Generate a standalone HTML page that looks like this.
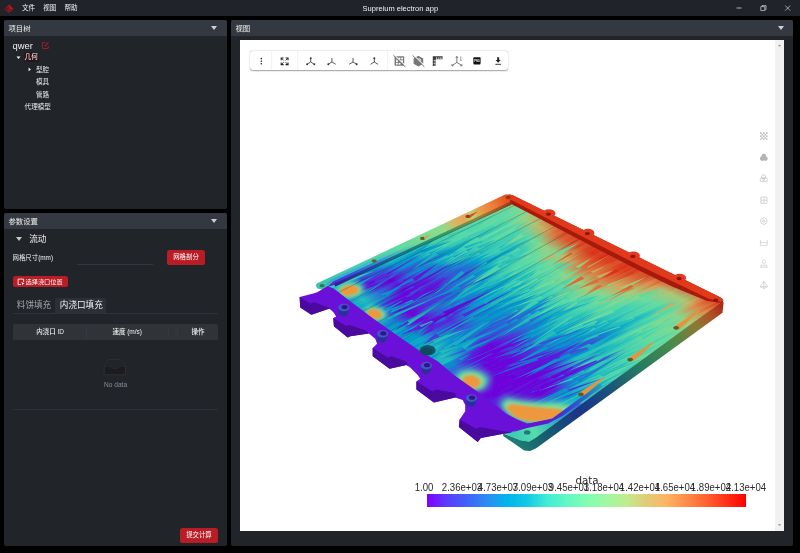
<!DOCTYPE html>
<html lang="zh-CN">
<head>
<meta charset="utf-8">
<title>Supreium electron app</title>
<style>
html,body{margin:0;padding:0;background:#000;}
body{width:800px;height:553px;overflow:hidden;position:relative;font-family:"Liberation Sans","Noto Sans CJK SC",sans-serif;color:#e4e6ea;}
.abs{position:absolute;}
.t{position:absolute;white-space:nowrap;line-height:1;opacity:.999;}
#titlebar{position:absolute;left:0;top:0;width:800px;height:15.8px;background:#202329;}
.menu{font-size:6.6px;top:5px;color:#f2f2f2;}
.panel{position:absolute;background:#212429;border-radius:2px;overflow:hidden;}
.phead{position:absolute;left:0;top:0;right:0;height:16.3px;background:#343840;}
.ptitle{font-size:7.4px;top:5.2px;left:4.4px;color:#f0f0f0;}
.caret{position:absolute;width:0;height:0;border-left:3.5px solid transparent;border-right:3.5px solid transparent;border-top:4.2px solid #cdcfd3;}
.lg{font-size:11.2px;color:#2a2a2a;}
.lg .c{display:inline-block;transform:translateX(-50%) scaleX(0.86);}
.lg .d{display:inline-block;transform:translateX(-50%);}
.btn{opacity:.999;position:absolute;background:#b81c25;border-radius:2.6px;color:#fff;font-size:6.4px;text-align:center;white-space:nowrap;}
</style>
</head>
<body>
<div id="titlebar">
  <svg class="abs" style="left:4px;top:3.7px" width="10.4" height="9.2" viewBox="0 0 10.4 9.2"><path d="M5 0.6 L9.4 5.3 L4.8 8.4 L0.6 5.7 Z" fill="#5a1216"/><path d="M5 0.6 L9.4 5.3 L5.8 4.9 Z" fill="#b01f26"/><path d="M5 0.6 L5.8 4.9 L2.8 4.5 Z" fill="#8a181e"/><path d="M2.8 4.5 L5.8 4.9 L9.4 5.3 L4.8 8.4 Z" fill="#6e1419"/><path d="M0.6 5.7 L5 0.6 L9.4 5.3 L4.8 8.4 Z" fill="none" stroke="#b82028" stroke-width="0.5"/><path d="M3.2 6 L4.9 7.1 M4.6 5.6 L6.4 6.5" stroke="#c8242c" stroke-width="0.6"/></svg>
  <div class="t menu" style="left:22px">文件</div>
  <div class="t menu" style="left:43.2px">视图</div>
  <div class="t menu" style="left:64.5px">帮助</div>
  <div class="t" id="apptitle" style="left:362.6px;top:4.7px;font-size:7.5px;color:#f0f0f0">Supreium electron app</div>
  <svg class="abs" style="left:730px;top:0" width="70" height="16" viewBox="0 0 70 16">
    <path d="M6.5 8 H11.5" stroke="#d8d8d8" stroke-width="0.8" fill="none"/>
    <path d="M30.8 6.6 h4 v4 h-4 z M32 6.6 v-1 h4 v4 h-1" stroke="#d8d8d8" stroke-width="0.7" fill="none"/>
    <path d="M55.2 5.6 l5 5 M60.2 5.6 l-5 5" stroke="#d8d8d8" stroke-width="0.7" fill="none"/>
  </svg>
</div>

<!-- project tree panel -->
<div class="panel" id="p1" style="left:4px;top:19.7px;width:223px;height:189.2px">
  <div class="phead"></div>
  <div class="t ptitle">项目树</div>
  <div class="caret" style="left:207.4px;top:6.1px"></div>
  <div class="t" style="left:8.6px;top:21.6px;font-size:9.4px;color:#f0f0f0">qwer</div>
  <svg class="abs" style="left:37px;top:21.8px" width="9" height="9" viewBox="0 0 9 9"><path d="M4.2 1.6 H1.4 V7.4 H7.2 V4.8" fill="none" stroke="#a82028" stroke-width="0.9"/><path d="M3.6 5.4 L7.4 1.4" stroke="#a82028" stroke-width="1.1"/></svg>
  <svg class="abs" style="left:12px;top:36px" width="5" height="4" viewBox="0 0 5 4"><path d="M0.5 0.6H4.5L2.5 2.9Z" fill="#f4f4f4"/></svg>
  <div class="abs" style="left:19.6px;top:32.8px;width:15px;height:9.8px;background:#2b1518;border-radius:2px"></div>
  <div class="t" style="left:20.6px;top:34.6px;font-size:6.6px;color:#f4f4f4">几何</div>
  <svg class="abs" style="left:24px;top:47.4px" width="4" height="5" viewBox="0 0 4 5"><path d="M0.6 0.5L2.9 2.4L0.6 4.3Z" fill="#f4f4f4"/></svg>
  <div class="t" style="left:32px;top:47px;font-size:6.6px;color:#e8e8e8">型腔</div>
  <div class="t" style="left:32px;top:59.6px;font-size:6.6px;color:#e8e8e8">模具</div>
  <div class="t" style="left:32px;top:72.2px;font-size:6.6px;color:#e8e8e8">管路</div>
  <div class="t" style="left:20.6px;top:84.1px;font-size:6.6px;color:#e8e8e8">代理模型</div>
</div>

<!-- parameter panel -->
<div class="panel" id="p2" style="left:4px;top:212.6px;width:223px;height:333px">
  <div class="phead"></div>
  <div class="t ptitle">参数设置</div>
  <div class="caret" style="left:207.4px;top:6.1px"></div>
  <div class="caret" style="left:12px;top:24.4px;border-top-color:#c4c6ca"></div>
  <div class="t" style="left:25.2px;top:22px;font-size:8.6px;color:#f0f0f0">流动</div>
  <div class="t" style="left:8.6px;top:42px;font-size:6.4px;color:#f0f0f0">网格尺寸(mm)</div>
  <div class="abs" style="left:73.2px;top:51.2px;width:76px;height:0.6px;background:#34373e"></div>
  <div class="btn" style="left:163px;top:37.6px;width:38px;height:14.6px;line-height:14.6px">网格剖分</div>
  <div class="btn" style="left:8.6px;top:63.4px;width:55.6px;height:11.4px;line-height:11.4px;font-size:6.2px;text-indent:7.4px">选择浇口位置</div>
  <svg class="abs" style="left:13.2px;top:65.2px" width="8.8" height="8.8" viewBox="0 0 8 8"><path d="M3.6 6 H1 V1 H6 V3.6" fill="none" stroke="#fff" stroke-width="0.8"/><path d="M4 3.6 L6.8 5 L5.6 5.4 L5.2 6.8 Z" fill="#fff"/></svg>
  <div class="abs" style="left:8.6px;top:100.4px;width:205.6px;height:0.6px;background:#2f3239"></div>
  <div class="abs" style="left:51px;top:85.4px;width:51px;height:15.2px;background:#2c2f36;border-radius:2px 2px 0 0"></div>
  <div class="t" style="left:12.8px;top:88.6px;font-size:8.6px;color:#a0a3a9">料饼填充</div>
  <div class="t" style="left:55.8px;top:88.6px;font-size:8.6px;color:#eef0f2">内浇口填充</div>
  <div class="abs" style="left:8.8px;top:111.6px;width:205.4px;height:16px;background:#303338;border-radius:2px 2px 0 0"></div>
  <div class="abs" style="left:82px;top:114px;width:0.5px;height:11px;background:#373a41"></div>
  <div class="abs" style="left:163.8px;top:114px;width:0.5px;height:11px;background:#35383f"></div><div class="abs" style="left:173.2px;top:114px;width:0.5px;height:11px;background:#35383f"></div>
  <div class="t" style="left:32.2px;top:116.5px;font-size:6.5px;color:#f0f0f0;font-weight:500">内浇口 ID</div>
  <div class="t" style="left:108.4px;top:116.5px;font-size:6.5px;color:#f0f0f0;font-weight:500">速度 (m/s)</div>
  <div class="t" style="left:187.4px;top:116.5px;font-size:6.5px;color:#f0f0f0;font-weight:500">操作</div>
  <svg class="abs" style="left:99px;top:145px" width="24" height="19" viewBox="0 0 24 19"><path d="M1.2 8 L6 1.6 H17.6 L22.4 8 V16.8 H1.2 Z" fill="#1b1c1f" stroke="#3a3430" stroke-width="0.8"/><path d="M1.2 8 H7.4 Q7.6 10.4 12 10.4 Q16.2 10.4 16.4 8 H22.4" fill="none" stroke="#3a3430" stroke-width="0.8"/><path d="M1.6 8 L6 2 H17.6 L22 8 H16.4 Q16.2 10.4 12 10.4 Q7.6 10.4 7.4 8 Z" fill="#212429"/></svg>
  <div class="t" style="left:100px;top:169.4px;font-size:6.6px;color:#8a8d93">No data</div>
  <div class="abs" style="left:8.8px;top:196.4px;width:205.4px;height:0.6px;background:#2c2f35"></div>
  <div class="btn" style="left:175.8px;top:315.6px;width:38.4px;height:14.6px;line-height:14.6px">提交计算</div>
</div>

<!-- view panel -->
<div class="panel" id="p3" style="left:231px;top:19.7px;width:561.6px;height:525.9px">
  <div class="phead"></div>
  <div class="t ptitle">视图</div>
  <div class="caret" style="left:546.6px;top:6.1px"></div>
  <div class="abs" id="canvas" style="left:8.8px;top:20.3px;width:544.2px;height:490.7px;background:#fff;overflow:hidden">
    <svg class="abs" style="left:0;top:0" width="543.6" height="491.0" viewBox="0 0 543.6 491.0"><defs><clipPath id="plate"><polygon points="78.2,246.0 289.2,402.0 482.2,261.5 268.2,155.0"/></clipPath><linearGradient id="g0" gradientUnits="userSpaceOnUse" x1="79.0" y1="246.6" x2="269.0" y2="155.4"><stop offset="0.000" stop-color="#5ad9a6"/><stop offset="0.083" stop-color="#7fda91"/><stop offset="0.167" stop-color="#67db9f"/><stop offset="0.250" stop-color="#7bda94"/><stop offset="0.333" stop-color="#8bd78a"/><stop offset="0.417" stop-color="#84d88e"/><stop offset="0.500" stop-color="#97d283"/><stop offset="0.583" stop-color="#89d78b"/><stop offset="0.667" stop-color="#81d990"/><stop offset="0.750" stop-color="#76db96"/><stop offset="0.833" stop-color="#8dd689"/><stop offset="0.917" stop-color="#a8c978"/><stop offset="1.000" stop-color="#db7d41"/></linearGradient><linearGradient id="g1" gradientUnits="userSpaceOnUse" x1="80.5" y1="247.7" x2="270.6" y2="156.2"><stop offset="0.000" stop-color="#3bcdb5"/><stop offset="0.083" stop-color="#54d8a9"/><stop offset="0.167" stop-color="#2cc3bb"/><stop offset="0.250" stop-color="#3accb5"/><stop offset="0.333" stop-color="#4bd5ad"/><stop offset="0.417" stop-color="#44d2b0"/><stop offset="0.500" stop-color="#5ad9a6"/><stop offset="0.583" stop-color="#59d9a6"/><stop offset="0.667" stop-color="#60daa2"/><stop offset="0.750" stop-color="#62dba1"/><stop offset="0.833" stop-color="#7eda92"/><stop offset="0.917" stop-color="#9bd080"/><stop offset="1.000" stop-color="#db8f4c"/></linearGradient><linearGradient id="g2" gradientUnits="userSpaceOnUse" x1="82.1" y1="248.9" x2="272.2" y2="157.0"><stop offset="0.000" stop-color="#3bcdb5"/><stop offset="0.083" stop-color="#4fd6ab"/><stop offset="0.167" stop-color="#1cb6c1"/><stop offset="0.250" stop-color="#28c1bc"/><stop offset="0.333" stop-color="#47d3af"/><stop offset="0.417" stop-color="#47d3af"/><stop offset="0.500" stop-color="#66db9f"/><stop offset="0.583" stop-color="#64dba0"/><stop offset="0.667" stop-color="#6bdb9c"/><stop offset="0.750" stop-color="#69db9d"/><stop offset="0.833" stop-color="#83d98f"/><stop offset="0.917" stop-color="#99d181"/><stop offset="1.000" stop-color="#db9751"/></linearGradient><linearGradient id="g3" gradientUnits="userSpaceOnUse" x1="83.7" y1="250.0" x2="273.7" y2="157.8"><stop offset="0.000" stop-color="#3cceb4"/><stop offset="0.083" stop-color="#53d7a9"/><stop offset="0.167" stop-color="#1ab5c2"/><stop offset="0.250" stop-color="#2cc3bb"/><stop offset="0.333" stop-color="#51d7aa"/><stop offset="0.417" stop-color="#52d7aa"/><stop offset="0.500" stop-color="#74db98"/><stop offset="0.583" stop-color="#76db97"/><stop offset="0.667" stop-color="#7fda91"/><stop offset="0.750" stop-color="#7cda93"/><stop offset="0.833" stop-color="#8fd587"/><stop offset="0.917" stop-color="#9bd080"/><stop offset="1.000" stop-color="#db9a53"/></linearGradient><linearGradient id="g4" gradientUnits="userSpaceOnUse" x1="85.2" y1="251.2" x2="275.3" y2="158.6"><stop offset="0.000" stop-color="#26bfbe"/><stop offset="0.083" stop-color="#3dceb4"/><stop offset="0.167" stop-color="#0497cc"/><stop offset="0.250" stop-color="#13afc4"/><stop offset="0.333" stop-color="#34c9b8"/><stop offset="0.417" stop-color="#2dc4ba"/><stop offset="0.500" stop-color="#4cd5ac"/><stop offset="0.583" stop-color="#52d7aa"/><stop offset="0.667" stop-color="#61daa2"/><stop offset="0.750" stop-color="#62dba1"/><stop offset="0.833" stop-color="#76db96"/><stop offset="0.917" stop-color="#80d991"/><stop offset="1.000" stop-color="#b8bd6d"/></linearGradient><linearGradient id="g5" gradientUnits="userSpaceOnUse" x1="86.8" y1="252.4" x2="276.9" y2="159.3"><stop offset="0.000" stop-color="#10acc5"/><stop offset="0.083" stop-color="#26bfbd"/><stop offset="0.167" stop-color="#256dd4"/><stop offset="0.250" stop-color="#0c8ece"/><stop offset="0.333" stop-color="#1fb9c0"/><stop offset="0.417" stop-color="#1db8c1"/><stop offset="0.500" stop-color="#45d2b0"/><stop offset="0.583" stop-color="#49d4ae"/><stop offset="0.667" stop-color="#56d8a8"/><stop offset="0.750" stop-color="#52d7aa"/><stop offset="0.833" stop-color="#70db9a"/><stop offset="0.917" stop-color="#81d990"/><stop offset="1.000" stop-color="#c0b667"/></linearGradient><linearGradient id="g6" gradientUnits="userSpaceOnUse" x1="88.4" y1="253.5" x2="278.5" y2="160.1"><stop offset="0.000" stop-color="#1bb6c1"/><stop offset="0.083" stop-color="#2cc4bb"/><stop offset="0.167" stop-color="#2c63d5"/><stop offset="0.250" stop-color="#1582d0"/><stop offset="0.333" stop-color="#19b4c2"/><stop offset="0.417" stop-color="#16b2c3"/><stop offset="0.500" stop-color="#40d0b2"/><stop offset="0.583" stop-color="#46d2af"/><stop offset="0.667" stop-color="#54d7a9"/><stop offset="0.750" stop-color="#4ed6ab"/><stop offset="0.833" stop-color="#66db9f"/><stop offset="0.917" stop-color="#6fdb9a"/><stop offset="1.000" stop-color="#a6ca79"/></linearGradient><linearGradient id="g7" gradientUnits="userSpaceOnUse" x1="89.9" y1="254.7" x2="280.1" y2="160.9"><stop offset="0.000" stop-color="#029dca"/><stop offset="0.083" stop-color="#17b2c3"/><stop offset="0.167" stop-color="#463dd9"/><stop offset="0.250" stop-color="#2968d5"/><stop offset="0.333" stop-color="#0ba6c7"/><stop offset="0.417" stop-color="#0aa6c7"/><stop offset="0.500" stop-color="#39ccb5"/><stop offset="0.583" stop-color="#42d1b1"/><stop offset="0.667" stop-color="#52d7aa"/><stop offset="0.750" stop-color="#4ed6ab"/><stop offset="0.833" stop-color="#65dba0"/><stop offset="0.917" stop-color="#6ddb9b"/><stop offset="1.000" stop-color="#a1cc7c"/></linearGradient><linearGradient id="g8" gradientUnits="userSpaceOnUse" x1="91.5" y1="255.8" x2="281.7" y2="161.7"><stop offset="0.000" stop-color="#0398cc"/><stop offset="0.083" stop-color="#0eaac6"/><stop offset="0.167" stop-color="#5921db"/><stop offset="0.250" stop-color="#3d4bd8"/><stop offset="0.333" stop-color="#0694cc"/><stop offset="0.417" stop-color="#0595cc"/><stop offset="0.500" stop-color="#2cc3bb"/><stop offset="0.583" stop-color="#3bcdb5"/><stop offset="0.667" stop-color="#4ed6ac"/><stop offset="0.750" stop-color="#4ed6ac"/><stop offset="0.833" stop-color="#68db9e"/><stop offset="0.917" stop-color="#71db99"/><stop offset="1.000" stop-color="#a7c978"/></linearGradient><linearGradient id="g9" gradientUnits="userSpaceOnUse" x1="93.0" y1="257.0" x2="283.3" y2="162.5"><stop offset="0.000" stop-color="#0eaac6"/><stop offset="0.083" stop-color="#16b1c4"/><stop offset="0.167" stop-color="#6115db"/><stop offset="0.250" stop-color="#512dda"/><stop offset="0.333" stop-color="#1681d1"/><stop offset="0.417" stop-color="#1286cf"/><stop offset="0.500" stop-color="#22bcbf"/><stop offset="0.583" stop-color="#35c9b7"/><stop offset="0.667" stop-color="#49d4ae"/><stop offset="0.750" stop-color="#4cd5ad"/><stop offset="0.833" stop-color="#62dba1"/><stop offset="0.917" stop-color="#6adb9d"/><stop offset="1.000" stop-color="#9bd080"/></linearGradient><linearGradient id="g10" gradientUnits="userSpaceOnUse" x1="94.6" y1="258.1" x2="284.8" y2="163.3"><stop offset="0.000" stop-color="#0da9c7"/><stop offset="0.083" stop-color="#1db8c1"/><stop offset="0.167" stop-color="#532ada"/><stop offset="0.250" stop-color="#3f48d8"/><stop offset="0.333" stop-color="#0199cb"/><stop offset="0.417" stop-color="#04a0c9"/><stop offset="0.500" stop-color="#34c9b8"/><stop offset="0.583" stop-color="#45d2b0"/><stop offset="0.667" stop-color="#54d7a9"/><stop offset="0.750" stop-color="#50d6ab"/><stop offset="0.833" stop-color="#5ddaa4"/><stop offset="0.917" stop-color="#5bd9a5"/><stop offset="1.000" stop-color="#87d88d"/></linearGradient><linearGradient id="g11" gradientUnits="userSpaceOnUse" x1="96.2" y1="259.3" x2="286.4" y2="164.1"><stop offset="0.000" stop-color="#0595cc"/><stop offset="0.083" stop-color="#0eaac6"/><stop offset="0.167" stop-color="#6114db"/><stop offset="0.250" stop-color="#522cda"/><stop offset="0.333" stop-color="#0f8acf"/><stop offset="0.417" stop-color="#0398cb"/><stop offset="0.500" stop-color="#2dc4ba"/><stop offset="0.583" stop-color="#41d0b2"/><stop offset="0.667" stop-color="#4ed6ab"/><stop offset="0.750" stop-color="#4ad4ad"/><stop offset="0.833" stop-color="#5ddaa4"/><stop offset="0.917" stop-color="#63dba1"/><stop offset="1.000" stop-color="#97d282"/></linearGradient><linearGradient id="g12" gradientUnits="userSpaceOnUse" x1="97.7" y1="260.4" x2="288.0" y2="164.9"><stop offset="0.000" stop-color="#0aa6c7"/><stop offset="0.083" stop-color="#1bb6c1"/><stop offset="0.167" stop-color="#5526da"/><stop offset="0.250" stop-color="#522bda"/><stop offset="0.333" stop-color="#0b8fce"/><stop offset="0.417" stop-color="#07a3c8"/><stop offset="0.500" stop-color="#35cab7"/><stop offset="0.583" stop-color="#4ed6ac"/><stop offset="0.667" stop-color="#5edaa3"/><stop offset="0.750" stop-color="#5ddaa4"/><stop offset="0.833" stop-color="#68db9e"/><stop offset="0.917" stop-color="#6adb9d"/><stop offset="1.000" stop-color="#98d182"/></linearGradient><linearGradient id="g13" gradientUnits="userSpaceOnUse" x1="99.3" y1="261.6" x2="289.6" y2="165.7"><stop offset="0.000" stop-color="#0595cc"/><stop offset="0.083" stop-color="#11adc5"/><stop offset="0.167" stop-color="#5a1fdb"/><stop offset="0.250" stop-color="#5b1edb"/><stop offset="0.333" stop-color="#1d78d2"/><stop offset="0.417" stop-color="#1286cf"/><stop offset="0.500" stop-color="#10abc6"/><stop offset="0.583" stop-color="#31c7b9"/><stop offset="0.667" stop-color="#48d3ae"/><stop offset="0.750" stop-color="#50d6ab"/><stop offset="0.833" stop-color="#5ddaa4"/><stop offset="0.917" stop-color="#65dba0"/><stop offset="1.000" stop-color="#95d284"/></linearGradient><linearGradient id="g14" gradientUnits="userSpaceOnUse" x1="100.9" y1="262.8" x2="291.2" y2="166.4"><stop offset="0.000" stop-color="#08a4c8"/><stop offset="0.083" stop-color="#12adc5"/><stop offset="0.167" stop-color="#650edb"/><stop offset="0.250" stop-color="#6e00db"/><stop offset="0.333" stop-color="#3753d7"/><stop offset="0.417" stop-color="#2271d3"/><stop offset="0.500" stop-color="#039fca"/><stop offset="0.583" stop-color="#25bebe"/><stop offset="0.667" stop-color="#3bcdb4"/><stop offset="0.750" stop-color="#43d1b1"/><stop offset="0.833" stop-color="#53d7a9"/><stop offset="0.917" stop-color="#65dba0"/><stop offset="1.000" stop-color="#97d282"/></linearGradient><linearGradient id="g15" gradientUnits="userSpaceOnUse" x1="102.4" y1="263.9" x2="292.8" y2="167.2"><stop offset="0.000" stop-color="#197dd1"/><stop offset="0.083" stop-color="#0299cb"/><stop offset="0.167" stop-color="#6808db"/><stop offset="0.250" stop-color="#6e00db"/><stop offset="0.333" stop-color="#3f48d8"/><stop offset="0.417" stop-color="#305ed6"/><stop offset="0.500" stop-color="#1385d0"/><stop offset="0.583" stop-color="#11adc5"/><stop offset="0.667" stop-color="#2ac2bc"/><stop offset="0.750" stop-color="#35c9b7"/><stop offset="0.833" stop-color="#49d4ae"/><stop offset="0.917" stop-color="#67db9f"/><stop offset="1.000" stop-color="#9cd080"/></linearGradient><linearGradient id="g16" gradientUnits="userSpaceOnUse" x1="104.0" y1="265.1" x2="294.4" y2="168.0"><stop offset="0.000" stop-color="#0397cc"/><stop offset="0.083" stop-color="#15b1c4"/><stop offset="0.167" stop-color="#4d33da"/><stop offset="0.250" stop-color="#6e00db"/><stop offset="0.333" stop-color="#2b64d5"/><stop offset="0.417" stop-color="#197dd1"/><stop offset="0.500" stop-color="#029dca"/><stop offset="0.583" stop-color="#24bebe"/><stop offset="0.667" stop-color="#3bcdb5"/><stop offset="0.750" stop-color="#41d0b2"/><stop offset="0.833" stop-color="#4dd5ac"/><stop offset="0.917" stop-color="#6cdb9c"/><stop offset="1.000" stop-color="#a0cd7d"/></linearGradient><linearGradient id="g17" gradientUnits="userSpaceOnUse" x1="105.6" y1="266.2" x2="295.9" y2="168.8"><stop offset="0.000" stop-color="#0a90cd"/><stop offset="0.083" stop-color="#11adc5"/><stop offset="0.167" stop-color="#4938d9"/><stop offset="0.250" stop-color="#6e00db"/><stop offset="0.333" stop-color="#2c63d5"/><stop offset="0.417" stop-color="#1780d1"/><stop offset="0.500" stop-color="#06a2c9"/><stop offset="0.583" stop-color="#1eb9c0"/><stop offset="0.667" stop-color="#2bc3bb"/><stop offset="0.750" stop-color="#28c1bc"/><stop offset="0.833" stop-color="#3dceb4"/><stop offset="0.917" stop-color="#6fdb9a"/><stop offset="1.000" stop-color="#abc776"/></linearGradient><linearGradient id="g18" gradientUnits="userSpaceOnUse" x1="107.1" y1="267.4" x2="297.5" y2="169.6"><stop offset="0.000" stop-color="#06a2c9"/><stop offset="0.083" stop-color="#25bebe"/><stop offset="0.167" stop-color="#2c63d5"/><stop offset="0.250" stop-color="#5920db"/><stop offset="0.333" stop-color="#1582d0"/><stop offset="0.417" stop-color="#009bca"/><stop offset="0.500" stop-color="#1ab5c2"/><stop offset="0.583" stop-color="#3bcdb4"/><stop offset="0.667" stop-color="#52d7aa"/><stop offset="0.750" stop-color="#56d8a7"/><stop offset="0.833" stop-color="#5bd9a5"/><stop offset="0.917" stop-color="#87d88c"/><stop offset="1.000" stop-color="#bbba6b"/></linearGradient><linearGradient id="g19" gradientUnits="userSpaceOnUse" x1="108.7" y1="268.5" x2="299.1" y2="170.4"><stop offset="0.000" stop-color="#029eca"/><stop offset="0.083" stop-color="#22bcbf"/><stop offset="0.167" stop-color="#276bd4"/><stop offset="0.250" stop-color="#5a1fdb"/><stop offset="0.333" stop-color="#1582d0"/><stop offset="0.417" stop-color="#019cca"/><stop offset="0.500" stop-color="#19b5c2"/><stop offset="0.583" stop-color="#41d0b2"/><stop offset="0.667" stop-color="#5edaa3"/><stop offset="0.750" stop-color="#69db9e"/><stop offset="0.833" stop-color="#68db9e"/><stop offset="0.917" stop-color="#96d283"/><stop offset="1.000" stop-color="#caad60"/></linearGradient><linearGradient id="g20" gradientUnits="userSpaceOnUse" x1="110.2" y1="269.7" x2="300.7" y2="171.2"><stop offset="0.000" stop-color="#10acc5"/><stop offset="0.083" stop-color="#21bbbf"/><stop offset="0.167" stop-color="#2f5fd6"/><stop offset="0.250" stop-color="#6e00db"/><stop offset="0.333" stop-color="#2f5fd6"/><stop offset="0.417" stop-color="#1384d0"/><stop offset="0.500" stop-color="#0aa6c7"/><stop offset="0.583" stop-color="#27c0bd"/><stop offset="0.667" stop-color="#3ccdb4"/><stop offset="0.750" stop-color="#3ecfb3"/><stop offset="0.833" stop-color="#4bd4ad"/><stop offset="0.917" stop-color="#8fd587"/><stop offset="1.000" stop-color="#d0a75c"/></linearGradient><linearGradient id="g21" gradientUnits="userSpaceOnUse" x1="111.8" y1="270.8" x2="302.3" y2="172.0"><stop offset="0.000" stop-color="#0397cc"/><stop offset="0.083" stop-color="#18b3c3"/><stop offset="0.167" stop-color="#266cd4"/><stop offset="0.250" stop-color="#650ddb"/><stop offset="0.333" stop-color="#266bd4"/><stop offset="0.417" stop-color="#1089cf"/><stop offset="0.500" stop-color="#06a2c9"/><stop offset="0.583" stop-color="#25bebe"/><stop offset="0.667" stop-color="#3ecfb3"/><stop offset="0.750" stop-color="#44d2b0"/><stop offset="0.833" stop-color="#50d6ab"/><stop offset="0.917" stop-color="#9ccf7f"/><stop offset="1.000" stop-color="#db934f"/></linearGradient><linearGradient id="g22" gradientUnits="userSpaceOnUse" x1="113.4" y1="272.0" x2="303.9" y2="172.7"><stop offset="0.000" stop-color="#06a1c9"/><stop offset="0.083" stop-color="#15b0c4"/><stop offset="0.167" stop-color="#2d62d5"/><stop offset="0.250" stop-color="#6e00db"/><stop offset="0.333" stop-color="#3852d7"/><stop offset="0.417" stop-color="#1d78d2"/><stop offset="0.500" stop-color="#0596cc"/><stop offset="0.583" stop-color="#25bebe"/><stop offset="0.667" stop-color="#48d3ae"/><stop offset="0.750" stop-color="#5ad9a5"/><stop offset="0.833" stop-color="#56d8a8"/><stop offset="0.917" stop-color="#9ad081"/><stop offset="1.000" stop-color="#d3a45a"/></linearGradient><linearGradient id="g23" gradientUnits="userSpaceOnUse" x1="114.9" y1="273.2" x2="305.5" y2="173.5"><stop offset="0.000" stop-color="#0eaac6"/><stop offset="0.083" stop-color="#1eb9c0"/><stop offset="0.167" stop-color="#1c79d2"/><stop offset="0.250" stop-color="#6015db"/><stop offset="0.333" stop-color="#2e61d6"/><stop offset="0.417" stop-color="#197ed1"/><stop offset="0.500" stop-color="#0a8fce"/><stop offset="0.583" stop-color="#25bebe"/><stop offset="0.667" stop-color="#4ed6ac"/><stop offset="0.750" stop-color="#67db9f"/><stop offset="0.833" stop-color="#62daa2"/><stop offset="0.917" stop-color="#abc675"/><stop offset="1.000" stop-color="#db8b4a"/></linearGradient><linearGradient id="g24" gradientUnits="userSpaceOnUse" x1="116.5" y1="274.3" x2="307.0" y2="174.3"><stop offset="0.000" stop-color="#0595cc"/><stop offset="0.083" stop-color="#019acb"/><stop offset="0.167" stop-color="#4047d8"/><stop offset="0.250" stop-color="#6e00db"/><stop offset="0.333" stop-color="#512cda"/><stop offset="0.417" stop-color="#325cd6"/><stop offset="0.500" stop-color="#1b7ad2"/><stop offset="0.583" stop-color="#11adc5"/><stop offset="0.667" stop-color="#37cbb6"/><stop offset="0.750" stop-color="#4fd6ab"/><stop offset="0.833" stop-color="#4ed6ab"/><stop offset="0.917" stop-color="#a0cd7d"/><stop offset="1.000" stop-color="#db9751"/></linearGradient><linearGradient id="g25" gradientUnits="userSpaceOnUse" x1="118.1" y1="275.5" x2="308.6" y2="175.1"><stop offset="0.000" stop-color="#019cca"/><stop offset="0.083" stop-color="#029eca"/><stop offset="0.167" stop-color="#3852d7"/><stop offset="0.250" stop-color="#6e00db"/><stop offset="0.333" stop-color="#4441d9"/><stop offset="0.417" stop-color="#2074d3"/><stop offset="0.500" stop-color="#0990cd"/><stop offset="0.583" stop-color="#18b3c3"/><stop offset="0.667" stop-color="#32c7b9"/><stop offset="0.750" stop-color="#3ecfb3"/><stop offset="0.833" stop-color="#4ad4ae"/><stop offset="0.917" stop-color="#a9c877"/><stop offset="1.000" stop-color="#db7c41"/></linearGradient><linearGradient id="g26" gradientUnits="userSpaceOnUse" x1="119.6" y1="276.6" x2="310.2" y2="175.9"><stop offset="0.000" stop-color="#049fca"/><stop offset="0.083" stop-color="#0a90cd"/><stop offset="0.167" stop-color="#4d33da"/><stop offset="0.250" stop-color="#6e00db"/><stop offset="0.333" stop-color="#6410db"/><stop offset="0.417" stop-color="#4144d9"/><stop offset="0.500" stop-color="#305ed6"/><stop offset="0.583" stop-color="#0298cb"/><stop offset="0.667" stop-color="#22bcbf"/><stop offset="0.750" stop-color="#39ccb5"/><stop offset="0.833" stop-color="#45d2b0"/><stop offset="0.917" stop-color="#a2cc7b"/><stop offset="1.000" stop-color="#db8b4a"/></linearGradient><linearGradient id="g27" gradientUnits="userSpaceOnUse" x1="121.2" y1="277.8" x2="311.8" y2="176.7"><stop offset="0.000" stop-color="#0991cd"/><stop offset="0.083" stop-color="#197dd1"/><stop offset="0.167" stop-color="#5a1fdb"/><stop offset="0.250" stop-color="#6e00db"/><stop offset="0.333" stop-color="#6114db"/><stop offset="0.417" stop-color="#3359d6"/><stop offset="0.500" stop-color="#197cd1"/><stop offset="0.583" stop-color="#0faac6"/><stop offset="0.667" stop-color="#2cc4bb"/><stop offset="0.750" stop-color="#3acdb5"/><stop offset="0.833" stop-color="#4ed6ac"/><stop offset="0.917" stop-color="#afc373"/><stop offset="1.000" stop-color="#db763e"/></linearGradient><linearGradient id="g28" gradientUnits="userSpaceOnUse" x1="122.7" y1="278.9" x2="313.4" y2="177.5"><stop offset="0.000" stop-color="#05a0c9"/><stop offset="0.083" stop-color="#0a90cd"/><stop offset="0.167" stop-color="#463dd9"/><stop offset="0.250" stop-color="#5d1adb"/><stop offset="0.333" stop-color="#4c34da"/><stop offset="0.417" stop-color="#276bd4"/><stop offset="0.500" stop-color="#197cd1"/><stop offset="0.583" stop-color="#15b0c4"/><stop offset="0.667" stop-color="#35cab7"/><stop offset="0.750" stop-color="#45d2b0"/><stop offset="0.833" stop-color="#5fdaa3"/><stop offset="0.917" stop-color="#c0b768"/><stop offset="1.000" stop-color="#db5b2f"/></linearGradient><linearGradient id="g29" gradientUnits="userSpaceOnUse" x1="124.3" y1="280.1" x2="315.1" y2="178.3"><stop offset="0.000" stop-color="#0892cd"/><stop offset="0.083" stop-color="#2271d3"/><stop offset="0.167" stop-color="#6b04db"/><stop offset="0.250" stop-color="#6e00db"/><stop offset="0.333" stop-color="#6d00db"/><stop offset="0.417" stop-color="#4046d8"/><stop offset="0.500" stop-color="#2c63d5"/><stop offset="0.583" stop-color="#0299cb"/><stop offset="0.667" stop-color="#1ab6c2"/><stop offset="0.750" stop-color="#24bdbe"/><stop offset="0.833" stop-color="#4ed6ab"/><stop offset="0.917" stop-color="#b9bc6c"/><stop offset="1.000" stop-color="#db5c2f"/></linearGradient><linearGradient id="g30" gradientUnits="userSpaceOnUse" x1="125.9" y1="281.2" x2="316.8" y2="179.2"><stop offset="0.000" stop-color="#0a90cd"/><stop offset="0.083" stop-color="#246ed4"/><stop offset="0.167" stop-color="#6e00db"/><stop offset="0.250" stop-color="#6e00db"/><stop offset="0.333" stop-color="#6b05db"/><stop offset="0.417" stop-color="#3f48d8"/><stop offset="0.500" stop-color="#2e60d6"/><stop offset="0.583" stop-color="#06a2c9"/><stop offset="0.667" stop-color="#2bc3bb"/><stop offset="0.750" stop-color="#3accb5"/><stop offset="0.833" stop-color="#61daa2"/><stop offset="0.917" stop-color="#c3b465"/><stop offset="1.000" stop-color="#db5c2f"/></linearGradient><linearGradient id="g31" gradientUnits="userSpaceOnUse" x1="127.4" y1="282.4" x2="318.5" y2="180.0"><stop offset="0.000" stop-color="#0892cd"/><stop offset="0.083" stop-color="#2e61d6"/><stop offset="0.167" stop-color="#6e00db"/><stop offset="0.250" stop-color="#6e00db"/><stop offset="0.333" stop-color="#6e00db"/><stop offset="0.417" stop-color="#4145d8"/><stop offset="0.500" stop-color="#2271d3"/><stop offset="0.583" stop-color="#09a5c8"/><stop offset="0.667" stop-color="#23bdbe"/><stop offset="0.750" stop-color="#26bfbd"/><stop offset="0.833" stop-color="#5ad9a5"/><stop offset="0.917" stop-color="#c4b365"/><stop offset="1.000" stop-color="#db562c"/></linearGradient><linearGradient id="g32" gradientUnits="userSpaceOnUse" x1="129.0" y1="283.6" x2="320.3" y2="180.9"><stop offset="0.000" stop-color="#019acb"/><stop offset="0.083" stop-color="#1e76d2"/><stop offset="0.167" stop-color="#6e00db"/><stop offset="0.250" stop-color="#6410db"/><stop offset="0.333" stop-color="#650edb"/><stop offset="0.417" stop-color="#3951d7"/><stop offset="0.500" stop-color="#266bd4"/><stop offset="0.583" stop-color="#0ca8c7"/><stop offset="0.667" stop-color="#2dc4bb"/><stop offset="0.750" stop-color="#34c9b8"/><stop offset="0.833" stop-color="#6cdb9c"/><stop offset="0.917" stop-color="#d4a259"/><stop offset="1.000" stop-color="#db4724"/></linearGradient><linearGradient id="g33" gradientUnits="userSpaceOnUse" x1="130.6" y1="284.7" x2="322.1" y2="181.8"><stop offset="0.000" stop-color="#187ed1"/><stop offset="0.083" stop-color="#3556d7"/><stop offset="0.167" stop-color="#6e00db"/><stop offset="0.250" stop-color="#6e00db"/><stop offset="0.333" stop-color="#6e00db"/><stop offset="0.417" stop-color="#6015db"/><stop offset="0.500" stop-color="#532ada"/><stop offset="0.583" stop-color="#2172d3"/><stop offset="0.667" stop-color="#019acb"/><stop offset="0.750" stop-color="#06a2c9"/><stop offset="0.833" stop-color="#4dd5ac"/><stop offset="0.917" stop-color="#c3b365"/><stop offset="1.000" stop-color="#db5f31"/></linearGradient><linearGradient id="g34" gradientUnits="userSpaceOnUse" x1="132.1" y1="285.9" x2="323.9" y2="182.7"><stop offset="0.000" stop-color="#0595cc"/><stop offset="0.083" stop-color="#187fd1"/><stop offset="0.167" stop-color="#6e00db"/><stop offset="0.250" stop-color="#4342d9"/><stop offset="0.333" stop-color="#522bda"/><stop offset="0.417" stop-color="#3853d7"/><stop offset="0.500" stop-color="#305ed6"/><stop offset="0.583" stop-color="#009cca"/><stop offset="0.667" stop-color="#1fbac0"/><stop offset="0.750" stop-color="#24bebe"/><stop offset="0.833" stop-color="#69db9d"/><stop offset="0.917" stop-color="#db9751"/><stop offset="1.000" stop-color="#db3f20"/></linearGradient><linearGradient id="g35" gradientUnits="userSpaceOnUse" x1="133.7" y1="287.0" x2="325.8" y2="183.7"><stop offset="0.000" stop-color="#05a1c9"/><stop offset="0.083" stop-color="#1187cf"/><stop offset="0.167" stop-color="#6e00db"/><stop offset="0.250" stop-color="#4244d9"/><stop offset="0.333" stop-color="#463dd9"/><stop offset="0.417" stop-color="#266bd4"/><stop offset="0.500" stop-color="#1484d0"/><stop offset="0.583" stop-color="#16b1c3"/><stop offset="0.667" stop-color="#2fc6ba"/><stop offset="0.750" stop-color="#31c7b9"/><stop offset="0.833" stop-color="#74db98"/><stop offset="0.917" stop-color="#db8b4a"/><stop offset="1.000" stop-color="#db3f20"/></linearGradient><linearGradient id="g36" gradientUnits="userSpaceOnUse" x1="135.2" y1="288.2" x2="327.7" y2="184.6"><stop offset="0.000" stop-color="#0ca8c7"/><stop offset="0.083" stop-color="#0e8bcf"/><stop offset="0.167" stop-color="#6e00db"/><stop offset="0.250" stop-color="#4342d9"/><stop offset="0.333" stop-color="#4342d9"/><stop offset="0.417" stop-color="#266cd4"/><stop offset="0.500" stop-color="#1188cf"/><stop offset="0.583" stop-color="#15b1c4"/><stop offset="0.667" stop-color="#2bc3bb"/><stop offset="0.750" stop-color="#2cc3bb"/><stop offset="0.833" stop-color="#75db97"/><stop offset="0.917" stop-color="#db7e42"/><stop offset="1.000" stop-color="#db3018"/></linearGradient><linearGradient id="g37" gradientUnits="userSpaceOnUse" x1="136.8" y1="289.3" x2="329.6" y2="185.6"><stop offset="0.000" stop-color="#0ba7c7"/><stop offset="0.083" stop-color="#1384d0"/><stop offset="0.167" stop-color="#6e00db"/><stop offset="0.250" stop-color="#502fda"/><stop offset="0.333" stop-color="#4c34da"/><stop offset="0.417" stop-color="#3459d7"/><stop offset="0.500" stop-color="#1c7ad2"/><stop offset="0.583" stop-color="#0eaac6"/><stop offset="0.667" stop-color="#29c1bc"/><stop offset="0.750" stop-color="#32c8b8"/><stop offset="0.833" stop-color="#7ada94"/><stop offset="0.917" stop-color="#db793f"/><stop offset="1.000" stop-color="#db341a"/></linearGradient><linearGradient id="g38" gradientUnits="userSpaceOnUse" x1="138.4" y1="290.5" x2="331.6" y2="186.5"><stop offset="0.000" stop-color="#0a8fce"/><stop offset="0.083" stop-color="#2271d3"/><stop offset="0.167" stop-color="#6e00db"/><stop offset="0.250" stop-color="#512dda"/><stop offset="0.333" stop-color="#483ad9"/><stop offset="0.417" stop-color="#305ed6"/><stop offset="0.500" stop-color="#1286d0"/><stop offset="0.583" stop-color="#15b0c4"/><stop offset="0.667" stop-color="#2ec5ba"/><stop offset="0.750" stop-color="#38cbb6"/><stop offset="0.833" stop-color="#7dda92"/><stop offset="0.917" stop-color="#db763d"/><stop offset="1.000" stop-color="#db3d1f"/></linearGradient><linearGradient id="g39" gradientUnits="userSpaceOnUse" x1="139.9" y1="291.6" x2="333.6" y2="187.5"><stop offset="0.000" stop-color="#009bcb"/><stop offset="0.083" stop-color="#187ed1"/><stop offset="0.167" stop-color="#6e00db"/><stop offset="0.250" stop-color="#4a37da"/><stop offset="0.333" stop-color="#453fd9"/><stop offset="0.417" stop-color="#3655d7"/><stop offset="0.500" stop-color="#1e77d2"/><stop offset="0.583" stop-color="#15b1c4"/><stop offset="0.667" stop-color="#3bcdb4"/><stop offset="0.750" stop-color="#54d8a9"/><stop offset="0.833" stop-color="#92d486"/><stop offset="0.917" stop-color="#db6333"/><stop offset="1.000" stop-color="#db3219"/></linearGradient><linearGradient id="g40" gradientUnits="userSpaceOnUse" x1="141.5" y1="292.8" x2="335.6" y2="188.5"><stop offset="0.000" stop-color="#09a5c8"/><stop offset="0.083" stop-color="#0694cc"/><stop offset="0.167" stop-color="#6e00db"/><stop offset="0.250" stop-color="#2c64d5"/><stop offset="0.333" stop-color="#256dd4"/><stop offset="0.417" stop-color="#1c79d2"/><stop offset="0.500" stop-color="#0794cd"/><stop offset="0.583" stop-color="#28c1bc"/><stop offset="0.667" stop-color="#4ad4ae"/><stop offset="0.750" stop-color="#5fdaa3"/><stop offset="0.833" stop-color="#98d182"/><stop offset="0.917" stop-color="#db5f31"/><stop offset="1.000" stop-color="#db3018"/></linearGradient><linearGradient id="g41" gradientUnits="userSpaceOnUse" x1="143.1" y1="294.0" x2="337.6" y2="189.5"><stop offset="0.000" stop-color="#0aa6c7"/><stop offset="0.083" stop-color="#0299cb"/><stop offset="0.167" stop-color="#6a06db"/><stop offset="0.250" stop-color="#246ed4"/><stop offset="0.333" stop-color="#1d78d2"/><stop offset="0.417" stop-color="#187fd1"/><stop offset="0.500" stop-color="#0397cc"/><stop offset="0.583" stop-color="#26bfbd"/><stop offset="0.667" stop-color="#42d1b1"/><stop offset="0.750" stop-color="#54d8a9"/><stop offset="0.833" stop-color="#93d385"/><stop offset="0.917" stop-color="#db5b2f"/><stop offset="1.000" stop-color="#db3018"/></linearGradient><linearGradient id="g42" gradientUnits="userSpaceOnUse" x1="144.6" y1="295.1" x2="339.7" y2="190.6"><stop offset="0.000" stop-color="#0ca8c7"/><stop offset="0.083" stop-color="#0497cc"/><stop offset="0.167" stop-color="#6e00db"/><stop offset="0.250" stop-color="#305dd6"/><stop offset="0.333" stop-color="#1f75d3"/><stop offset="0.417" stop-color="#1582d0"/><stop offset="0.500" stop-color="#05a1c9"/><stop offset="0.583" stop-color="#2ec5ba"/><stop offset="0.667" stop-color="#4cd5ad"/><stop offset="0.750" stop-color="#5fdaa3"/><stop offset="0.833" stop-color="#95d284"/><stop offset="0.917" stop-color="#db6333"/><stop offset="1.000" stop-color="#db331a"/></linearGradient><linearGradient id="g43" gradientUnits="userSpaceOnUse" x1="146.2" y1="296.3" x2="341.8" y2="191.6"><stop offset="0.000" stop-color="#18b3c3"/><stop offset="0.083" stop-color="#08a4c8"/><stop offset="0.167" stop-color="#640fdb"/><stop offset="0.250" stop-color="#2968d5"/><stop offset="0.333" stop-color="#0e8bce"/><stop offset="0.417" stop-color="#009bcb"/><stop offset="0.500" stop-color="#1eb8c1"/><stop offset="0.583" stop-color="#3eceb3"/><stop offset="0.667" stop-color="#51d7aa"/><stop offset="0.750" stop-color="#5cdaa5"/><stop offset="0.833" stop-color="#96d283"/><stop offset="0.917" stop-color="#db592e"/><stop offset="1.000" stop-color="#db3018"/></linearGradient><linearGradient id="g44" gradientUnits="userSpaceOnUse" x1="147.8" y1="297.4" x2="343.9" y2="192.7"><stop offset="0.000" stop-color="#17b3c3"/><stop offset="0.083" stop-color="#049fc9"/><stop offset="0.167" stop-color="#6c03db"/><stop offset="0.250" stop-color="#3852d7"/><stop offset="0.333" stop-color="#1681d1"/><stop offset="0.417" stop-color="#0694cc"/><stop offset="0.500" stop-color="#19b4c2"/><stop offset="0.583" stop-color="#3fcfb3"/><stop offset="0.667" stop-color="#59d9a6"/><stop offset="0.750" stop-color="#6cdb9c"/><stop offset="0.833" stop-color="#9fce7d"/><stop offset="0.917" stop-color="#db522a"/><stop offset="1.000" stop-color="#db3018"/></linearGradient><linearGradient id="g45" gradientUnits="userSpaceOnUse" x1="149.3" y1="298.6" x2="346.0" y2="193.7"><stop offset="0.000" stop-color="#1188cf"/><stop offset="0.083" stop-color="#1582d0"/><stop offset="0.167" stop-color="#6e00db"/><stop offset="0.250" stop-color="#3753d7"/><stop offset="0.333" stop-color="#1a7bd2"/><stop offset="0.417" stop-color="#1286d0"/><stop offset="0.500" stop-color="#04a0c9"/><stop offset="0.583" stop-color="#2cc4bb"/><stop offset="0.667" stop-color="#4bd4ad"/><stop offset="0.750" stop-color="#64dba0"/><stop offset="0.833" stop-color="#98d182"/><stop offset="0.917" stop-color="#db5b2e"/><stop offset="1.000" stop-color="#db3018"/></linearGradient><linearGradient id="g46" gradientUnits="userSpaceOnUse" x1="150.9" y1="299.7" x2="348.2" y2="194.8"><stop offset="0.000" stop-color="#06a2c9"/><stop offset="0.083" stop-color="#009bcb"/><stop offset="0.167" stop-color="#6311db"/><stop offset="0.250" stop-color="#2d62d5"/><stop offset="0.333" stop-color="#0990cd"/><stop offset="0.417" stop-color="#029dca"/><stop offset="0.500" stop-color="#16b2c3"/><stop offset="0.583" stop-color="#3ccdb4"/><stop offset="0.667" stop-color="#58d9a7"/><stop offset="0.750" stop-color="#70db9a"/><stop offset="0.833" stop-color="#a4cb7a"/><stop offset="0.917" stop-color="#db4a26"/><stop offset="1.000" stop-color="#db3018"/></linearGradient><linearGradient id="g47" gradientUnits="userSpaceOnUse" x1="152.4" y1="300.9" x2="350.3" y2="195.9"><stop offset="0.000" stop-color="#0892cd"/><stop offset="0.083" stop-color="#1483d0"/><stop offset="0.167" stop-color="#6e00db"/><stop offset="0.250" stop-color="#532ada"/><stop offset="0.333" stop-color="#2b64d5"/><stop offset="0.417" stop-color="#1d78d2"/><stop offset="0.500" stop-color="#0793cd"/><stop offset="0.583" stop-color="#19b5c2"/><stop offset="0.667" stop-color="#34c9b7"/><stop offset="0.750" stop-color="#4dd5ac"/><stop offset="0.833" stop-color="#8cd68a"/><stop offset="0.917" stop-color="#db6534"/><stop offset="1.000" stop-color="#db3018"/></linearGradient><linearGradient id="g48" gradientUnits="userSpaceOnUse" x1="154.0" y1="302.0" x2="352.5" y2="197.0"><stop offset="0.000" stop-color="#0a90cd"/><stop offset="0.083" stop-color="#197ed1"/><stop offset="0.167" stop-color="#6e00db"/><stop offset="0.250" stop-color="#6410db"/><stop offset="0.333" stop-color="#3951d7"/><stop offset="0.417" stop-color="#2968d5"/><stop offset="0.500" stop-color="#1681d1"/><stop offset="0.583" stop-color="#0fabc6"/><stop offset="0.667" stop-color="#30c6b9"/><stop offset="0.750" stop-color="#51d7aa"/><stop offset="0.833" stop-color="#97d282"/><stop offset="0.917" stop-color="#db542b"/><stop offset="1.000" stop-color="#db3018"/></linearGradient><linearGradient id="g49" gradientUnits="userSpaceOnUse" x1="155.6" y1="303.2" x2="354.7" y2="198.1"><stop offset="0.000" stop-color="#16b2c3"/><stop offset="0.083" stop-color="#0aa6c8"/><stop offset="0.167" stop-color="#6410db"/><stop offset="0.250" stop-color="#483ad9"/><stop offset="0.333" stop-color="#0e8acf"/><stop offset="0.417" stop-color="#0eaac6"/><stop offset="0.500" stop-color="#26bfbd"/><stop offset="0.583" stop-color="#40cfb2"/><stop offset="0.667" stop-color="#54d8a8"/><stop offset="0.750" stop-color="#68db9e"/><stop offset="0.833" stop-color="#b1c272"/><stop offset="0.917" stop-color="#db3f20"/><stop offset="1.000" stop-color="#db3018"/></linearGradient><linearGradient id="g50" gradientUnits="userSpaceOnUse" x1="157.1" y1="304.4" x2="357.0" y2="199.2"><stop offset="0.000" stop-color="#049fc9"/><stop offset="0.083" stop-color="#019cca"/><stop offset="0.167" stop-color="#5e18db"/><stop offset="0.250" stop-color="#493ad9"/><stop offset="0.333" stop-color="#1a7cd2"/><stop offset="0.417" stop-color="#0891cd"/><stop offset="0.500" stop-color="#009bcb"/><stop offset="0.583" stop-color="#24bdbe"/><stop offset="0.667" stop-color="#45d2b0"/><stop offset="0.750" stop-color="#66db9f"/><stop offset="0.833" stop-color="#afc373"/><stop offset="0.917" stop-color="#db572c"/><stop offset="1.000" stop-color="#db351b"/></linearGradient><linearGradient id="g51" gradientUnits="userSpaceOnUse" x1="158.7" y1="305.5" x2="359.2" y2="200.3"><stop offset="0.000" stop-color="#029dca"/><stop offset="0.083" stop-color="#019cca"/><stop offset="0.167" stop-color="#5723db"/><stop offset="0.250" stop-color="#502fda"/><stop offset="0.333" stop-color="#1484d0"/><stop offset="0.417" stop-color="#0aa6c8"/><stop offset="0.500" stop-color="#1ab5c2"/><stop offset="0.583" stop-color="#32c8b8"/><stop offset="0.667" stop-color="#48d3af"/><stop offset="0.750" stop-color="#5fdaa3"/><stop offset="0.833" stop-color="#b5bf6f"/><stop offset="0.917" stop-color="#db542b"/><stop offset="1.000" stop-color="#db3018"/></linearGradient><linearGradient id="g52" gradientUnits="userSpaceOnUse" x1="160.3" y1="306.7" x2="361.5" y2="201.4"><stop offset="0.000" stop-color="#019cca"/><stop offset="0.083" stop-color="#009bcb"/><stop offset="0.167" stop-color="#522bda"/><stop offset="0.250" stop-color="#5a1fdb"/><stop offset="0.333" stop-color="#1a7cd1"/><stop offset="0.417" stop-color="#05a1c9"/><stop offset="0.500" stop-color="#15b0c4"/><stop offset="0.583" stop-color="#38cbb6"/><stop offset="0.667" stop-color="#5ad9a6"/><stop offset="0.750" stop-color="#7eda92"/><stop offset="0.833" stop-color="#d4a359"/><stop offset="0.917" stop-color="#db4121"/><stop offset="1.000" stop-color="#db3018"/></linearGradient><linearGradient id="g53" gradientUnits="userSpaceOnUse" x1="161.8" y1="307.8" x2="363.8" y2="202.6"><stop offset="0.000" stop-color="#09a5c8"/><stop offset="0.083" stop-color="#0fabc6"/><stop offset="0.167" stop-color="#3852d7"/><stop offset="0.250" stop-color="#473cd9"/><stop offset="0.333" stop-color="#1187cf"/><stop offset="0.417" stop-color="#019cca"/><stop offset="0.500" stop-color="#029dca"/><stop offset="0.583" stop-color="#1fbac0"/><stop offset="0.667" stop-color="#3cceb4"/><stop offset="0.750" stop-color="#5bd9a5"/><stop offset="0.833" stop-color="#c8af62"/><stop offset="0.917" stop-color="#db4b26"/><stop offset="1.000" stop-color="#db3018"/></linearGradient><linearGradient id="g54" gradientUnits="userSpaceOnUse" x1="163.4" y1="309.0" x2="366.0" y2="203.7"><stop offset="0.000" stop-color="#009bcb"/><stop offset="0.083" stop-color="#0ba7c7"/><stop offset="0.167" stop-color="#3458d7"/><stop offset="0.250" stop-color="#4938d9"/><stop offset="0.333" stop-color="#0a90cd"/><stop offset="0.417" stop-color="#0ca7c7"/><stop offset="0.500" stop-color="#12adc5"/><stop offset="0.583" stop-color="#33c8b8"/><stop offset="0.667" stop-color="#52d7a9"/><stop offset="0.750" stop-color="#76db96"/><stop offset="0.833" stop-color="#db924e"/><stop offset="0.917" stop-color="#db3a1d"/><stop offset="1.000" stop-color="#db3018"/></linearGradient><linearGradient id="g55" gradientUnits="userSpaceOnUse" x1="164.9" y1="310.1" x2="368.3" y2="204.8"><stop offset="0.000" stop-color="#06a1c9"/><stop offset="0.083" stop-color="#11adc5"/><stop offset="0.167" stop-color="#2d62d5"/><stop offset="0.250" stop-color="#4a37da"/><stop offset="0.333" stop-color="#0b8ece"/><stop offset="0.417" stop-color="#06a2c9"/><stop offset="0.500" stop-color="#0ba7c7"/><stop offset="0.583" stop-color="#2cc3bb"/><stop offset="0.667" stop-color="#4cd5ad"/><stop offset="0.750" stop-color="#71db99"/><stop offset="0.833" stop-color="#db8b4a"/><stop offset="0.917" stop-color="#db341a"/><stop offset="1.000" stop-color="#db3018"/></linearGradient><linearGradient id="g56" gradientUnits="userSpaceOnUse" x1="166.5" y1="311.3" x2="370.7" y2="206.0"><stop offset="0.000" stop-color="#0990cd"/><stop offset="0.083" stop-color="#019acb"/><stop offset="0.167" stop-color="#4243d9"/><stop offset="0.250" stop-color="#6809db"/><stop offset="0.333" stop-color="#1f75d3"/><stop offset="0.417" stop-color="#0496cc"/><stop offset="0.500" stop-color="#0fabc6"/><stop offset="0.583" stop-color="#2bc3bb"/><stop offset="0.667" stop-color="#47d3af"/><stop offset="0.750" stop-color="#6bdb9c"/><stop offset="0.833" stop-color="#db8949"/><stop offset="0.917" stop-color="#db341a"/><stop offset="1.000" stop-color="#db3018"/></linearGradient><linearGradient id="g57" gradientUnits="userSpaceOnUse" x1="168.1" y1="312.4" x2="373.0" y2="207.1"><stop offset="0.000" stop-color="#019cca"/><stop offset="0.083" stop-color="#12aec5"/><stop offset="0.167" stop-color="#276bd4"/><stop offset="0.250" stop-color="#483ad9"/><stop offset="0.333" stop-color="#0b8ece"/><stop offset="0.417" stop-color="#049fc9"/><stop offset="0.500" stop-color="#0fabc6"/><stop offset="0.583" stop-color="#32c7b9"/><stop offset="0.667" stop-color="#53d7a9"/><stop offset="0.750" stop-color="#81d990"/><stop offset="0.833" stop-color="#db7e42"/><stop offset="0.917" stop-color="#db4121"/><stop offset="1.000" stop-color="#db391d"/></linearGradient><linearGradient id="g58" gradientUnits="userSpaceOnUse" x1="169.6" y1="313.6" x2="375.3" y2="208.3"><stop offset="0.000" stop-color="#019dca"/><stop offset="0.083" stop-color="#14b0c4"/><stop offset="0.167" stop-color="#246fd4"/><stop offset="0.250" stop-color="#463ed9"/><stop offset="0.333" stop-color="#0c8dce"/><stop offset="0.417" stop-color="#039fca"/><stop offset="0.500" stop-color="#14b0c4"/><stop offset="0.583" stop-color="#35c9b7"/><stop offset="0.667" stop-color="#54d8a9"/><stop offset="0.750" stop-color="#85d88e"/><stop offset="0.833" stop-color="#db783f"/><stop offset="0.917" stop-color="#db3b1e"/><stop offset="1.000" stop-color="#db3018"/></linearGradient><linearGradient id="g59" gradientUnits="userSpaceOnUse" x1="171.2" y1="314.8" x2="377.7" y2="209.5"><stop offset="0.000" stop-color="#0eaac6"/><stop offset="0.083" stop-color="#25bebe"/><stop offset="0.167" stop-color="#0f89cf"/><stop offset="0.250" stop-color="#2e60d6"/><stop offset="0.333" stop-color="#019acb"/><stop offset="0.417" stop-color="#06a1c9"/><stop offset="0.500" stop-color="#13afc4"/><stop offset="0.583" stop-color="#37cab6"/><stop offset="0.667" stop-color="#59d9a6"/><stop offset="0.750" stop-color="#8fd587"/><stop offset="0.833" stop-color="#db6c38"/><stop offset="0.917" stop-color="#db3018"/><stop offset="1.000" stop-color="#db3018"/></linearGradient><linearGradient id="g60" gradientUnits="userSpaceOnUse" x1="172.8" y1="315.9" x2="380.0" y2="210.6"><stop offset="0.000" stop-color="#07a2c9"/><stop offset="0.083" stop-color="#1cb6c1"/><stop offset="0.167" stop-color="#1a7cd1"/><stop offset="0.250" stop-color="#3a50d8"/><stop offset="0.333" stop-color="#1384d0"/><stop offset="0.417" stop-color="#0c8dce"/><stop offset="0.500" stop-color="#09a5c8"/><stop offset="0.583" stop-color="#2ec5ba"/><stop offset="0.667" stop-color="#53d7a9"/><stop offset="0.750" stop-color="#92d486"/><stop offset="0.833" stop-color="#db723b"/><stop offset="0.917" stop-color="#db4020"/><stop offset="1.000" stop-color="#db381c"/></linearGradient><linearGradient id="g61" gradientUnits="userSpaceOnUse" x1="174.3" y1="317.1" x2="382.4" y2="211.8"><stop offset="0.000" stop-color="#0fabc6"/><stop offset="0.083" stop-color="#2ac2bc"/><stop offset="0.167" stop-color="#0694cc"/><stop offset="0.250" stop-color="#2173d3"/><stop offset="0.333" stop-color="#0398cb"/><stop offset="0.417" stop-color="#029dca"/><stop offset="0.500" stop-color="#19b4c2"/><stop offset="0.583" stop-color="#3bcdb5"/><stop offset="0.667" stop-color="#5edaa4"/><stop offset="0.750" stop-color="#9cd080"/><stop offset="0.833" stop-color="#db6c38"/><stop offset="0.917" stop-color="#db4020"/><stop offset="1.000" stop-color="#db361b"/></linearGradient><linearGradient id="g62" gradientUnits="userSpaceOnUse" x1="175.9" y1="318.2" x2="384.7" y2="213.0"><stop offset="0.000" stop-color="#1bb6c2"/><stop offset="0.083" stop-color="#32c8b8"/><stop offset="0.167" stop-color="#019cca"/><stop offset="0.250" stop-color="#1e77d2"/><stop offset="0.333" stop-color="#0c8ece"/><stop offset="0.417" stop-color="#0e8bcf"/><stop offset="0.500" stop-color="#08a3c8"/><stop offset="0.583" stop-color="#25bfbe"/><stop offset="0.667" stop-color="#46d2b0"/><stop offset="0.750" stop-color="#83d98f"/><stop offset="0.833" stop-color="#db7c41"/><stop offset="0.917" stop-color="#db3d1f"/><stop offset="1.000" stop-color="#db3018"/></linearGradient><linearGradient id="g63" gradientUnits="userSpaceOnUse" x1="177.4" y1="319.4" x2="387.1" y2="214.2"><stop offset="0.000" stop-color="#0398cb"/><stop offset="0.083" stop-color="#1cb7c1"/><stop offset="0.167" stop-color="#0d8bce"/><stop offset="0.250" stop-color="#276bd4"/><stop offset="0.333" stop-color="#1384d0"/><stop offset="0.417" stop-color="#1088cf"/><stop offset="0.500" stop-color="#0fabc6"/><stop offset="0.583" stop-color="#33c8b8"/><stop offset="0.667" stop-color="#5cdaa5"/><stop offset="0.750" stop-color="#a2cc7b"/><stop offset="0.833" stop-color="#db6836"/><stop offset="0.917" stop-color="#db3d1f"/><stop offset="1.000" stop-color="#db3018"/></linearGradient><linearGradient id="g64" gradientUnits="userSpaceOnUse" x1="179.0" y1="320.5" x2="389.5" y2="215.4"><stop offset="0.000" stop-color="#16b2c3"/><stop offset="0.083" stop-color="#2ec5ba"/><stop offset="0.167" stop-color="#0298cb"/><stop offset="0.250" stop-color="#256dd4"/><stop offset="0.333" stop-color="#1187cf"/><stop offset="0.417" stop-color="#0a90cd"/><stop offset="0.500" stop-color="#1db8c1"/><stop offset="0.583" stop-color="#37cbb6"/><stop offset="0.667" stop-color="#57d8a7"/><stop offset="0.750" stop-color="#95d384"/><stop offset="0.833" stop-color="#db7c41"/><stop offset="0.917" stop-color="#db5129"/><stop offset="1.000" stop-color="#db4121"/></linearGradient><linearGradient id="g65" gradientUnits="userSpaceOnUse" x1="180.6" y1="321.7" x2="391.8" y2="216.5"><stop offset="0.000" stop-color="#019acb"/><stop offset="0.083" stop-color="#15b1c4"/><stop offset="0.167" stop-color="#1c79d2"/><stop offset="0.250" stop-color="#4243d9"/><stop offset="0.333" stop-color="#3656d7"/><stop offset="0.417" stop-color="#325bd6"/><stop offset="0.500" stop-color="#0b8fce"/><stop offset="0.583" stop-color="#19b4c2"/><stop offset="0.667" stop-color="#47d3af"/><stop offset="0.750" stop-color="#93d385"/><stop offset="0.833" stop-color="#db7f43"/><stop offset="0.917" stop-color="#db542b"/><stop offset="1.000" stop-color="#db4a26"/></linearGradient><linearGradient id="g66" gradientUnits="userSpaceOnUse" x1="182.1" y1="322.8" x2="394.2" y2="217.7"><stop offset="0.000" stop-color="#0793cd"/><stop offset="0.083" stop-color="#11adc5"/><stop offset="0.167" stop-color="#1e76d2"/><stop offset="0.250" stop-color="#4441d9"/><stop offset="0.333" stop-color="#3753d7"/><stop offset="0.417" stop-color="#305ed6"/><stop offset="0.500" stop-color="#0595cc"/><stop offset="0.583" stop-color="#1db8c1"/><stop offset="0.667" stop-color="#4dd5ac"/><stop offset="0.750" stop-color="#9ad080"/><stop offset="0.833" stop-color="#db743c"/><stop offset="0.917" stop-color="#db4221"/><stop offset="1.000" stop-color="#db361b"/></linearGradient><linearGradient id="g67" gradientUnits="userSpaceOnUse" x1="183.7" y1="324.0" x2="396.6" y2="218.9"><stop offset="0.000" stop-color="#04a0c9"/><stop offset="0.083" stop-color="#20bac0"/><stop offset="0.167" stop-color="#0d8cce"/><stop offset="0.250" stop-color="#315cd6"/><stop offset="0.333" stop-color="#246ed4"/><stop offset="0.417" stop-color="#1b7bd2"/><stop offset="0.500" stop-color="#0fabc6"/><stop offset="0.583" stop-color="#2ac2bc"/><stop offset="0.667" stop-color="#54d8a9"/><stop offset="0.750" stop-color="#99d181"/><stop offset="0.833" stop-color="#db753d"/><stop offset="0.917" stop-color="#db3f20"/><stop offset="1.000" stop-color="#db3018"/></linearGradient><linearGradient id="g68" gradientUnits="userSpaceOnUse" x1="185.3" y1="325.2" x2="399.0" y2="220.1"><stop offset="0.000" stop-color="#10acc5"/><stop offset="0.083" stop-color="#2dc5ba"/><stop offset="0.167" stop-color="#019cca"/><stop offset="0.250" stop-color="#256cd4"/><stop offset="0.333" stop-color="#1384d0"/><stop offset="0.417" stop-color="#0596cc"/><stop offset="0.500" stop-color="#25bebe"/><stop offset="0.583" stop-color="#43d1b1"/><stop offset="0.667" stop-color="#70db9a"/><stop offset="0.750" stop-color="#b5bf6f"/><stop offset="0.833" stop-color="#db5c2f"/><stop offset="0.917" stop-color="#db3119"/><stop offset="1.000" stop-color="#db3018"/></linearGradient><linearGradient id="g69" gradientUnits="userSpaceOnUse" x1="186.8" y1="326.3" x2="401.4" y2="221.3"><stop offset="0.000" stop-color="#0fabc6"/><stop offset="0.083" stop-color="#24bebe"/><stop offset="0.167" stop-color="#1286d0"/><stop offset="0.250" stop-color="#3f47d8"/><stop offset="0.333" stop-color="#2b65d5"/><stop offset="0.417" stop-color="#177fd1"/><stop offset="0.500" stop-color="#13afc4"/><stop offset="0.583" stop-color="#2ec5ba"/><stop offset="0.667" stop-color="#5bd9a5"/><stop offset="0.750" stop-color="#9fce7e"/><stop offset="0.833" stop-color="#db753d"/><stop offset="0.917" stop-color="#db4121"/><stop offset="1.000" stop-color="#db3018"/></linearGradient><linearGradient id="g70" gradientUnits="userSpaceOnUse" x1="188.4" y1="327.5" x2="403.7" y2="222.4"><stop offset="0.000" stop-color="#14afc4"/><stop offset="0.083" stop-color="#1db8c1"/><stop offset="0.167" stop-color="#256dd4"/><stop offset="0.250" stop-color="#5c1cdb"/><stop offset="0.333" stop-color="#3d4cd8"/><stop offset="0.417" stop-color="#1d77d2"/><stop offset="0.500" stop-color="#12aec5"/><stop offset="0.583" stop-color="#2ec5ba"/><stop offset="0.667" stop-color="#5cd9a5"/><stop offset="0.750" stop-color="#9fce7d"/><stop offset="0.833" stop-color="#db723b"/><stop offset="0.917" stop-color="#db381c"/><stop offset="1.000" stop-color="#db3018"/></linearGradient><linearGradient id="g71" gradientUnits="userSpaceOnUse" x1="190.0" y1="328.6" x2="406.1" y2="223.6"><stop offset="0.000" stop-color="#0ca8c7"/><stop offset="0.083" stop-color="#22bcbf"/><stop offset="0.167" stop-color="#1483d0"/><stop offset="0.250" stop-color="#3b4ed8"/><stop offset="0.333" stop-color="#197dd1"/><stop offset="0.417" stop-color="#09a4c8"/><stop offset="0.500" stop-color="#34c9b8"/><stop offset="0.583" stop-color="#4ad4ad"/><stop offset="0.667" stop-color="#71db99"/><stop offset="0.750" stop-color="#acc675"/><stop offset="0.833" stop-color="#db743c"/><stop offset="0.917" stop-color="#db4925"/><stop offset="1.000" stop-color="#db391d"/></linearGradient><linearGradient id="g72" gradientUnits="userSpaceOnUse" x1="191.5" y1="329.8" x2="408.5" y2="224.8"><stop offset="0.000" stop-color="#22bcbf"/><stop offset="0.083" stop-color="#23bdbe"/><stop offset="0.167" stop-color="#276ad4"/><stop offset="0.250" stop-color="#5b1ddb"/><stop offset="0.333" stop-color="#3950d7"/><stop offset="0.417" stop-color="#177fd1"/><stop offset="0.500" stop-color="#0fabc6"/><stop offset="0.583" stop-color="#30c6b9"/><stop offset="0.667" stop-color="#5fdaa3"/><stop offset="0.750" stop-color="#a2cc7b"/><stop offset="0.833" stop-color="#db773e"/><stop offset="0.917" stop-color="#db3c1e"/><stop offset="1.000" stop-color="#db3018"/></linearGradient><linearGradient id="g73" gradientUnits="userSpaceOnUse" x1="193.1" y1="330.9" x2="410.8" y2="226.0"><stop offset="0.000" stop-color="#0f8acf"/><stop offset="0.083" stop-color="#0695cc"/><stop offset="0.167" stop-color="#463ed9"/><stop offset="0.250" stop-color="#6907db"/><stop offset="0.333" stop-color="#4145d8"/><stop offset="0.417" stop-color="#197ed1"/><stop offset="0.500" stop-color="#0fabc6"/><stop offset="0.583" stop-color="#27c0bd"/><stop offset="0.667" stop-color="#4dd5ac"/><stop offset="0.750" stop-color="#84d88e"/><stop offset="0.833" stop-color="#db9751"/><stop offset="0.917" stop-color="#db542b"/><stop offset="1.000" stop-color="#db3018"/></linearGradient><linearGradient id="g74" gradientUnits="userSpaceOnUse" x1="194.6" y1="332.1" x2="413.2" y2="227.2"><stop offset="0.000" stop-color="#1484d0"/><stop offset="0.083" stop-color="#1385d0"/><stop offset="0.167" stop-color="#5920db"/><stop offset="0.250" stop-color="#6e00db"/><stop offset="0.333" stop-color="#4f2fda"/><stop offset="0.417" stop-color="#246ed4"/><stop offset="0.500" stop-color="#029dca"/><stop offset="0.583" stop-color="#1cb7c1"/><stop offset="0.667" stop-color="#41d0b2"/><stop offset="0.750" stop-color="#77db96"/><stop offset="0.833" stop-color="#d1a65c"/><stop offset="0.917" stop-color="#db6132"/><stop offset="1.000" stop-color="#db351b"/></linearGradient><linearGradient id="g75" gradientUnits="userSpaceOnUse" x1="196.2" y1="333.2" x2="415.5" y2="228.3"><stop offset="0.000" stop-color="#0398cb"/><stop offset="0.083" stop-color="#0c8dce"/><stop offset="0.167" stop-color="#5821db"/><stop offset="0.250" stop-color="#6e00db"/><stop offset="0.333" stop-color="#4e32da"/><stop offset="0.417" stop-color="#246ed4"/><stop offset="0.500" stop-color="#0596cc"/><stop offset="0.583" stop-color="#1fb9c0"/><stop offset="0.667" stop-color="#4bd5ad"/><stop offset="0.750" stop-color="#87d88c"/><stop offset="0.833" stop-color="#d6a158"/><stop offset="0.917" stop-color="#db5d30"/><stop offset="1.000" stop-color="#db341a"/></linearGradient><linearGradient id="g76" gradientUnits="userSpaceOnUse" x1="197.8" y1="334.4" x2="417.9" y2="229.5"><stop offset="0.000" stop-color="#0f8acf"/><stop offset="0.083" stop-color="#2172d3"/><stop offset="0.167" stop-color="#6e00db"/><stop offset="0.250" stop-color="#6e00db"/><stop offset="0.333" stop-color="#5920db"/><stop offset="0.417" stop-color="#276ad4"/><stop offset="0.500" stop-color="#0398cb"/><stop offset="0.583" stop-color="#20bac0"/><stop offset="0.667" stop-color="#4cd5ad"/><stop offset="0.750" stop-color="#85d88e"/><stop offset="0.833" stop-color="#d2a55a"/><stop offset="0.917" stop-color="#db5a2e"/><stop offset="1.000" stop-color="#db3018"/></linearGradient><linearGradient id="g77" gradientUnits="userSpaceOnUse" x1="199.3" y1="335.6" x2="420.2" y2="230.7"><stop offset="0.000" stop-color="#1385d0"/><stop offset="0.083" stop-color="#266cd4"/><stop offset="0.167" stop-color="#6e00db"/><stop offset="0.250" stop-color="#6e00db"/><stop offset="0.333" stop-color="#4243d9"/><stop offset="0.417" stop-color="#0694cc"/><stop offset="0.500" stop-color="#22bcbf"/><stop offset="0.583" stop-color="#3bcdb5"/><stop offset="0.667" stop-color="#5ddaa4"/><stop offset="0.750" stop-color="#87d88d"/><stop offset="0.833" stop-color="#d2a65b"/><stop offset="0.917" stop-color="#db532a"/><stop offset="1.000" stop-color="#db3018"/></linearGradient><linearGradient id="g78" gradientUnits="userSpaceOnUse" x1="200.9" y1="336.7" x2="422.5" y2="231.8"><stop offset="0.000" stop-color="#276ad4"/><stop offset="0.083" stop-color="#3852d7"/><stop offset="0.167" stop-color="#6e00db"/><stop offset="0.250" stop-color="#6b04db"/><stop offset="0.333" stop-color="#4046d8"/><stop offset="0.417" stop-color="#0694cc"/><stop offset="0.500" stop-color="#1bb6c2"/><stop offset="0.583" stop-color="#35c9b7"/><stop offset="0.667" stop-color="#5bd9a5"/><stop offset="0.750" stop-color="#83d98f"/><stop offset="0.833" stop-color="#c5b264"/><stop offset="0.917" stop-color="#db6735"/><stop offset="1.000" stop-color="#db3018"/></linearGradient><linearGradient id="g79" gradientUnits="userSpaceOnUse" x1="202.5" y1="337.9" x2="424.9" y2="233.0"><stop offset="0.000" stop-color="#1a7bd2"/><stop offset="0.083" stop-color="#3359d7"/><stop offset="0.167" stop-color="#6015db"/><stop offset="0.250" stop-color="#5e19db"/><stop offset="0.333" stop-color="#3852d7"/><stop offset="0.417" stop-color="#039eca"/><stop offset="0.500" stop-color="#20bbc0"/><stop offset="0.583" stop-color="#34c9b7"/><stop offset="0.667" stop-color="#56d8a8"/><stop offset="0.750" stop-color="#76db96"/><stop offset="0.833" stop-color="#b7bd6d"/><stop offset="0.917" stop-color="#db713b"/><stop offset="1.000" stop-color="#db3018"/></linearGradient><linearGradient id="g80" gradientUnits="userSpaceOnUse" x1="204.0" y1="339.0" x2="427.2" y2="234.1"><stop offset="0.000" stop-color="#2869d5"/><stop offset="0.083" stop-color="#4c35da"/><stop offset="0.167" stop-color="#6e00db"/><stop offset="0.250" stop-color="#6e00db"/><stop offset="0.333" stop-color="#4e31da"/><stop offset="0.417" stop-color="#0a8fce"/><stop offset="0.500" stop-color="#19b4c2"/><stop offset="0.583" stop-color="#2bc3bb"/><stop offset="0.667" stop-color="#4ed6ac"/><stop offset="0.750" stop-color="#6bdb9c"/><stop offset="0.833" stop-color="#a6ca79"/><stop offset="0.917" stop-color="#db8a49"/><stop offset="1.000" stop-color="#db3c1f"/></linearGradient><linearGradient id="g81" gradientUnits="userSpaceOnUse" x1="205.6" y1="340.2" x2="429.4" y2="235.2"><stop offset="0.000" stop-color="#4342d9"/><stop offset="0.083" stop-color="#670bdb"/><stop offset="0.167" stop-color="#6e00db"/><stop offset="0.250" stop-color="#6e00db"/><stop offset="0.333" stop-color="#5a1edb"/><stop offset="0.417" stop-color="#1484d0"/><stop offset="0.500" stop-color="#0eaac6"/><stop offset="0.583" stop-color="#20bac0"/><stop offset="0.667" stop-color="#45d2b0"/><stop offset="0.750" stop-color="#61daa2"/><stop offset="0.833" stop-color="#9dcf7f"/><stop offset="0.917" stop-color="#db8d4b"/><stop offset="1.000" stop-color="#db3018"/></linearGradient><linearGradient id="g82" gradientUnits="userSpaceOnUse" x1="207.1" y1="341.3" x2="431.7" y2="236.4"><stop offset="0.000" stop-color="#2074d3"/><stop offset="0.083" stop-color="#4939d9"/><stop offset="0.167" stop-color="#6015db"/><stop offset="0.250" stop-color="#660cdb"/><stop offset="0.333" stop-color="#4243d9"/><stop offset="0.417" stop-color="#029dca"/><stop offset="0.500" stop-color="#1cb7c1"/><stop offset="0.583" stop-color="#33c8b8"/><stop offset="0.667" stop-color="#5edaa4"/><stop offset="0.750" stop-color="#7ada94"/><stop offset="0.833" stop-color="#b0c372"/><stop offset="0.917" stop-color="#db793f"/><stop offset="1.000" stop-color="#db3018"/></linearGradient><linearGradient id="g83" gradientUnits="userSpaceOnUse" x1="208.7" y1="342.5" x2="434.0" y2="237.5"><stop offset="0.000" stop-color="#3852d7"/><stop offset="0.083" stop-color="#5920db"/><stop offset="0.167" stop-color="#6114db"/><stop offset="0.250" stop-color="#5e19db"/><stop offset="0.333" stop-color="#3754d7"/><stop offset="0.417" stop-color="#12aec5"/><stop offset="0.500" stop-color="#2fc5ba"/><stop offset="0.583" stop-color="#37cbb6"/><stop offset="0.667" stop-color="#56d8a8"/><stop offset="0.750" stop-color="#65dba0"/><stop offset="0.833" stop-color="#94d384"/><stop offset="0.917" stop-color="#d99d55"/><stop offset="1.000" stop-color="#db3018"/></linearGradient><linearGradient id="g84" gradientUnits="userSpaceOnUse" x1="210.3" y1="343.6" x2="436.2" y2="238.6"><stop offset="0.000" stop-color="#4f30da"/><stop offset="0.083" stop-color="#6c03db"/><stop offset="0.167" stop-color="#6a05db"/><stop offset="0.250" stop-color="#6310db"/><stop offset="0.333" stop-color="#4046d8"/><stop offset="0.417" stop-color="#05a1c9"/><stop offset="0.500" stop-color="#1eb8c1"/><stop offset="0.583" stop-color="#27bfbd"/><stop offset="0.667" stop-color="#48d3af"/><stop offset="0.750" stop-color="#59d9a6"/><stop offset="0.833" stop-color="#8bd68a"/><stop offset="0.917" stop-color="#d7a057"/><stop offset="1.000" stop-color="#db3018"/></linearGradient><linearGradient id="g85" gradientUnits="userSpaceOnUse" x1="211.8" y1="344.8" x2="438.5" y2="239.7"><stop offset="0.000" stop-color="#4243d9"/><stop offset="0.083" stop-color="#650edb"/><stop offset="0.167" stop-color="#670bdb"/><stop offset="0.250" stop-color="#670bdb"/><stop offset="0.333" stop-color="#4243d9"/><stop offset="0.417" stop-color="#04a0c9"/><stop offset="0.500" stop-color="#1cb6c1"/><stop offset="0.583" stop-color="#28c0bd"/><stop offset="0.667" stop-color="#4dd5ac"/><stop offset="0.750" stop-color="#62dba1"/><stop offset="0.833" stop-color="#88d78c"/><stop offset="0.917" stop-color="#c9ae61"/><stop offset="1.000" stop-color="#db341a"/></linearGradient><linearGradient id="g86" gradientUnits="userSpaceOnUse" x1="213.4" y1="346.0" x2="440.7" y2="240.8"><stop offset="0.000" stop-color="#5723db"/><stop offset="0.083" stop-color="#6e00db"/><stop offset="0.167" stop-color="#6e00db"/><stop offset="0.250" stop-color="#6e00db"/><stop offset="0.333" stop-color="#5329da"/><stop offset="0.417" stop-color="#0990cd"/><stop offset="0.500" stop-color="#10acc5"/><stop offset="0.583" stop-color="#15b1c4"/><stop offset="0.667" stop-color="#34c9b8"/><stop offset="0.750" stop-color="#41d0b2"/><stop offset="0.833" stop-color="#70db9a"/><stop offset="0.917" stop-color="#bcb96a"/><stop offset="1.000" stop-color="#db3119"/></linearGradient><linearGradient id="g87" gradientUnits="userSpaceOnUse" x1="215.0" y1="347.1" x2="442.9" y2="241.9"><stop offset="0.000" stop-color="#6212db"/><stop offset="0.083" stop-color="#6e00db"/><stop offset="0.167" stop-color="#6e00db"/><stop offset="0.250" stop-color="#6c02db"/><stop offset="0.333" stop-color="#4c35da"/><stop offset="0.417" stop-color="#0c8dce"/><stop offset="0.500" stop-color="#039fca"/><stop offset="0.583" stop-color="#0ca8c7"/><stop offset="0.667" stop-color="#2ec5ba"/><stop offset="0.750" stop-color="#40d0b2"/><stop offset="0.833" stop-color="#6adb9d"/><stop offset="0.917" stop-color="#b7be6e"/><stop offset="1.000" stop-color="#db3b1e"/></linearGradient><linearGradient id="g88" gradientUnits="userSpaceOnUse" x1="216.5" y1="348.3" x2="445.0" y2="243.0"><stop offset="0.000" stop-color="#5f18db"/><stop offset="0.083" stop-color="#6e00db"/><stop offset="0.167" stop-color="#6e00db"/><stop offset="0.250" stop-color="#6e00db"/><stop offset="0.333" stop-color="#502fda"/><stop offset="0.417" stop-color="#1088cf"/><stop offset="0.500" stop-color="#0398cb"/><stop offset="0.583" stop-color="#0aa6c8"/><stop offset="0.667" stop-color="#2ec5ba"/><stop offset="0.750" stop-color="#41d0b2"/><stop offset="0.833" stop-color="#6adb9d"/><stop offset="0.917" stop-color="#b8bd6d"/><stop offset="1.000" stop-color="#db3219"/></linearGradient><linearGradient id="g89" gradientUnits="userSpaceOnUse" x1="218.1" y1="349.4" x2="447.2" y2="244.1"><stop offset="0.000" stop-color="#4939d9"/><stop offset="0.083" stop-color="#660bdb"/><stop offset="0.167" stop-color="#6e00db"/><stop offset="0.250" stop-color="#6e00db"/><stop offset="0.333" stop-color="#483ad9"/><stop offset="0.417" stop-color="#0497cc"/><stop offset="0.500" stop-color="#0fabc6"/><stop offset="0.583" stop-color="#19b5c2"/><stop offset="0.667" stop-color="#38ccb6"/><stop offset="0.750" stop-color="#47d3af"/><stop offset="0.833" stop-color="#65dba0"/><stop offset="0.917" stop-color="#adc574"/><stop offset="1.000" stop-color="#db4c27"/></linearGradient><linearGradient id="g90" gradientUnits="userSpaceOnUse" x1="219.6" y1="350.6" x2="449.3" y2="245.1"><stop offset="0.000" stop-color="#5c1cdb"/><stop offset="0.083" stop-color="#6e00db"/><stop offset="0.167" stop-color="#6e00db"/><stop offset="0.250" stop-color="#6e00db"/><stop offset="0.333" stop-color="#5625db"/><stop offset="0.417" stop-color="#2073d3"/><stop offset="0.500" stop-color="#1d78d2"/><stop offset="0.583" stop-color="#0793cd"/><stop offset="0.667" stop-color="#20bbc0"/><stop offset="0.750" stop-color="#38cbb6"/><stop offset="0.833" stop-color="#58d9a6"/><stop offset="0.917" stop-color="#a4cb7a"/><stop offset="1.000" stop-color="#db5129"/></linearGradient><linearGradient id="g91" gradientUnits="userSpaceOnUse" x1="221.2" y1="351.7" x2="451.4" y2="246.2"><stop offset="0.000" stop-color="#6e00db"/><stop offset="0.083" stop-color="#6e00db"/><stop offset="0.167" stop-color="#6e00db"/><stop offset="0.250" stop-color="#6e00db"/><stop offset="0.333" stop-color="#4342d9"/><stop offset="0.417" stop-color="#0b8fce"/><stop offset="0.500" stop-color="#0595cc"/><stop offset="0.583" stop-color="#13aec5"/><stop offset="0.667" stop-color="#38cbb6"/><stop offset="0.750" stop-color="#4dd5ac"/><stop offset="0.833" stop-color="#67db9f"/><stop offset="0.917" stop-color="#aec474"/><stop offset="1.000" stop-color="#db4322"/></linearGradient><linearGradient id="g92" gradientUnits="userSpaceOnUse" x1="222.8" y1="352.9" x2="453.5" y2="247.2"><stop offset="0.000" stop-color="#5723db"/><stop offset="0.083" stop-color="#6907db"/><stop offset="0.167" stop-color="#6c03db"/><stop offset="0.250" stop-color="#6d00db"/><stop offset="0.333" stop-color="#4145d9"/><stop offset="0.417" stop-color="#0e8bcf"/><stop offset="0.500" stop-color="#0e8bcf"/><stop offset="0.583" stop-color="#0da9c6"/><stop offset="0.667" stop-color="#34c9b8"/><stop offset="0.750" stop-color="#49d4ae"/><stop offset="0.833" stop-color="#60daa3"/><stop offset="0.917" stop-color="#a5ca79"/><stop offset="1.000" stop-color="#db522a"/></linearGradient><linearGradient id="g93" gradientUnits="userSpaceOnUse" x1="224.3" y1="354.0" x2="455.6" y2="248.3"><stop offset="0.000" stop-color="#6a06db"/><stop offset="0.083" stop-color="#6e00db"/><stop offset="0.167" stop-color="#6e00db"/><stop offset="0.250" stop-color="#6e00db"/><stop offset="0.333" stop-color="#5527da"/><stop offset="0.417" stop-color="#1f75d3"/><stop offset="0.500" stop-color="#1d78d2"/><stop offset="0.583" stop-color="#08a4c8"/><stop offset="0.667" stop-color="#36cab7"/><stop offset="0.750" stop-color="#53d7a9"/><stop offset="0.833" stop-color="#68db9e"/><stop offset="0.917" stop-color="#adc574"/><stop offset="1.000" stop-color="#db4925"/></linearGradient><linearGradient id="g94" gradientUnits="userSpaceOnUse" x1="225.9" y1="355.2" x2="457.6" y2="249.3"><stop offset="0.000" stop-color="#650edb"/><stop offset="0.083" stop-color="#6e00db"/><stop offset="0.167" stop-color="#6e00db"/><stop offset="0.250" stop-color="#6e00db"/><stop offset="0.333" stop-color="#6212db"/><stop offset="0.417" stop-color="#3754d7"/><stop offset="0.500" stop-color="#3e4ad8"/><stop offset="0.583" stop-color="#187ed1"/><stop offset="0.667" stop-color="#16b1c4"/><stop offset="0.750" stop-color="#32c8b8"/><stop offset="0.833" stop-color="#4ed6ac"/><stop offset="0.917" stop-color="#9ad081"/><stop offset="1.000" stop-color="#db6333"/></linearGradient><linearGradient id="g95" gradientUnits="userSpaceOnUse" x1="227.5" y1="356.4" x2="459.6" y2="250.3"><stop offset="0.000" stop-color="#6e00db"/><stop offset="0.083" stop-color="#6e00db"/><stop offset="0.167" stop-color="#6e00db"/><stop offset="0.250" stop-color="#6e00db"/><stop offset="0.333" stop-color="#6212db"/><stop offset="0.417" stop-color="#3458d7"/><stop offset="0.500" stop-color="#3950d7"/><stop offset="0.583" stop-color="#1a7cd1"/><stop offset="0.667" stop-color="#0da8c7"/><stop offset="0.750" stop-color="#21bbbf"/><stop offset="0.833" stop-color="#48d3af"/><stop offset="0.917" stop-color="#a0cd7d"/><stop offset="1.000" stop-color="#db5029"/></linearGradient><linearGradient id="g96" gradientUnits="userSpaceOnUse" x1="229.0" y1="357.5" x2="461.6" y2="251.3"><stop offset="0.000" stop-color="#6b04db"/><stop offset="0.083" stop-color="#6e00db"/><stop offset="0.167" stop-color="#6e00db"/><stop offset="0.250" stop-color="#6e00db"/><stop offset="0.333" stop-color="#6114db"/><stop offset="0.417" stop-color="#305dd6"/><stop offset="0.500" stop-color="#3754d7"/><stop offset="0.583" stop-color="#1484d0"/><stop offset="0.667" stop-color="#15b0c4"/><stop offset="0.750" stop-color="#2ac2bc"/><stop offset="0.833" stop-color="#4ad4ae"/><stop offset="0.917" stop-color="#9ece7e"/><stop offset="1.000" stop-color="#db6232"/></linearGradient><linearGradient id="g97" gradientUnits="userSpaceOnUse" x1="230.6" y1="358.7" x2="463.6" y2="252.2"><stop offset="0.000" stop-color="#660ddb"/><stop offset="0.083" stop-color="#6e00db"/><stop offset="0.167" stop-color="#6e00db"/><stop offset="0.250" stop-color="#6e00db"/><stop offset="0.333" stop-color="#6808db"/><stop offset="0.417" stop-color="#3b4ed8"/><stop offset="0.500" stop-color="#463ed9"/><stop offset="0.583" stop-color="#1681d1"/><stop offset="0.667" stop-color="#1fbac0"/><stop offset="0.750" stop-color="#41d0b2"/><stop offset="0.833" stop-color="#5ad9a5"/><stop offset="0.917" stop-color="#abc776"/><stop offset="1.000" stop-color="#db6434"/></linearGradient><linearGradient id="g98" gradientUnits="userSpaceOnUse" x1="232.2" y1="359.8" x2="465.5" y2="253.2"><stop offset="0.000" stop-color="#6e00db"/><stop offset="0.083" stop-color="#6e00db"/><stop offset="0.167" stop-color="#6e00db"/><stop offset="0.250" stop-color="#6e00db"/><stop offset="0.333" stop-color="#5a1fdb"/><stop offset="0.417" stop-color="#266bd4"/><stop offset="0.500" stop-color="#305ed6"/><stop offset="0.583" stop-color="#019acb"/><stop offset="0.667" stop-color="#34c9b8"/><stop offset="0.750" stop-color="#54d8a9"/><stop offset="0.833" stop-color="#6bdb9d"/><stop offset="0.917" stop-color="#bcb96a"/><stop offset="1.000" stop-color="#db592d"/></linearGradient><linearGradient id="g99" gradientUnits="userSpaceOnUse" x1="233.7" y1="361.0" x2="467.4" y2="254.1"><stop offset="0.000" stop-color="#6e00db"/><stop offset="0.083" stop-color="#6e00db"/><stop offset="0.167" stop-color="#6e00db"/><stop offset="0.250" stop-color="#6e00db"/><stop offset="0.333" stop-color="#6113db"/><stop offset="0.417" stop-color="#266cd4"/><stop offset="0.500" stop-color="#2c64d5"/><stop offset="0.583" stop-color="#0595cc"/><stop offset="0.667" stop-color="#28c1bc"/><stop offset="0.750" stop-color="#41d0b2"/><stop offset="0.833" stop-color="#5bd9a5"/><stop offset="0.917" stop-color="#b1c271"/><stop offset="1.000" stop-color="#db713b"/></linearGradient><linearGradient id="g100" gradientUnits="userSpaceOnUse" x1="235.3" y1="362.1" x2="469.3" y2="255.1"><stop offset="0.000" stop-color="#6311db"/><stop offset="0.083" stop-color="#6e00db"/><stop offset="0.167" stop-color="#6e00db"/><stop offset="0.250" stop-color="#6e00db"/><stop offset="0.333" stop-color="#4244d9"/><stop offset="0.417" stop-color="#019acb"/><stop offset="0.500" stop-color="#0694cc"/><stop offset="0.583" stop-color="#1ab5c2"/><stop offset="0.667" stop-color="#3fcfb3"/><stop offset="0.750" stop-color="#4fd6ab"/><stop offset="0.833" stop-color="#6ddb9b"/><stop offset="0.917" stop-color="#cbad60"/><stop offset="1.000" stop-color="#db4f28"/></linearGradient><linearGradient id="g101" gradientUnits="userSpaceOnUse" x1="236.8" y1="363.3" x2="471.1" y2="256.0"><stop offset="0.000" stop-color="#6212db"/><stop offset="0.083" stop-color="#6e00db"/><stop offset="0.167" stop-color="#6e00db"/><stop offset="0.250" stop-color="#6e00db"/><stop offset="0.333" stop-color="#315cd6"/><stop offset="0.417" stop-color="#20bbc0"/><stop offset="0.500" stop-color="#24bebe"/><stop offset="0.583" stop-color="#3fcfb3"/><stop offset="0.667" stop-color="#61daa2"/><stop offset="0.750" stop-color="#6cdb9c"/><stop offset="0.833" stop-color="#80d990"/><stop offset="0.917" stop-color="#d6a158"/><stop offset="1.000" stop-color="#db542b"/></linearGradient><linearGradient id="g102" gradientUnits="userSpaceOnUse" x1="238.4" y1="364.4" x2="472.9" y2="256.9"><stop offset="0.000" stop-color="#5625db"/><stop offset="0.083" stop-color="#6d02db"/><stop offset="0.167" stop-color="#6e00db"/><stop offset="0.250" stop-color="#6e00db"/><stop offset="0.333" stop-color="#315cd6"/><stop offset="0.417" stop-color="#23bdbe"/><stop offset="0.500" stop-color="#25bebe"/><stop offset="0.583" stop-color="#40d0b2"/><stop offset="0.667" stop-color="#63dba1"/><stop offset="0.750" stop-color="#70db9a"/><stop offset="0.833" stop-color="#89d78b"/><stop offset="0.917" stop-color="#db904d"/><stop offset="1.000" stop-color="#db4121"/></linearGradient><linearGradient id="g103" gradientUnits="userSpaceOnUse" x1="240.0" y1="365.6" x2="474.7" y2="257.8"><stop offset="0.000" stop-color="#5920db"/><stop offset="0.083" stop-color="#660cdb"/><stop offset="0.167" stop-color="#6015db"/><stop offset="0.250" stop-color="#5b1edb"/><stop offset="0.333" stop-color="#2869d5"/><stop offset="0.417" stop-color="#1cb7c1"/><stop offset="0.500" stop-color="#09a4c8"/><stop offset="0.583" stop-color="#2fc5ba"/><stop offset="0.667" stop-color="#5edaa4"/><stop offset="0.750" stop-color="#77db96"/><stop offset="0.833" stop-color="#92d486"/><stop offset="0.917" stop-color="#db8446"/><stop offset="1.000" stop-color="#db391d"/></linearGradient><linearGradient id="g104" gradientUnits="userSpaceOnUse" x1="241.5" y1="366.8" x2="476.4" y2="258.6"><stop offset="0.000" stop-color="#4d32da"/><stop offset="0.083" stop-color="#6114db"/><stop offset="0.167" stop-color="#6213db"/><stop offset="0.250" stop-color="#6212db"/><stop offset="0.333" stop-color="#286ad4"/><stop offset="0.417" stop-color="#26bfbd"/><stop offset="0.500" stop-color="#18b3c3"/><stop offset="0.583" stop-color="#30c6b9"/><stop offset="0.667" stop-color="#54d8a9"/><stop offset="0.750" stop-color="#63dba1"/><stop offset="0.833" stop-color="#86d88d"/><stop offset="0.917" stop-color="#db8949"/><stop offset="1.000" stop-color="#db3e1f"/></linearGradient><linearGradient id="g105" gradientUnits="userSpaceOnUse" x1="243.1" y1="367.9" x2="478.1" y2="259.5"><stop offset="0.000" stop-color="#5429da"/><stop offset="0.083" stop-color="#650edb"/><stop offset="0.167" stop-color="#6310db"/><stop offset="0.250" stop-color="#6212db"/><stop offset="0.333" stop-color="#1f75d3"/><stop offset="0.417" stop-color="#36cab6"/><stop offset="0.500" stop-color="#2ac2bc"/><stop offset="0.583" stop-color="#3accb5"/><stop offset="0.667" stop-color="#56d8a8"/><stop offset="0.750" stop-color="#5ddaa4"/><stop offset="0.833" stop-color="#84d88e"/><stop offset="0.917" stop-color="#db8949"/><stop offset="1.000" stop-color="#db3b1e"/></linearGradient><linearGradient id="g106" gradientUnits="userSpaceOnUse" x1="244.7" y1="369.1" x2="479.8" y2="260.3"><stop offset="0.000" stop-color="#4e31da"/><stop offset="0.083" stop-color="#6809db"/><stop offset="0.167" stop-color="#6e00db"/><stop offset="0.250" stop-color="#6e00db"/><stop offset="0.333" stop-color="#2f60d6"/><stop offset="0.417" stop-color="#29c1bc"/><stop offset="0.500" stop-color="#1cb6c1"/><stop offset="0.583" stop-color="#32c8b8"/><stop offset="0.667" stop-color="#57d8a7"/><stop offset="0.750" stop-color="#68db9e"/><stop offset="0.833" stop-color="#8bd68a"/><stop offset="0.917" stop-color="#db8a49"/><stop offset="1.000" stop-color="#db4a25"/></linearGradient><linearGradient id="g107" gradientUnits="userSpaceOnUse" x1="246.2" y1="370.2" x2="481.4" y2="261.1"><stop offset="0.000" stop-color="#502eda"/><stop offset="0.083" stop-color="#6114db"/><stop offset="0.167" stop-color="#6015db"/><stop offset="0.250" stop-color="#6016db"/><stop offset="0.333" stop-color="#1483d0"/><stop offset="0.417" stop-color="#41d0b2"/><stop offset="0.500" stop-color="#30c6b9"/><stop offset="0.583" stop-color="#43d1b1"/><stop offset="0.667" stop-color="#64dba0"/><stop offset="0.750" stop-color="#71db99"/><stop offset="0.833" stop-color="#99d181"/><stop offset="0.917" stop-color="#db783f"/><stop offset="1.000" stop-color="#db3018"/></linearGradient><linearGradient id="g108" gradientUnits="userSpaceOnUse" x1="247.8" y1="371.4" x2="483.0" y2="261.9"><stop offset="0.000" stop-color="#5626da"/><stop offset="0.083" stop-color="#6a05db"/><stop offset="0.167" stop-color="#6d02db"/><stop offset="0.250" stop-color="#6e00db"/><stop offset="0.333" stop-color="#1e77d2"/><stop offset="0.417" stop-color="#37cbb6"/><stop offset="0.500" stop-color="#28c1bd"/><stop offset="0.583" stop-color="#3dceb4"/><stop offset="0.667" stop-color="#60daa2"/><stop offset="0.750" stop-color="#71db99"/><stop offset="0.833" stop-color="#9ccf7f"/><stop offset="0.917" stop-color="#db7a40"/><stop offset="1.000" stop-color="#db341a"/></linearGradient><linearGradient id="g109" gradientUnits="userSpaceOnUse" x1="249.3" y1="372.5" x2="484.6" y2="262.7"><stop offset="0.000" stop-color="#6310db"/><stop offset="0.083" stop-color="#6e00db"/><stop offset="0.167" stop-color="#6e00db"/><stop offset="0.250" stop-color="#6c02db"/><stop offset="0.333" stop-color="#1780d1"/><stop offset="0.417" stop-color="#39ccb6"/><stop offset="0.500" stop-color="#2ac2bc"/><stop offset="0.583" stop-color="#3ecfb3"/><stop offset="0.667" stop-color="#61daa2"/><stop offset="0.750" stop-color="#73db98"/><stop offset="0.833" stop-color="#97d282"/><stop offset="0.917" stop-color="#db904d"/><stop offset="1.000" stop-color="#db592d"/></linearGradient><linearGradient id="g110" gradientUnits="userSpaceOnUse" x1="250.9" y1="373.7" x2="486.2" y2="263.5"><stop offset="0.000" stop-color="#5d1adb"/><stop offset="0.083" stop-color="#6e00db"/><stop offset="0.167" stop-color="#6e00db"/><stop offset="0.250" stop-color="#6e00db"/><stop offset="0.333" stop-color="#1d78d2"/><stop offset="0.417" stop-color="#35c9b7"/><stop offset="0.500" stop-color="#31c7b9"/><stop offset="0.583" stop-color="#41d0b2"/><stop offset="0.667" stop-color="#5edaa3"/><stop offset="0.750" stop-color="#6ddb9b"/><stop offset="0.833" stop-color="#98d182"/><stop offset="0.917" stop-color="#db8d4b"/><stop offset="1.000" stop-color="#db4d27"/></linearGradient><linearGradient id="g111" gradientUnits="userSpaceOnUse" x1="252.5" y1="374.8" x2="487.7" y2="264.3"><stop offset="0.000" stop-color="#483bd9"/><stop offset="0.083" stop-color="#5d1bdb"/><stop offset="0.167" stop-color="#6907db"/><stop offset="0.250" stop-color="#6d00db"/><stop offset="0.333" stop-color="#0e8acf"/><stop offset="0.417" stop-color="#35cab7"/><stop offset="0.500" stop-color="#2cc4bb"/><stop offset="0.583" stop-color="#3fcfb3"/><stop offset="0.667" stop-color="#5edaa3"/><stop offset="0.750" stop-color="#70db9a"/><stop offset="0.833" stop-color="#9bd080"/><stop offset="0.917" stop-color="#db904d"/><stop offset="1.000" stop-color="#db4f28"/></linearGradient><linearGradient id="g112" gradientUnits="userSpaceOnUse" x1="254.0" y1="376.0" x2="489.3" y2="265.1"><stop offset="0.000" stop-color="#5e18db"/><stop offset="0.083" stop-color="#6d01db"/><stop offset="0.167" stop-color="#6e00db"/><stop offset="0.250" stop-color="#6d01db"/><stop offset="0.333" stop-color="#1187cf"/><stop offset="0.417" stop-color="#2ec5ba"/><stop offset="0.500" stop-color="#2cc4bb"/><stop offset="0.583" stop-color="#43d1b1"/><stop offset="0.667" stop-color="#64dba1"/><stop offset="0.750" stop-color="#79db94"/><stop offset="0.833" stop-color="#a3cc7b"/><stop offset="0.917" stop-color="#db8d4b"/><stop offset="1.000" stop-color="#db5129"/></linearGradient><linearGradient id="g113" gradientUnits="userSpaceOnUse" x1="255.6" y1="377.2" x2="490.9" y2="265.8"><stop offset="0.000" stop-color="#5625db"/><stop offset="0.083" stop-color="#5f16db"/><stop offset="0.167" stop-color="#6c02db"/><stop offset="0.250" stop-color="#522bda"/><stop offset="0.333" stop-color="#0496cc"/><stop offset="0.417" stop-color="#2fc6ba"/><stop offset="0.500" stop-color="#2bc2bc"/><stop offset="0.583" stop-color="#3dceb4"/><stop offset="0.667" stop-color="#59d9a6"/><stop offset="0.750" stop-color="#6bdb9c"/><stop offset="0.833" stop-color="#9ece7e"/><stop offset="0.917" stop-color="#db8445"/><stop offset="1.000" stop-color="#db351a"/></linearGradient><linearGradient id="g114" gradientUnits="userSpaceOnUse" x1="257.2" y1="378.3" x2="492.5" y2="266.6"><stop offset="0.000" stop-color="#6114db"/><stop offset="0.083" stop-color="#6907db"/><stop offset="0.167" stop-color="#6e00db"/><stop offset="0.250" stop-color="#5625db"/><stop offset="0.333" stop-color="#0c8ece"/><stop offset="0.417" stop-color="#28c1bc"/><stop offset="0.500" stop-color="#2ec5ba"/><stop offset="0.583" stop-color="#3fcfb3"/><stop offset="0.667" stop-color="#58d9a7"/><stop offset="0.750" stop-color="#6adb9d"/><stop offset="0.833" stop-color="#9bd080"/><stop offset="0.917" stop-color="#db8a49"/><stop offset="1.000" stop-color="#db4121"/></linearGradient><linearGradient id="g115" gradientUnits="userSpaceOnUse" x1="258.7" y1="379.5" x2="494.1" y2="267.4"><stop offset="0.000" stop-color="#502fda"/><stop offset="0.083" stop-color="#5526da"/><stop offset="0.167" stop-color="#6809db"/><stop offset="0.250" stop-color="#3f47d8"/><stop offset="0.333" stop-color="#08a3c8"/><stop offset="0.417" stop-color="#3ccdb4"/><stop offset="0.500" stop-color="#4ad4ae"/><stop offset="0.583" stop-color="#5ad9a5"/><stop offset="0.667" stop-color="#72db99"/><stop offset="0.750" stop-color="#82d98f"/><stop offset="0.833" stop-color="#a1cd7c"/><stop offset="0.917" stop-color="#db9751"/><stop offset="1.000" stop-color="#db6735"/></linearGradient><linearGradient id="g116" gradientUnits="userSpaceOnUse" x1="260.3" y1="380.6" x2="495.7" y2="268.2"><stop offset="0.000" stop-color="#6311db"/><stop offset="0.083" stop-color="#5f16db"/><stop offset="0.167" stop-color="#6808db"/><stop offset="0.250" stop-color="#3950d7"/><stop offset="0.333" stop-color="#0595cc"/><stop offset="0.417" stop-color="#23bdbf"/><stop offset="0.500" stop-color="#2ec5ba"/><stop offset="0.583" stop-color="#3bcdb4"/><stop offset="0.667" stop-color="#50d6aa"/><stop offset="0.750" stop-color="#5fdaa3"/><stop offset="0.833" stop-color="#8fd587"/><stop offset="0.917" stop-color="#db9751"/><stop offset="1.000" stop-color="#db5129"/></linearGradient><linearGradient id="g117" gradientUnits="userSpaceOnUse" x1="261.8" y1="381.8" x2="497.3" y2="269.0"><stop offset="0.000" stop-color="#4b36da"/><stop offset="0.083" stop-color="#3753d7"/><stop offset="0.167" stop-color="#315dd6"/><stop offset="0.250" stop-color="#06a2c9"/><stop offset="0.333" stop-color="#28c1bc"/><stop offset="0.417" stop-color="#41d0b2"/><stop offset="0.500" stop-color="#41d0b2"/><stop offset="0.583" stop-color="#54d7a9"/><stop offset="0.667" stop-color="#6adb9d"/><stop offset="0.750" stop-color="#79db95"/><stop offset="0.833" stop-color="#a0cd7d"/><stop offset="0.917" stop-color="#db8e4b"/><stop offset="1.000" stop-color="#db4a25"/></linearGradient><linearGradient id="g118" gradientUnits="userSpaceOnUse" x1="263.4" y1="382.9" x2="498.8" y2="269.8"><stop offset="0.000" stop-color="#6115db"/><stop offset="0.083" stop-color="#4b36da"/><stop offset="0.167" stop-color="#4441d9"/><stop offset="0.250" stop-color="#1582d0"/><stop offset="0.333" stop-color="#11adc5"/><stop offset="0.417" stop-color="#35cab7"/><stop offset="0.500" stop-color="#46d2b0"/><stop offset="0.583" stop-color="#5fdaa3"/><stop offset="0.667" stop-color="#7ada94"/><stop offset="0.750" stop-color="#92d486"/><stop offset="0.833" stop-color="#afc473"/><stop offset="0.917" stop-color="#db8747"/><stop offset="1.000" stop-color="#db522a"/></linearGradient><linearGradient id="g119" gradientUnits="userSpaceOnUse" x1="265.0" y1="384.1" x2="500.4" y2="270.6"><stop offset="0.000" stop-color="#5723db"/><stop offset="0.083" stop-color="#3a4fd8"/><stop offset="0.167" stop-color="#2c64d5"/><stop offset="0.250" stop-color="#019acb"/><stop offset="0.333" stop-color="#25bebe"/><stop offset="0.417" stop-color="#4ed6ac"/><stop offset="0.500" stop-color="#67db9f"/><stop offset="0.583" stop-color="#74db98"/><stop offset="0.667" stop-color="#81d990"/><stop offset="0.750" stop-color="#8dd689"/><stop offset="0.833" stop-color="#aec574"/><stop offset="0.917" stop-color="#db8546"/><stop offset="1.000" stop-color="#db4925"/></linearGradient><linearGradient id="g120" gradientUnits="userSpaceOnUse" x1="266.5" y1="385.2" x2="502.0" y2="271.4"><stop offset="0.000" stop-color="#5c1cdb"/><stop offset="0.083" stop-color="#3557d7"/><stop offset="0.167" stop-color="#1e77d2"/><stop offset="0.250" stop-color="#09a5c8"/><stop offset="0.333" stop-color="#23bcbf"/><stop offset="0.417" stop-color="#45d2b0"/><stop offset="0.500" stop-color="#5bd9a5"/><stop offset="0.583" stop-color="#69db9e"/><stop offset="0.667" stop-color="#7bda93"/><stop offset="0.750" stop-color="#8cd689"/><stop offset="0.833" stop-color="#a9c877"/><stop offset="0.917" stop-color="#db8f4c"/><stop offset="1.000" stop-color="#db5d2f"/></linearGradient><linearGradient id="g121" gradientUnits="userSpaceOnUse" x1="268.1" y1="386.4" x2="503.6" y2="272.2"><stop offset="0.000" stop-color="#6016db"/><stop offset="0.083" stop-color="#3557d7"/><stop offset="0.167" stop-color="#1d78d2"/><stop offset="0.250" stop-color="#009cca"/><stop offset="0.333" stop-color="#11adc5"/><stop offset="0.417" stop-color="#31c7b9"/><stop offset="0.500" stop-color="#48d3af"/><stop offset="0.583" stop-color="#4fd6ab"/><stop offset="0.667" stop-color="#5fdaa3"/><stop offset="0.750" stop-color="#6fdb9b"/><stop offset="0.833" stop-color="#96d283"/><stop offset="0.917" stop-color="#db9852"/><stop offset="1.000" stop-color="#db5f31"/></linearGradient><linearGradient id="g122" gradientUnits="userSpaceOnUse" x1="269.7" y1="387.6" x2="505.2" y2="272.9"><stop offset="0.000" stop-color="#532ada"/><stop offset="0.083" stop-color="#276bd4"/><stop offset="0.167" stop-color="#1286d0"/><stop offset="0.250" stop-color="#0298cb"/><stop offset="0.333" stop-color="#07a2c9"/><stop offset="0.417" stop-color="#23bdbe"/><stop offset="0.500" stop-color="#37cbb6"/><stop offset="0.583" stop-color="#47d3af"/><stop offset="0.667" stop-color="#5fdaa3"/><stop offset="0.750" stop-color="#77db96"/><stop offset="0.833" stop-color="#9dcf7f"/><stop offset="0.917" stop-color="#db934f"/><stop offset="1.000" stop-color="#db5c2f"/></linearGradient><linearGradient id="g123" gradientUnits="userSpaceOnUse" x1="271.2" y1="388.7" x2="506.8" y2="273.7"><stop offset="0.000" stop-color="#5526da"/><stop offset="0.083" stop-color="#177fd1"/><stop offset="0.167" stop-color="#0aa6c7"/><stop offset="0.250" stop-color="#1cb7c1"/><stop offset="0.333" stop-color="#22bcbf"/><stop offset="0.417" stop-color="#3ecfb3"/><stop offset="0.500" stop-color="#50d6ab"/><stop offset="0.583" stop-color="#5cd9a5"/><stop offset="0.667" stop-color="#6fdb9a"/><stop offset="0.750" stop-color="#81d990"/><stop offset="0.833" stop-color="#a6ca79"/><stop offset="0.917" stop-color="#db8a49"/><stop offset="1.000" stop-color="#db4e28"/></linearGradient><linearGradient id="g124" gradientUnits="userSpaceOnUse" x1="272.8" y1="389.9" x2="508.4" y2="274.5"><stop offset="0.000" stop-color="#483ad9"/><stop offset="0.083" stop-color="#0596cc"/><stop offset="0.167" stop-color="#1bb6c2"/><stop offset="0.250" stop-color="#22bcbf"/><stop offset="0.333" stop-color="#2ac2bc"/><stop offset="0.417" stop-color="#49d4ae"/><stop offset="0.500" stop-color="#5ddaa4"/><stop offset="0.583" stop-color="#69db9e"/><stop offset="0.667" stop-color="#7bda94"/><stop offset="0.750" stop-color="#8bd78a"/><stop offset="0.833" stop-color="#b0c372"/><stop offset="0.917" stop-color="#db7b40"/><stop offset="1.000" stop-color="#db361b"/></linearGradient><linearGradient id="g125" gradientUnits="userSpaceOnUse" x1="274.4" y1="391.0" x2="509.9" y2="275.3"><stop offset="0.000" stop-color="#6016db"/><stop offset="0.083" stop-color="#1583d0"/><stop offset="0.167" stop-color="#0ca8c7"/><stop offset="0.250" stop-color="#0da9c6"/><stop offset="0.333" stop-color="#15b0c4"/><stop offset="0.417" stop-color="#36cab7"/><stop offset="0.500" stop-color="#4fd6ab"/><stop offset="0.583" stop-color="#5ad9a6"/><stop offset="0.667" stop-color="#6bdb9c"/><stop offset="0.750" stop-color="#7cda93"/><stop offset="0.833" stop-color="#9fce7e"/><stop offset="0.917" stop-color="#db9550"/><stop offset="1.000" stop-color="#db6031"/></linearGradient><linearGradient id="g126" gradientUnits="userSpaceOnUse" x1="275.9" y1="392.2" x2="511.5" y2="276.1"><stop offset="0.000" stop-color="#5920db"/><stop offset="0.083" stop-color="#0496cc"/><stop offset="0.167" stop-color="#1eb8c1"/><stop offset="0.250" stop-color="#1bb6c2"/><stop offset="0.333" stop-color="#1fb9c0"/><stop offset="0.417" stop-color="#3ecfb3"/><stop offset="0.500" stop-color="#58d9a7"/><stop offset="0.583" stop-color="#5edaa3"/><stop offset="0.667" stop-color="#6cdb9c"/><stop offset="0.750" stop-color="#79db95"/><stop offset="0.833" stop-color="#a0cd7d"/><stop offset="0.917" stop-color="#db8d4b"/><stop offset="1.000" stop-color="#db4e28"/></linearGradient><linearGradient id="g127" gradientUnits="userSpaceOnUse" x1="277.5" y1="393.3" x2="513.1" y2="276.9"><stop offset="0.000" stop-color="#4d33da"/><stop offset="0.083" stop-color="#13afc4"/><stop offset="0.167" stop-color="#37cbb6"/><stop offset="0.250" stop-color="#33c8b8"/><stop offset="0.333" stop-color="#2dc4ba"/><stop offset="0.417" stop-color="#48d4ae"/><stop offset="0.500" stop-color="#5ddaa4"/><stop offset="0.583" stop-color="#63dba1"/><stop offset="0.667" stop-color="#71db99"/><stop offset="0.750" stop-color="#7dda92"/><stop offset="0.833" stop-color="#a8c978"/><stop offset="0.917" stop-color="#db8043"/><stop offset="1.000" stop-color="#db361b"/></linearGradient><linearGradient id="g128" gradientUnits="userSpaceOnUse" x1="279.0" y1="394.5" x2="514.7" y2="277.7"><stop offset="0.000" stop-color="#4c35da"/><stop offset="0.083" stop-color="#15b1c4"/><stop offset="0.167" stop-color="#33c8b8"/><stop offset="0.250" stop-color="#24bebe"/><stop offset="0.333" stop-color="#18b3c3"/><stop offset="0.417" stop-color="#30c6b9"/><stop offset="0.500" stop-color="#43d1b1"/><stop offset="0.583" stop-color="#4dd5ac"/><stop offset="0.667" stop-color="#5fdaa3"/><stop offset="0.750" stop-color="#70db9a"/><stop offset="0.833" stop-color="#9bd080"/><stop offset="0.917" stop-color="#db8f4c"/><stop offset="1.000" stop-color="#db4c27"/></linearGradient><linearGradient id="g129" gradientUnits="userSpaceOnUse" x1="280.6" y1="395.6" x2="516.3" y2="278.5"><stop offset="0.000" stop-color="#4a37da"/><stop offset="0.083" stop-color="#19b4c2"/><stop offset="0.167" stop-color="#33c8b8"/><stop offset="0.250" stop-color="#19b4c2"/><stop offset="0.333" stop-color="#11adc5"/><stop offset="0.417" stop-color="#2ec5ba"/><stop offset="0.500" stop-color="#46d3af"/><stop offset="0.583" stop-color="#4fd6ab"/><stop offset="0.667" stop-color="#5fdaa3"/><stop offset="0.750" stop-color="#6fdb9a"/><stop offset="0.833" stop-color="#9ad080"/><stop offset="0.917" stop-color="#db8f4c"/><stop offset="1.000" stop-color="#db4e27"/></linearGradient><linearGradient id="g130" gradientUnits="userSpaceOnUse" x1="282.2" y1="396.8" x2="517.9" y2="279.2"><stop offset="0.000" stop-color="#4938d9"/><stop offset="0.083" stop-color="#22bcbf"/><stop offset="0.167" stop-color="#3fcfb3"/><stop offset="0.250" stop-color="#22bcbf"/><stop offset="0.333" stop-color="#19b4c2"/><stop offset="0.417" stop-color="#35cab7"/><stop offset="0.500" stop-color="#4cd5ad"/><stop offset="0.583" stop-color="#57d9a7"/><stop offset="0.667" stop-color="#6bdb9d"/><stop offset="0.750" stop-color="#7dda92"/><stop offset="0.833" stop-color="#a5ca7a"/><stop offset="0.917" stop-color="#db8747"/><stop offset="1.000" stop-color="#db4925"/></linearGradient><linearGradient id="g131" gradientUnits="userSpaceOnUse" x1="283.7" y1="398.0" x2="519.5" y2="280.0"><stop offset="0.000" stop-color="#4046d8"/><stop offset="0.083" stop-color="#27c0bd"/><stop offset="0.167" stop-color="#33c9b8"/><stop offset="0.250" stop-color="#10acc5"/><stop offset="0.333" stop-color="#05a0c9"/><stop offset="0.417" stop-color="#1fb9c0"/><stop offset="0.500" stop-color="#34c9b8"/><stop offset="0.583" stop-color="#41d0b2"/><stop offset="0.667" stop-color="#57d8a7"/><stop offset="0.750" stop-color="#6cdb9c"/><stop offset="0.833" stop-color="#99d181"/><stop offset="0.917" stop-color="#db8f4c"/><stop offset="1.000" stop-color="#db4d27"/></linearGradient><linearGradient id="g132" gradientUnits="userSpaceOnUse" x1="285.3" y1="399.1" x2="521.0" y2="280.8"><stop offset="0.000" stop-color="#305ed6"/><stop offset="0.083" stop-color="#3ccdb4"/><stop offset="0.167" stop-color="#43d1b1"/><stop offset="0.250" stop-color="#23bcbf"/><stop offset="0.333" stop-color="#1bb6c2"/><stop offset="0.417" stop-color="#38cbb6"/><stop offset="0.500" stop-color="#4fd6ab"/><stop offset="0.583" stop-color="#58d9a6"/><stop offset="0.667" stop-color="#69db9e"/><stop offset="0.750" stop-color="#79db94"/><stop offset="0.833" stop-color="#9cd080"/><stop offset="0.917" stop-color="#db9852"/><stop offset="1.000" stop-color="#db6534"/></linearGradient><linearGradient id="g133" gradientUnits="userSpaceOnUse" x1="286.9" y1="400.3" x2="522.6" y2="281.6"><stop offset="0.000" stop-color="#286ad4"/><stop offset="0.083" stop-color="#4bd4ad"/><stop offset="0.167" stop-color="#5bd9a5"/><stop offset="0.250" stop-color="#45d2b0"/><stop offset="0.333" stop-color="#40d0b2"/><stop offset="0.417" stop-color="#5edaa4"/><stop offset="0.500" stop-color="#74db97"/><stop offset="0.583" stop-color="#79db95"/><stop offset="0.667" stop-color="#84d88e"/><stop offset="0.750" stop-color="#8dd689"/><stop offset="0.833" stop-color="#afc473"/><stop offset="0.917" stop-color="#db8043"/><stop offset="1.000" stop-color="#db3e1f"/></linearGradient><linearGradient id="g134" gradientUnits="userSpaceOnUse" x1="288.4" y1="401.4" x2="524.2" y2="282.4"><stop offset="0.000" stop-color="#1c78d2"/><stop offset="0.083" stop-color="#48d3ae"/><stop offset="0.167" stop-color="#53d7a9"/><stop offset="0.250" stop-color="#38cbb6"/><stop offset="0.333" stop-color="#31c7b9"/><stop offset="0.417" stop-color="#4dd5ac"/><stop offset="0.500" stop-color="#61daa2"/><stop offset="0.583" stop-color="#6adb9d"/><stop offset="0.667" stop-color="#79db95"/><stop offset="0.750" stop-color="#86d88d"/><stop offset="0.833" stop-color="#adc574"/><stop offset="0.917" stop-color="#db7c41"/><stop offset="1.000" stop-color="#db3219"/></linearGradient><filter id="b1" x="-30%" y="-30%" width="160%" height="160%"><feGaussianBlur stdDeviation="1.1"/></filter><filter id="b2" x="-40%" y="-40%" width="180%" height="180%"><feGaussianBlur stdDeviation="2.2"/></filter><filter id="b3" x="-40%" y="-40%" width="180%" height="180%"><feGaussianBlur stdDeviation="3"/></filter><linearGradient id="side" gradientUnits="userSpaceOnUse" x1="280.2" y1="408.0" x2="482.2" y2="268.0"><stop offset="0.000" stop-color="#1c7c74"/><stop offset="0.100" stop-color="#17606c"/><stop offset="0.280" stop-color="#1b3488"/><stop offset="0.420" stop-color="#1a4f7c"/><stop offset="0.580" stop-color="#257a62"/><stop offset="0.740" stop-color="#458a4c"/><stop offset="0.870" stop-color="#8a7a34"/><stop offset="0.950" stop-color="#b04f24"/><stop offset="1.000" stop-color="#ac2c16"/></linearGradient><linearGradient id="brim" gradientUnits="userSpaceOnUse" x1="265.2" y1="393.0" x2="360.2" y2="345.0"><stop offset="0.000" stop-color="#35c9b8"/><stop offset="0.250" stop-color="#55dca8"/><stop offset="0.500" stop-color="#2aa6c8"/><stop offset="0.800" stop-color="#2a62c8"/><stop offset="1.000" stop-color="#2a62c8"/></linearGradient><linearGradient id="lrim" gradientUnits="userSpaceOnUse" x1="78.2" y1="245.0" x2="266.2" y2="156.0"><stop offset="0.000" stop-color="#3fc4a8"/><stop offset="0.200" stop-color="#48ccb4"/><stop offset="0.400" stop-color="#5cd8a4"/><stop offset="0.550" stop-color="#78dc94"/><stop offset="0.660" stop-color="#8fdc8a"/><stop offset="0.720" stop-color="#d6b863"/><stop offset="0.770" stop-color="#e8a555"/><stop offset="0.810" stop-color="#b9d27a"/><stop offset="0.860" stop-color="#e89a4a"/><stop offset="0.930" stop-color="#ec7a38"/><stop offset="1.000" stop-color="#e4501e"/></linearGradient><linearGradient id="lrimb" gradientUnits="userSpaceOnUse" x1="88.2" y1="246.0" x2="180.2" y2="203.0"><stop offset="0" stop-color="#5a22d8"/><stop offset="0.3" stop-color="#3b55dc"/><stop offset="0.6" stop-color="#2a8fd8" stop-opacity="0.85"/><stop offset="1" stop-color="#2fb8c8" stop-opacity="0"/></linearGradient><linearGradient id="lrimc" gradientUnits="userSpaceOnUse" x1="88.2" y1="246.0" x2="160.2" y2="210.0"><stop offset="0" stop-color="#2aa0d8" stop-opacity="0.9"/><stop offset="0.6" stop-color="#2ab8d0" stop-opacity="0.6"/><stop offset="1" stop-color="#2fb8c8" stop-opacity="0"/></linearGradient><linearGradient id="lwall" gradientUnits="userSpaceOnUse" x1="94.2" y1="245.0" x2="271.2" y2="163.0"><stop offset="0.000" stop-color="#3a16a8"/><stop offset="0.200" stop-color="#1d4aa0"/><stop offset="0.400" stop-color="#177a88"/><stop offset="0.600" stop-color="#2f9a6a"/><stop offset="0.800" stop-color="#8a8a3a"/><stop offset="0.900" stop-color="#a8602a"/><stop offset="1.000" stop-color="#9a3a14"/></linearGradient><linearGradient id="strip" gradientUnits="userSpaceOnUse" x1="280.2" y1="388.0" x2="360.2" y2="345.0"><stop offset="0.000" stop-color="#6b10d8"/><stop offset="0.300" stop-color="#5a1cd4"/><stop offset="0.550" stop-color="#3a3fd0"/><stop offset="0.800" stop-color="#2a6ac8"/><stop offset="1.000" stop-color="#2a9ab8"/></linearGradient></defs><g clip-path="url(#plate)"><polygon points="77.9,245.8 80.1,247.4 270.1,155.9 267.9,154.8" fill="url(#g0)" /><polygon points="79.4,246.9 81.6,248.5 271.7,156.7 269.5,155.6" fill="url(#g1)" /><polygon points="81.0,248.1 83.2,249.7 273.3,157.5 271.0,156.4" fill="url(#g2)" /><polygon points="82.6,249.2 84.8,250.9 274.9,158.3 272.6,157.2" fill="url(#g3)" /><polygon points="84.1,250.4 86.3,252.0 276.4,159.1 274.2,158.0" fill="url(#g4)" /><polygon points="85.7,251.5 87.9,253.2 278.0,159.9 275.8,158.8" fill="url(#g5)" /><polygon points="87.3,252.7 89.5,254.3 279.6,160.7 277.4,159.6" fill="url(#g6)" /><polygon points="88.8,253.9 91.0,255.5 281.2,161.5 279.0,160.4" fill="url(#g7)" /><polygon points="90.4,255.0 92.6,256.6 282.8,162.3 280.6,161.2" fill="url(#g8)" /><polygon points="92.0,256.2 94.1,257.8 284.4,163.0 282.1,161.9" fill="url(#g9)" /><polygon points="93.5,257.3 95.7,258.9 286.0,163.8 283.7,162.7" fill="url(#g10)" /><polygon points="95.1,258.5 97.3,260.1 287.5,164.6 285.3,163.5" fill="url(#g11)" /><polygon points="96.6,259.6 98.8,261.3 289.1,165.4 286.9,164.3" fill="url(#g12)" /><polygon points="98.2,260.8 100.4,262.4 290.7,166.2 288.5,165.1" fill="url(#g13)" /><polygon points="99.8,261.9 102.0,263.6 292.3,167.0 290.1,165.9" fill="url(#g14)" /><polygon points="101.3,263.1 103.5,264.7 293.9,167.8 291.7,166.7" fill="url(#g15)" /><polygon points="102.9,264.3 105.1,265.9 295.5,168.6 293.2,167.5" fill="url(#g16)" /><polygon points="104.5,265.4 106.6,267.0 297.1,169.4 294.8,168.3" fill="url(#g17)" /><polygon points="106.0,266.6 108.2,268.2 298.6,170.1 296.4,169.0" fill="url(#g18)" /><polygon points="107.6,267.7 109.8,269.3 300.2,170.9 298.0,169.8" fill="url(#g19)" /><polygon points="109.1,268.9 111.3,270.5 301.8,171.7 299.6,170.6" fill="url(#g20)" /><polygon points="110.7,270.0 112.9,271.7 303.4,172.5 301.2,171.4" fill="url(#g21)" /><polygon points="112.3,271.2 114.5,272.8 305.0,173.3 302.8,172.2" fill="url(#g22)" /><polygon points="113.8,272.3 116.0,274.0 306.6,174.1 304.3,173.0" fill="url(#g23)" /><polygon points="115.4,273.5 117.6,275.1 308.2,174.9 305.9,173.8" fill="url(#g24)" /><polygon points="117.0,274.7 119.2,276.3 309.7,175.7 307.5,174.6" fill="url(#g25)" /><polygon points="118.5,275.8 120.7,277.4 311.3,176.5 309.1,175.4" fill="url(#g26)" /><polygon points="120.1,277.0 122.3,278.6 312.9,177.3 310.7,176.1" fill="url(#g27)" /><polygon points="121.6,278.1 123.8,279.7 314.6,178.1 312.3,176.9" fill="url(#g28)" /><polygon points="123.2,279.3 125.4,280.9 316.2,178.9 313.9,177.8" fill="url(#g29)" /><polygon points="124.8,280.4 127.0,282.1 318.0,179.8 315.6,178.6" fill="url(#g30)" /><polygon points="126.3,281.6 128.5,283.2 319.7,180.6 317.3,179.4" fill="url(#g31)" /><polygon points="127.9,282.7 130.1,284.4 321.5,181.5 319.1,180.3" fill="url(#g32)" /><polygon points="129.5,283.9 131.7,285.5 323.3,182.4 320.9,181.2" fill="url(#g33)" /><polygon points="131.0,285.1 133.2,286.7 325.2,183.4 322.7,182.1" fill="url(#g34)" /><polygon points="132.6,286.2 134.8,287.8 327.1,184.3 324.5,183.0" fill="url(#g35)" /><polygon points="134.2,287.4 136.3,289.0 329.0,185.2 326.4,184.0" fill="url(#g36)" /><polygon points="135.7,288.5 137.9,290.1 330.9,186.2 328.3,184.9" fill="url(#g37)" /><polygon points="137.3,289.7 139.5,291.3 332.9,187.2 330.3,185.9" fill="url(#g38)" /><polygon points="138.8,290.8 141.0,292.5 334.9,188.2 332.2,186.9" fill="url(#g39)" /><polygon points="140.4,292.0 142.6,293.6 336.9,189.2 334.2,187.9" fill="url(#g40)" /><polygon points="142.0,293.1 144.2,294.8 339.0,190.2 336.3,188.9" fill="url(#g41)" /><polygon points="143.5,294.3 145.7,295.9 341.0,191.2 338.3,189.9" fill="url(#g42)" /><polygon points="145.1,295.5 147.3,297.1 343.1,192.3 340.4,190.9" fill="url(#g43)" /><polygon points="146.7,296.6 148.8,298.2 345.3,193.3 342.5,192.0" fill="url(#g44)" /><polygon points="148.2,297.8 150.4,299.4 347.4,194.4 344.6,193.0" fill="url(#g45)" /><polygon points="149.8,298.9 152.0,300.5 349.6,195.5 346.8,194.1" fill="url(#g46)" /><polygon points="151.3,300.1 153.5,301.7 351.7,196.6 348.9,195.2" fill="url(#g47)" /><polygon points="152.9,301.2 155.1,302.9 354.0,197.7 351.1,196.3" fill="url(#g48)" /><polygon points="154.5,302.4 156.7,304.0 356.2,198.8 353.3,197.4" fill="url(#g49)" /><polygon points="156.0,303.5 158.2,305.2 358.4,199.9 355.5,198.5" fill="url(#g50)" /><polygon points="157.6,304.7 159.8,306.3 360.7,201.0 357.8,199.6" fill="url(#g51)" /><polygon points="159.2,305.9 161.4,307.5 362.9,202.1 360.0,200.7" fill="url(#g52)" /><polygon points="160.7,307.0 162.9,308.6 365.2,203.3 362.3,201.8" fill="url(#g53)" /><polygon points="162.3,308.2 164.5,309.8 367.5,204.4 364.6,203.0" fill="url(#g54)" /><polygon points="163.8,309.3 166.0,310.9 369.8,205.6 366.9,204.1" fill="url(#g55)" /><polygon points="165.4,310.5 167.6,312.1 372.1,206.7 369.2,205.3" fill="url(#g56)" /><polygon points="167.0,311.6 169.2,313.3 374.5,207.9 371.5,206.4" fill="url(#g57)" /><polygon points="168.5,312.8 170.7,314.4 376.8,209.1 373.8,207.6" fill="url(#g58)" /><polygon points="170.1,313.9 172.3,315.6 379.2,210.2 376.2,208.7" fill="url(#g59)" /><polygon points="171.7,315.1 173.9,316.7 381.5,211.4 378.5,209.9" fill="url(#g60)" /><polygon points="173.2,316.3 175.4,317.9 383.9,212.6 380.9,211.1" fill="url(#g61)" /><polygon points="174.8,317.4 177.0,319.0 386.2,213.7 383.2,212.2" fill="url(#g62)" /><polygon points="176.4,318.6 178.5,320.2 388.6,214.9 385.6,213.4" fill="url(#g63)" /><polygon points="177.9,319.7 180.1,321.3 391.0,216.1 388.0,214.6" fill="url(#g64)" /><polygon points="179.5,320.9 181.7,322.5 393.4,217.3 390.3,215.8" fill="url(#g65)" /><polygon points="181.0,322.0 183.2,323.7 395.7,218.5 392.7,217.0" fill="url(#g66)" /><polygon points="182.6,323.2 184.8,324.8 398.1,219.7 395.1,218.1" fill="url(#g67)" /><polygon points="184.2,324.3 186.4,326.0 400.5,220.8 397.5,219.3" fill="url(#g68)" /><polygon points="185.7,325.5 187.9,327.1 402.9,222.0 399.8,220.5" fill="url(#g69)" /><polygon points="187.3,326.7 189.5,328.3 405.2,223.2 402.2,221.7" fill="url(#g70)" /><polygon points="188.9,327.8 191.0,329.4 407.6,224.4 404.6,222.9" fill="url(#g71)" /><polygon points="190.4,329.0 192.6,330.6 410.0,225.6 407.0,224.1" fill="url(#g72)" /><polygon points="192.0,330.1 194.2,331.7 412.3,226.7 409.3,225.2" fill="url(#g73)" /><polygon points="193.5,331.3 195.7,332.9 414.7,227.9 411.7,226.4" fill="url(#g74)" /><polygon points="195.1,332.4 197.3,334.1 417.0,229.1 414.0,227.6" fill="url(#g75)" /><polygon points="196.7,333.6 198.9,335.2 419.4,230.2 416.4,228.7" fill="url(#g76)" /><polygon points="198.2,334.7 200.4,336.4 421.7,231.4 418.7,229.9" fill="url(#g77)" /><polygon points="199.8,335.9 202.0,337.5 424.0,232.5 421.1,231.1" fill="url(#g78)" /><polygon points="201.4,337.1 203.6,338.7 426.3,233.7 423.4,232.2" fill="url(#g79)" /><polygon points="202.9,338.2 205.1,339.8 428.6,234.8 425.7,233.4" fill="url(#g80)" /><polygon points="204.5,339.4 206.7,341.0 430.9,236.0 428.0,234.5" fill="url(#g81)" /><polygon points="206.0,340.5 208.2,342.1 433.2,237.1 430.3,235.7" fill="url(#g82)" /><polygon points="207.6,341.7 209.8,343.3 435.4,238.2 432.5,236.8" fill="url(#g83)" /><polygon points="209.2,342.8 211.4,344.5 437.7,239.3 434.8,237.9" fill="url(#g84)" /><polygon points="210.7,344.0 212.9,345.6 439.9,240.4 437.0,239.0" fill="url(#g85)" /><polygon points="212.3,345.1 214.5,346.8 442.1,241.5 439.2,240.1" fill="url(#g86)" /><polygon points="213.9,346.3 216.1,347.9 444.3,242.6 441.5,241.2" fill="url(#g87)" /><polygon points="215.4,347.5 217.6,349.1 446.4,243.7 443.6,242.3" fill="url(#g88)" /><polygon points="217.0,348.6 219.2,350.2 448.6,244.8 445.8,243.4" fill="url(#g89)" /><polygon points="218.6,349.8 220.7,351.4 450.7,245.8 447.9,244.5" fill="url(#g90)" /><polygon points="220.1,350.9 222.3,352.5 452.8,246.9 450.1,245.5" fill="url(#g91)" /><polygon points="221.7,352.1 223.9,353.7 454.9,247.9 452.2,246.6" fill="url(#g92)" /><polygon points="223.2,353.2 225.4,354.9 456.9,248.9 454.2,247.6" fill="url(#g93)" /><polygon points="224.8,354.4 227.0,356.0 459.0,249.9 456.3,248.6" fill="url(#g94)" /><polygon points="226.4,355.5 228.6,357.2 461.0,250.9 458.3,249.6" fill="url(#g95)" /><polygon points="227.9,356.7 230.1,358.3 462.9,251.9 460.3,250.6" fill="url(#g96)" /><polygon points="229.5,357.9 231.7,359.5 464.9,252.9 462.3,251.6" fill="url(#g97)" /><polygon points="231.1,359.0 233.2,360.6 466.8,253.8 464.2,252.6" fill="url(#g98)" /><polygon points="232.6,360.2 234.8,361.8 468.7,254.8 466.1,253.5" fill="url(#g99)" /><polygon points="234.2,361.3 236.4,362.9 470.5,255.7 468.0,254.4" fill="url(#g100)" /><polygon points="235.7,362.5 237.9,364.1 472.3,256.6 469.9,255.4" fill="url(#g101)" /><polygon points="237.3,363.6 239.5,365.3 474.1,257.5 471.7,256.3" fill="url(#g102)" /><polygon points="238.9,364.8 241.1,366.4 475.9,258.4 473.5,257.2" fill="url(#g103)" /><polygon points="240.4,365.9 242.6,367.6 477.6,259.2 475.2,258.0" fill="url(#g104)" /><polygon points="242.0,367.1 244.2,368.7 479.3,260.0 477.0,258.9" fill="url(#g105)" /><polygon points="243.6,368.3 245.8,369.9 480.9,260.9 478.6,259.7" fill="url(#g106)" /><polygon points="245.1,369.4 247.3,371.0 482.5,261.7 480.3,260.5" fill="url(#g107)" /><polygon points="246.7,370.6 248.9,372.2 484.1,262.4 481.9,261.3" fill="url(#g108)" /><polygon points="248.2,371.7 250.4,373.3 485.7,263.2 483.5,262.1" fill="url(#g109)" /><polygon points="249.8,372.9 252.0,374.5 487.3,264.0 485.0,262.9" fill="url(#g110)" /><polygon points="251.4,374.0 253.6,375.7 488.9,264.8 486.6,263.7" fill="url(#g111)" /><polygon points="252.9,375.2 255.1,376.8 490.4,265.6 488.2,264.5" fill="url(#g112)" /><polygon points="254.5,376.3 256.7,378.0 492.0,266.4 489.8,265.3" fill="url(#g113)" /><polygon points="256.1,377.5 258.3,379.1 493.6,267.2 491.4,266.1" fill="url(#g114)" /><polygon points="257.6,378.7 259.8,380.3 495.2,268.0 493.0,266.9" fill="url(#g115)" /><polygon points="259.2,379.8 261.4,381.4 496.8,268.8 494.6,267.7" fill="url(#g116)" /><polygon points="260.8,381.0 262.9,382.6 498.4,269.5 496.1,268.4" fill="url(#g117)" /><polygon points="262.3,382.1 264.5,383.7 500.0,270.3 497.7,269.2" fill="url(#g118)" /><polygon points="263.9,383.3 266.1,384.9 501.5,271.1 499.3,270.0" fill="url(#g119)" /><polygon points="265.4,384.4 267.6,386.1 503.1,271.9 500.9,270.8" fill="url(#g120)" /><polygon points="267.0,385.6 269.2,387.2 504.7,272.7 502.5,271.6" fill="url(#g121)" /><polygon points="268.6,386.7 270.8,388.4 506.3,273.5 504.1,272.4" fill="url(#g122)" /><polygon points="270.1,387.9 272.3,389.5 507.9,274.3 505.7,273.2" fill="url(#g123)" /><polygon points="271.7,389.1 273.9,390.7 509.5,275.1 507.2,274.0" fill="url(#g124)" /><polygon points="273.3,390.2 275.4,391.8 511.1,275.9 508.8,274.8" fill="url(#g125)" /><polygon points="274.8,391.4 277.0,393.0 512.6,276.6 510.4,275.5" fill="url(#g126)" /><polygon points="276.4,392.5 278.6,394.1 514.2,277.4 512.0,276.3" fill="url(#g127)" /><polygon points="277.9,393.7 280.1,395.3 515.8,278.2 513.6,277.1" fill="url(#g128)" /><polygon points="279.5,394.8 281.7,396.5 517.4,279.0 515.2,277.9" fill="url(#g129)" /><polygon points="281.1,396.0 283.3,397.6 519.0,279.8 516.8,278.7" fill="url(#g130)" /><polygon points="282.6,397.1 284.8,398.8 520.6,280.6 518.3,279.5" fill="url(#g131)" /><polygon points="284.2,398.3 286.4,399.9 522.2,281.4 519.9,280.3" fill="url(#g132)" /><polygon points="285.8,399.5 288.0,401.1 523.7,282.2 521.5,281.1" fill="url(#g133)" /><polygon points="287.3,400.6 289.5,402.2 525.3,283.0 523.1,281.9" fill="url(#g134)" /><polygon points="273.9,265.2 276.5,266.8 292.8,257.6" fill="#0793cd" opacity="0.9"/><polygon points="380.5,266.5 381.7,267.1 366.4,275.3" fill="#60daa2" opacity="0.9"/><polygon points="478.2,303.1 479.6,303.9 498.0,290.3" fill="#90d587" opacity="0.9"/><polygon points="173.2,245.3 175.6,246.9 161.6,252.6" fill="#3a4fd8" opacity="0.9"/><polygon points="355.7,280.6 358.1,282.0 310.4,299.9" fill="#55d8a8" opacity="0.9"/><polygon points="413.6,303.4 415.5,304.5 397.2,310.4" fill="#6ddb9c" opacity="0.9"/><polygon points="336.5,340.4 340.2,342.8 389.5,308.9" fill="#1a7bd2" opacity="0.9"/><polygon points="350.6,231.4 353.6,233.0 364.7,226.7" fill="#d3a45a" opacity="0.9"/><polygon points="308.6,211.6 310.3,212.5 319.4,205.1" fill="#5ddaa4" opacity="0.9"/><polygon points="208.0,224.5 209.5,225.4 239.5,211.3" fill="#1d78d2" opacity="0.9"/><polygon points="192.8,217.4 194.6,218.5 177.2,229.9" fill="#17b2c3" opacity="0.9"/><polygon points="310.7,361.3 314.4,363.9 346.5,348.3" fill="#3655d7" opacity="0.9"/><polygon points="168.3,254.1 170.3,255.4 207.4,231.2" fill="#2d62d5" opacity="0.9"/><polygon points="290.8,295.0 292.9,296.3 251.4,313.7" fill="#019cca" opacity="0.9"/><polygon points="361.0,258.1 364.9,260.4 377.7,253.3" fill="#69db9e" opacity="0.9"/><polygon points="419.5,276.2 423.4,278.3 445.3,266.3" fill="#6ddb9b" opacity="0.9"/><polygon points="241.3,175.4 243.0,176.4 263.1,167.7" fill="#5cdaa4" opacity="0.9"/><polygon points="246.7,203.7 248.3,204.6 233.8,211.7" fill="#4fd6ab" opacity="0.9"/><polygon points="287.4,208.1 289.1,209.1 297.9,203.2" fill="#5bd9a5" opacity="0.9"/><polygon points="271.7,241.8 273.8,243.1 257.7,252.9" fill="#46d3af" opacity="0.9"/><polygon points="361.5,292.5 362.5,293.1 338.9,300.6" fill="#3acdb5" opacity="0.9"/><polygon points="291.3,390.2 293.7,392.0 339.3,372.3" fill="#4c34da" opacity="0.9"/><polygon points="222.5,191.7 226.4,194.0 188.1,214.4" fill="#56d8a8" opacity="0.9"/><polygon points="344.2,353.0 348.1,355.6 397.2,334.8" fill="#0eaac6" opacity="0.9"/><polygon points="420.4,305.2 422.5,306.5 378.8,327.6" fill="#69db9d" opacity="0.9"/><polygon points="403.8,257.5 406.0,258.6 429.4,247.6" fill="#64dba0" opacity="0.9"/><polygon points="277.8,366.4 278.7,367.0 329.0,345.5" fill="#532ada" opacity="0.9"/><polygon points="324.8,309.6 328.8,312.1 366.3,289.7" fill="#0a8fce" opacity="0.9"/><polygon points="264.4,331.1 268.3,333.8 288.9,323.6" fill="#6e00db" opacity="0.9"/><polygon points="278.4,225.8 280.7,227.2 262.0,238.1" fill="#67db9f" opacity="0.9"/><polygon points="285.4,239.7 286.7,240.4 261.3,253.0" fill="#5cdaa4" opacity="0.9"/><polygon points="415.0,271.9 417.4,273.2 429.7,265.1" fill="#5bd9a5" opacity="0.9"/><polygon points="306.5,298.7 310.2,301.0 340.0,289.2" fill="#0d8cce" opacity="0.9"/><polygon points="238.2,174.8 241.0,176.3 225.8,181.4" fill="#64dba0" opacity="0.9"/><polygon points="181.8,226.6 185.4,229.0 194.9,220.8" fill="#1286d0" opacity="0.9"/><polygon points="341.0,284.0 344.1,285.9 304.1,306.8" fill="#38ccb6" opacity="0.9"/><polygon points="218.0,224.8 218.9,225.4 200.1,234.7" fill="#0aa6c8" opacity="0.9"/><polygon points="233.1,234.6 235.7,236.2 197.5,257.0" fill="#17b3c3" opacity="0.9"/><polygon points="425.3,286.2 428.7,288.0 443.4,277.2" fill="#65dba0" opacity="0.9"/><polygon points="388.9,330.4 392.7,332.8 353.2,353.4" fill="#50d6ab" opacity="0.9"/><polygon points="305.5,306.1 309.1,308.4 262.6,329.4" fill="#029dca" opacity="0.9"/><polygon points="483.3,280.9 486.9,282.7 463.4,291.9" fill="#db4f28" opacity="0.9"/><polygon points="169.7,289.3 172.4,291.2 202.9,276.5" fill="#27c0bd" opacity="0.9"/><polygon points="319.2,340.6 320.7,341.6 266.0,362.3" fill="#1d78d2" opacity="0.9"/><polygon points="233.1,203.4 236.8,205.5 198.4,226.1" fill="#3acdb5" opacity="0.9"/><polygon points="325.3,370.9 328.0,372.7 300.7,382.2" fill="#2bc3bb" opacity="0.9"/><polygon points="358.3,244.5 360.5,245.7 345.5,253.8" fill="#db7f43" opacity="0.9"/><polygon points="450.8,287.6 452.4,288.4 473.0,277.4" fill="#7eda92" opacity="0.9"/><polygon points="239.1,173.2 242.7,175.1 256.0,167.1" fill="#53d7a9" opacity="0.9"/><polygon points="179.8,210.5 183.9,213.1 212.8,200.6" fill="#019acb" opacity="0.9"/><polygon points="176.5,227.0 180.4,229.6 220.6,206.4" fill="#1c7ad2" opacity="0.9"/><polygon points="385.7,260.6 386.6,261.1 403.8,250.5" fill="#52d7aa" opacity="0.9"/><polygon points="208.4,262.4 209.6,263.2 247.7,245.3" fill="#2271d3" opacity="0.9"/><polygon points="166.7,264.5 169.0,266.1 198.4,247.4" fill="#6e00db" opacity="0.9"/><polygon points="183.5,232.0 186.5,233.9 149.9,251.6" fill="#1188cf" opacity="0.9"/><polygon points="309.0,355.4 312.6,357.8 365.1,337.4" fill="#502eda" opacity="0.9"/><polygon points="320.1,366.2 323.9,368.8 377.1,334.6" fill="#14b0c4" opacity="0.9"/><polygon points="152.8,274.4 155.1,276.0 201.6,254.6" fill="#15b1c4" opacity="0.9"/><polygon points="254.5,337.6 257.7,339.8 235.7,350.5" fill="#6e00db" opacity="0.9"/><polygon points="323.2,257.1 324.7,258.0 342.2,245.6" fill="#44d1b1" opacity="0.9"/><polygon points="292.6,285.7 294.0,286.6 327.8,265.8" fill="#2968d5" opacity="0.9"/><polygon points="484.1,300.4 488.2,302.6 473.2,308.3" fill="#c9ae61" opacity="0.9"/><polygon points="300.5,256.0 303.4,257.7 266.8,269.4" fill="#54d8a9" opacity="0.9"/><polygon points="192.0,233.4 194.2,234.8 228.7,210.9" fill="#2f60d6" opacity="0.9"/><polygon points="224.5,177.4 228.2,179.5 246.0,169.8" fill="#4ed6ac" opacity="0.9"/><polygon points="375.5,229.1 379.4,231.2 364.0,238.1" fill="#db3018" opacity="0.9"/><polygon points="317.2,228.2 320.7,230.2 340.7,219.5" fill="#57d8a7" opacity="0.9"/><polygon points="180.9,212.9 181.8,213.4 150.7,226.8" fill="#31c7b9" opacity="0.9"/><polygon points="279.3,199.1 282.5,200.7 295.3,192.5" fill="#47d3af" opacity="0.9"/><polygon points="442.6,324.3 446.8,326.8 417.1,336.2" fill="#78db95" opacity="0.9"/><polygon points="200.5,248.5 202.0,249.5 214.2,241.4" fill="#4441d9" opacity="0.9"/><polygon points="418.4,314.7 422.6,317.2 383.1,335.1" fill="#72db99" opacity="0.9"/><polygon points="311.2,343.2 314.6,345.5 265.5,359.3" fill="#4939d9" opacity="0.9"/><polygon points="245.0,285.1 247.9,287.0 208.6,299.3" fill="#1582d0" opacity="0.9"/><polygon points="300.6,274.4 302.5,275.5 331.6,261.6" fill="#07a3c8" opacity="0.9"/><polygon points="291.9,330.1 293.6,331.2 305.5,323.0" fill="#6e00db" opacity="0.9"/><polygon points="312.6,225.5 316.8,227.8 327.0,221.8" fill="#50d6ab" opacity="0.9"/><polygon points="306.8,242.0 308.5,243.0 255.7,269.6" fill="#6ddb9c" opacity="0.9"/><polygon points="350.7,231.7 352.0,232.4 371.4,222.4" fill="#cdaa5e" opacity="0.9"/><polygon points="176.1,210.1 178.4,211.5 194.3,203.4" fill="#0ca8c7" opacity="0.9"/><polygon points="330.4,275.9 333.0,277.4 290.7,303.6" fill="#47d3af" opacity="0.9"/><polygon points="150.3,269.3 153.8,271.8 199.6,247.3" fill="#08a3c8" opacity="0.9"/><polygon points="334.9,302.1 337.9,303.9 380.5,285.6" fill="#07a2c9" opacity="0.9"/><polygon points="468.4,307.9 469.4,308.5 480.6,301.3" fill="#71db99" opacity="0.9"/><polygon points="189.5,216.1 190.6,216.8 205.1,209.8" fill="#0f8acf" opacity="0.9"/><polygon points="260.7,248.9 262.7,250.2 242.9,261.3" fill="#1fbac0" opacity="0.9"/><polygon points="234.7,197.0 236.3,197.9 254.8,187.1" fill="#38cbb6" opacity="0.9"/><polygon points="282.0,236.0 284.7,237.6 270.0,245.2" fill="#52d7aa" opacity="0.9"/><polygon points="177.4,291.9 178.5,292.7 218.6,263.7" fill="#13aec5" opacity="0.9"/><polygon points="335.2,303.0 336.3,303.7 282.3,323.0" fill="#0892cd" opacity="0.9"/><polygon points="276.5,220.7 277.9,221.5 263.0,228.0" fill="#57d8a7" opacity="0.9"/><polygon points="217.4,203.9 221.4,206.3 244.2,195.7" fill="#20bac0" opacity="0.9"/><polygon points="196.9,262.1 201.0,264.7 229.7,251.1" fill="#2d62d5" opacity="0.9"/><polygon points="219.5,268.2 221.7,269.7 245.6,252.7" fill="#3b4ed8" opacity="0.9"/><polygon points="346.0,255.4 349.5,257.4 362.8,250.5" fill="#67db9f" opacity="0.9"/><polygon points="324.3,258.2 328.4,260.6 290.8,278.8" fill="#5cdaa5" opacity="0.9"/><polygon points="339.2,260.7 342.6,262.6 354.5,256.5" fill="#3bcdb4" opacity="0.9"/><polygon points="229.9,205.0 231.5,206.0 244.7,199.5" fill="#22bcbf" opacity="0.9"/><polygon points="221.8,274.7 224.9,276.8 274.4,249.0" fill="#5624db" opacity="0.9"/><polygon points="432.2,262.3 435.4,264.0 411.2,276.6" fill="#caad61" opacity="0.9"/><polygon points="456.0,292.5 459.2,294.3 479.7,283.8" fill="#82d990" opacity="0.9"/><polygon points="229.8,205.7 231.2,206.6 243.6,197.8" fill="#30c6b9" opacity="0.9"/><polygon points="329.3,374.9 330.5,375.7 302.4,389.6" fill="#26bfbe" opacity="0.9"/><polygon points="166.6,216.2 170.6,218.8 197.0,197.7" fill="#05a1c9" opacity="0.9"/><polygon points="165.2,256.2 168.0,258.2 201.8,234.3" fill="#4146d8" opacity="0.9"/><polygon points="236.8,207.0 240.5,209.2 255.4,199.2" fill="#1db8c1" opacity="0.9"/><polygon points="342.1,353.7 346.2,356.4 383.8,335.8" fill="#28c1bd" opacity="0.9"/><polygon points="459.1,304.6 461.7,306.0 438.7,315.1" fill="#9bd080" opacity="0.9"/><polygon points="164.3,262.5 166.4,264.0 138.7,281.2" fill="#3951d7" opacity="0.9"/><polygon points="140.7,254.3 142.5,255.5 168.2,244.5" fill="#08a4c8" opacity="0.9"/><polygon points="345.6,372.8 346.9,373.7 388.4,355.8" fill="#31c7b9" opacity="0.9"/><polygon points="420.7,300.6 424.0,302.4 436.8,292.5" fill="#64dba0" opacity="0.9"/><polygon points="415.1,328.3 418.7,330.4 399.7,337.5" fill="#54d8a9" opacity="0.9"/><polygon points="338.1,335.5 340.7,337.2 296.1,351.7" fill="#30c7b9" opacity="0.9"/><polygon points="160.5,284.0 163.0,285.8 187.0,273.5" fill="#14b0c4" opacity="0.9"/><polygon points="194.7,212.6 198.8,215.1 170.9,230.6" fill="#1eb9c0" opacity="0.9"/><polygon points="278.9,240.1 281.6,241.7 301.5,229.4" fill="#18b3c3" opacity="0.9"/><polygon points="292.8,349.9 294.6,351.1 335.3,330.3" fill="#670bdb" opacity="0.9"/><polygon points="255.7,241.3 257.4,242.3 214.8,259.7" fill="#2ec5ba" opacity="0.9"/><polygon points="392.3,338.0 394.3,339.3 445.8,316.9" fill="#4ad4ae" opacity="0.9"/><polygon points="208.5,204.0 210.7,205.4 222.8,199.5" fill="#3bcdb4" opacity="0.9"/><polygon points="171.4,255.7 173.6,257.2 154.0,263.5" fill="#650edb" opacity="0.9"/><polygon points="305.1,267.5 307.2,268.8 328.0,256.1" fill="#22bcbf" opacity="0.9"/><polygon points="283.4,244.6 286.5,246.5 307.0,234.8" fill="#2cc3bb" opacity="0.9"/><polygon points="276.4,231.4 278.6,232.7 261.5,240.6" fill="#5edaa3" opacity="0.9"/><polygon points="241.1,324.3 245.0,327.0 291.6,304.4" fill="#6e00db" opacity="0.9"/><polygon points="223.6,206.9 226.9,208.8 243.5,200.4" fill="#11adc5" opacity="0.9"/><polygon points="270.4,316.6 272.1,317.7 254.3,325.1" fill="#660bdb" opacity="0.9"/><polygon points="350.3,355.0 351.6,355.8 391.5,340.9" fill="#11acc5" opacity="0.9"/><polygon points="336.0,262.1 337.7,263.2 303.9,283.7" fill="#7ada94" opacity="0.9"/><polygon points="233.4,326.3 235.2,327.6 290.2,307.9" fill="#5920db" opacity="0.9"/><polygon points="295.7,356.5 296.8,357.3 331.1,335.6" fill="#6e00db" opacity="0.9"/><polygon points="409.0,327.8 412.1,329.7 441.0,315.4" fill="#48d3af" opacity="0.9"/><polygon points="256.8,366.2 259.2,367.9 279.2,355.3" fill="#5e19db" opacity="0.9"/><polygon points="221.9,215.6 224.6,217.3 200.6,226.9" fill="#23bcbf" opacity="0.9"/><polygon points="252.4,335.1 255.3,337.1 311.2,310.2" fill="#6e00db" opacity="0.9"/><polygon points="391.4,276.3 395.6,278.7 375.9,287.7" fill="#54d8a9" opacity="0.9"/><polygon points="287.9,252.6 290.6,254.1 271.0,262.3" fill="#3dceb4" opacity="0.9"/><polygon points="207.1,195.1 210.0,196.8 229.5,187.4" fill="#3accb5" opacity="0.9"/><polygon points="116.8,243.5 119.3,245.3 145.5,229.6" fill="#0aa6c7" opacity="0.9"/><polygon points="236.9,304.6 239.1,306.1 262.1,291.6" fill="#4244d9" opacity="0.9"/><polygon points="434.7,320.9 438.3,323.0 416.3,330.7" fill="#72db99" opacity="0.9"/><polygon points="345.6,351.0 346.9,351.9 295.4,375.6" fill="#12adc5" opacity="0.9"/><polygon points="205.8,242.6 206.8,243.3 185.5,257.9" fill="#197dd1" opacity="0.9"/><polygon points="254.1,248.1 255.0,248.7 270.0,242.2" fill="#039fca" opacity="0.9"/><polygon points="485.3,288.3 487.2,289.3 472.8,297.6" fill="#db7f43" opacity="0.9"/><polygon points="365.9,325.9 367.3,326.8 334.0,345.7" fill="#26bfbd" opacity="0.9"/><polygon points="306.9,301.8 307.9,302.5 248.0,322.1" fill="#0aa6c7" opacity="0.9"/><polygon points="441.4,302.5 444.7,304.3 458.7,297.2" fill="#7cda93" opacity="0.9"/><polygon points="178.3,251.6 179.9,252.6 213.6,228.9" fill="#4c35da" opacity="0.9"/><polygon points="321.8,333.7 325.7,336.3 370.1,315.0" fill="#6114db" opacity="0.9"/><polygon points="435.2,311.8 438.2,313.5 406.5,324.5" fill="#76db96" opacity="0.9"/><polygon points="288.6,280.1 291.5,281.9 304.1,273.1" fill="#266bd4" opacity="0.9"/><polygon points="145.9,233.9 147.6,235.0 184.0,212.5" fill="#6311db" opacity="0.9"/><polygon points="479.2,282.4 482.6,284.2 464.7,291.2" fill="#db6a37" opacity="0.9"/><polygon points="243.7,206.0 245.8,207.2 210.7,226.7" fill="#44d2b0" opacity="0.9"/><polygon points="355.7,239.5 359.8,241.7 337.4,248.9" fill="#db6a37" opacity="0.9"/><polygon points="287.9,302.5 291.4,304.8 259.1,320.6" fill="#1483d0" opacity="0.9"/><polygon points="224.8,300.0 227.4,301.7 258.2,279.3" fill="#1286d0" opacity="0.9"/><polygon points="363.1,258.1 364.0,258.6 376.9,251.8" fill="#63dba1" opacity="0.9"/><polygon points="278.1,207.8 280.9,209.4 265.4,216.4" fill="#5bd9a5" opacity="0.9"/><polygon points="162.4,240.2 164.3,241.5 176.9,234.4" fill="#650ddb" opacity="0.9"/><polygon points="224.5,327.2 225.9,328.2 271.5,302.8" fill="#3c4dd8" opacity="0.9"/><polygon points="428.2,294.1 430.3,295.3 410.9,302.2" fill="#73db98" opacity="0.9"/><polygon points="318.8,253.9 321.2,255.3 333.6,248.8" fill="#3fcfb3" opacity="0.9"/><polygon points="299.4,368.8 301.3,370.1 332.2,354.0" fill="#1b7ad2" opacity="0.9"/><polygon points="442.0,325.1 443.8,326.1 458.7,317.6" fill="#5cd9a5" opacity="0.9"/><polygon points="350.1,354.2 354.3,357.0 383.1,341.7" fill="#23bdbe" opacity="0.9"/><polygon points="231.5,338.6 234.7,340.9 265.3,329.0" fill="#6c02db" opacity="0.9"/><polygon points="248.2,281.3 250.4,282.7 301.1,260.5" fill="#187ed1" opacity="0.9"/><polygon points="207.8,226.1 209.3,227.0 224.5,216.2" fill="#1285d0" opacity="0.9"/><polygon points="346.7,226.9 348.2,227.7 369.5,215.0" fill="#c5b264" opacity="0.9"/><polygon points="204.7,275.6 206.2,276.6 217.2,268.8" fill="#6e00db" opacity="0.9"/><polygon points="286.5,332.3 287.9,333.2 321.6,321.5" fill="#6e00db" opacity="0.9"/><polygon points="425.0,270.4 427.1,271.5 409.4,277.2" fill="#8bd68a" opacity="0.9"/><polygon points="346.6,318.8 348.8,320.1 363.2,311.1" fill="#2cc4bb" opacity="0.9"/><polygon points="215.2,332.6 217.4,334.2 243.9,321.5" fill="#3753d7" opacity="0.9"/><polygon points="263.9,215.5 265.5,216.4 252.3,221.6" fill="#43d1b1" opacity="0.9"/><polygon points="307.5,228.3 309.5,229.4 321.4,220.6" fill="#67db9f" opacity="0.9"/><polygon points="371.1,269.6 375.2,271.9 320.1,292.7" fill="#6bdb9c" opacity="0.9"/><polygon points="257.7,206.3 261.5,208.4 235.4,218.1" fill="#3dceb3" opacity="0.9"/><polygon points="239.5,275.7 241.6,277.1 254.5,268.4" fill="#187ed1" opacity="0.9"/><polygon points="179.5,234.7 180.9,235.6 211.4,220.8" fill="#2d62d5" opacity="0.9"/><polygon points="223.0,259.3 225.9,261.1 243.4,251.5" fill="#2074d3" opacity="0.9"/><polygon points="149.2,216.9 150.3,217.6 174.2,204.5" fill="#27c0bd" opacity="0.9"/><polygon points="292.9,295.1 294.6,296.2 317.8,280.2" fill="#3e49d8" opacity="0.9"/><polygon points="293.2,289.4 294.7,290.3 251.0,309.5" fill="#16b1c3" opacity="0.9"/><polygon points="253.1,249.3 256.1,251.1 276.1,239.7" fill="#06a2c9" opacity="0.9"/><polygon points="271.4,214.4 275.3,216.6 285.9,206.3" fill="#43d1b1" opacity="0.9"/><polygon points="206.0,259.9 207.3,260.8 251.4,230.7" fill="#276ad4" opacity="0.9"/><polygon points="132.5,278.6 134.7,280.2 163.0,260.2" fill="#019acb" opacity="0.9"/><polygon points="310.2,275.0 313.8,277.3 354.7,260.7" fill="#0eaac6" opacity="0.9"/><polygon points="378.9,330.1 382.1,332.1 335.1,355.3" fill="#52d7aa" opacity="0.9"/><polygon points="213.3,216.7 216.0,218.3 243.5,201.1" fill="#0d8cce" opacity="0.9"/><polygon points="238.4,306.1 240.4,307.4 260.9,294.0" fill="#2f60d6" opacity="0.9"/><polygon points="106.3,246.6 109.6,248.9 121.3,238.8" fill="#0da9c6" opacity="0.9"/><polygon points="212.1,303.1 215.9,305.8 256.5,276.1" fill="#19b5c2" opacity="0.9"/><polygon points="328.0,333.6 329.7,334.7 379.4,313.8" fill="#463ed9" opacity="0.9"/><polygon points="427.3,278.1 429.6,279.4 408.6,289.5" fill="#9ad081" opacity="0.9"/><polygon points="276.8,356.5 280.0,358.7 307.9,342.1" fill="#5c1cdb" opacity="0.9"/><polygon points="391.3,247.0 394.5,248.7 379.4,254.2" fill="#db7b40" opacity="0.9"/><polygon points="472.5,295.1 473.8,295.8 487.6,285.8" fill="#80d991" opacity="0.9"/><polygon points="317.6,386.5 318.6,387.2 348.1,372.9" fill="#40d0b2" opacity="0.9"/><polygon points="289.6,214.8 291.7,216.0 277.6,223.0" fill="#7eda92" opacity="0.9"/><polygon points="280.2,243.8 281.6,244.6 300.0,231.8" fill="#15b0c4" opacity="0.9"/><polygon points="212.7,240.3 214.7,241.6 227.2,230.7" fill="#1286d0" opacity="0.9"/><polygon points="266.3,317.5 268.8,319.1 290.5,306.9" fill="#5e19db" opacity="0.9"/><polygon points="246.5,178.6 248.0,179.4 236.6,184.2" fill="#60daa2" opacity="0.9"/><polygon points="359.8,334.5 363.4,336.8 394.3,318.9" fill="#1fb9c0" opacity="0.9"/><polygon points="364.7,280.1 368.8,282.5 343.0,295.3" fill="#46d3af" opacity="0.9"/><polygon points="400.4,308.8 401.4,309.4 421.3,297.1" fill="#52d7aa" opacity="0.9"/><polygon points="299.1,225.0 300.0,225.5 280.9,233.4" fill="#66db9f" opacity="0.9"/><polygon points="360.1,245.0 362.3,246.2 341.2,257.7" fill="#db6735" opacity="0.9"/><polygon points="311.6,386.7 313.8,388.2 374.9,361.2" fill="#1cb7c1" opacity="0.9"/><polygon points="197.7,192.9 199.9,194.2 177.9,202.8" fill="#58d9a7" opacity="0.9"/><polygon points="264.3,244.6 266.1,245.7 294.6,233.3" fill="#20bac0" opacity="0.9"/><polygon points="272.9,230.8 275.6,232.4 295.5,221.5" fill="#40d0b2" opacity="0.9"/><polygon points="168.3,236.9 169.2,237.5 196.6,222.9" fill="#6016db" opacity="0.9"/><polygon points="366.4,245.0 368.4,246.1 391.0,235.4" fill="#90d587" opacity="0.9"/><polygon points="335.5,226.4 338.8,228.2 351.7,218.0" fill="#93d385" opacity="0.9"/><polygon points="346.3,360.9 348.4,362.3 373.1,352.6" fill="#27c0bd" opacity="0.9"/><polygon points="288.7,235.1 291.7,236.8 272.2,248.3" fill="#60daa3" opacity="0.9"/><polygon points="288.6,272.8 292.3,275.1 309.1,265.8" fill="#1582d0" opacity="0.9"/><polygon points="235.7,274.8 238.6,276.7 259.3,264.9" fill="#177fd1" opacity="0.9"/><polygon points="298.6,303.2 301.5,305.0 345.4,288.3" fill="#3d4bd8" opacity="0.9"/><polygon points="459.2,314.1 463.4,316.4 436.7,327.3" fill="#79db95" opacity="0.9"/><polygon points="412.3,337.7 416.0,340.0 390.0,352.2" fill="#60daa2" opacity="0.9"/><polygon points="412.4,294.8 413.5,295.5 358.2,327.6" fill="#66db9f" opacity="0.9"/><polygon points="341.1,329.0 344.9,331.4 379.1,309.9" fill="#0298cb" opacity="0.9"/><polygon points="226.1,190.3 228.6,191.7 182.4,209.3" fill="#5bd9a5" opacity="0.9"/><polygon points="352.8,316.4 354.2,317.2 377.4,304.8" fill="#35c9b7" opacity="0.9"/><polygon points="307.8,216.1 309.3,216.9 296.6,222.4" fill="#a4cb7a" opacity="0.9"/><polygon points="349.2,348.8 350.7,349.8 291.5,378.8" fill="#30c6b9" opacity="0.9"/><polygon points="238.7,212.8 240.7,213.9 229.4,218.1" fill="#3acdb5" opacity="0.9"/><polygon points="338.9,278.5 340.2,279.3 362.3,269.3" fill="#25bfbe" opacity="0.9"/><polygon points="268.8,178.9 270.3,179.7 257.6,187.8" fill="#78db95" opacity="0.9"/><polygon points="210.0,272.2 211.4,273.1 240.0,258.6" fill="#640fdb" opacity="0.9"/><polygon points="277.4,249.7 281.5,252.1 245.1,266.9" fill="#34c9b8" opacity="0.9"/><polygon points="309.7,285.3 311.5,286.4 264.0,313.6" fill="#18b3c3" opacity="0.9"/><polygon points="355.6,352.6 358.5,354.5 405.5,329.2" fill="#1fb9c0" opacity="0.9"/><polygon points="260.6,222.7 262.5,223.8 216.2,251.3" fill="#43d1b1" opacity="0.9"/><polygon points="192.3,295.4 194.0,296.6 240.6,270.3" fill="#029dca" opacity="0.9"/><polygon points="377.9,323.2 379.1,324.0 422.6,306.8" fill="#3bcdb5" opacity="0.9"/><polygon points="279.7,238.2 283.6,240.5 298.6,232.8" fill="#29c1bc" opacity="0.9"/><polygon points="276.7,269.2 278.6,270.4 247.2,286.8" fill="#27c0bd" opacity="0.9"/><polygon points="507.1,285.6 510.1,287.2 484.5,300.8" fill="#db6031" opacity="0.9"/><polygon points="249.8,280.7 251.4,281.8 296.5,264.8" fill="#1780d1" opacity="0.9"/><polygon points="214.8,212.8 215.9,213.5 171.3,230.7" fill="#36cab7" opacity="0.9"/><polygon points="288.6,336.9 291.9,339.2 346.1,317.4" fill="#6d02db" opacity="0.9"/><polygon points="220.7,180.7 221.7,181.3 241.6,170.1" fill="#50d6ab" opacity="0.9"/><polygon points="229.9,197.6 231.2,198.4 247.2,190.0" fill="#4fd6ab" opacity="0.9"/><polygon points="243.4,297.9 245.1,299.0 289.3,275.4" fill="#3951d7" opacity="0.9"/><polygon points="304.4,248.9 308.1,251.1 270.9,263.7" fill="#50d6ab" opacity="0.9"/><polygon points="423.2,328.0 426.1,329.8 394.6,347.7" fill="#62dba1" opacity="0.9"/><polygon points="108.5,232.2 111.8,234.6 155.7,214.9" fill="#3ecfb3" opacity="0.9"/><polygon points="127.9,226.8 132.0,229.6 108.2,240.1" fill="#08a4c8" opacity="0.9"/><polygon points="184.6,300.8 185.8,301.7 211.0,291.7" fill="#13afc4" opacity="0.9"/><polygon points="387.7,269.2 390.3,270.6 411.9,261.2" fill="#4ed6ac" opacity="0.9"/><polygon points="289.5,336.5 291.8,338.0 321.6,323.3" fill="#6b04db" opacity="0.9"/><polygon points="187.4,308.8 188.5,309.5 235.5,286.0" fill="#12adc5" opacity="0.9"/><polygon points="145.5,268.7 147.4,270.1 171.9,255.6" fill="#019dca" opacity="0.9"/><polygon points="186.9,316.8 191.0,319.8 214.4,300.9" fill="#0892cd" opacity="0.9"/><polygon points="258.0,248.2 259.9,249.4 286.5,235.2" fill="#0faac6" opacity="0.9"/><polygon points="279.0,276.9 280.0,277.5 318.9,251.8" fill="#1c79d2" opacity="0.9"/><polygon points="388.5,305.2 390.7,306.5 331.9,329.1" fill="#49d4ae" opacity="0.9"/><polygon points="468.8,307.3 472.4,309.4 454.9,318.0" fill="#8fd587" opacity="0.9"/><polygon points="297.5,338.7 300.2,340.5 260.5,361.9" fill="#6e00db" opacity="0.9"/><polygon points="437.9,312.0 441.3,313.9 427.4,318.8" fill="#88d78c" opacity="0.9"/><polygon points="292.0,378.5 294.3,380.1 347.5,358.0" fill="#3458d7" opacity="0.9"/><polygon points="194.8,300.0 198.1,302.4 218.6,286.1" fill="#0ea9c6" opacity="0.9"/><polygon points="346.9,292.4 348.2,293.2 327.6,300.9" fill="#25bfbe" opacity="0.9"/><polygon points="319.2,367.1 321.9,369.0 357.3,354.2" fill="#0ea9c6" opacity="0.9"/><polygon points="219.2,298.4 221.3,299.9 191.2,315.2" fill="#2d62d5" opacity="0.9"/><polygon points="303.4,318.4 304.6,319.2 357.2,298.2" fill="#5724db" opacity="0.9"/><polygon points="179.7,245.1 181.7,246.5 198.9,236.8" fill="#660cdb" opacity="0.9"/><polygon points="357.2,260.6 359.7,262.0 381.4,253.0" fill="#4cd5ac" opacity="0.9"/><polygon points="172.8,256.5 175.6,258.4 210.3,234.4" fill="#4f30da" opacity="0.9"/><polygon points="298.7,229.8 301.5,231.3 284.3,242.1" fill="#6cdb9c" opacity="0.9"/><polygon points="271.2,277.4 272.4,278.2 224.7,297.9" fill="#0d8cce" opacity="0.9"/><polygon points="378.8,285.9 380.7,287.0 336.5,302.4" fill="#53d7a9" opacity="0.9"/><polygon points="273.3,360.0 274.8,361.2 320.8,335.3" fill="#6907db" opacity="0.9"/><polygon points="226.8,200.0 230.8,202.3 251.7,190.9" fill="#28c1bc" opacity="0.9"/><polygon points="290.6,330.3 293.9,332.5 342.6,305.1" fill="#5d1adb" opacity="0.9"/><polygon points="242.3,305.3 244.0,306.5 266.0,291.9" fill="#4342d9" opacity="0.9"/><polygon points="217.5,245.8 221.3,248.2 184.6,261.4" fill="#0298cb" opacity="0.9"/><polygon points="358.6,270.3 361.2,271.8 315.6,294.3" fill="#6adb9d" opacity="0.9"/><polygon points="146.3,278.1 148.4,279.6 199.3,256.3" fill="#15b0c4" opacity="0.9"/><polygon points="280.2,237.4 283.0,239.0 297.8,228.7" fill="#1fbac0" opacity="0.9"/><polygon points="252.0,184.8 255.9,187.0 263.0,179.9" fill="#56d8a8" opacity="0.9"/><polygon points="353.1,368.3 354.1,369.0 411.3,342.8" fill="#40d0b2" opacity="0.9"/><polygon points="381.2,247.3 384.7,249.2 407.4,236.3" fill="#99d181" opacity="0.9"/><polygon points="228.8,214.7 231.4,216.2 202.6,227.0" fill="#38cbb6" opacity="0.9"/><polygon points="199.3,311.3 202.0,313.2 238.6,299.4" fill="#27c0bd" opacity="0.9"/><polygon points="237.6,239.0 241.7,241.5 206.8,265.2" fill="#29c1bc" opacity="0.9"/><polygon points="460.5,283.8 463.3,285.3 447.6,292.6" fill="#db9852" opacity="0.9"/><polygon points="296.8,379.3 300.9,382.3 332.5,359.5" fill="#2869d4" opacity="0.9"/><polygon points="290.0,388.6 293.7,391.3 308.3,383.3" fill="#4243d9" opacity="0.9"/><polygon points="411.3,284.7 414.9,286.7 401.9,292.7" fill="#65dba0" opacity="0.9"/><polygon points="209.0,264.5 212.5,266.8 222.2,258.5" fill="#2b64d5" opacity="0.9"/><polygon points="261.7,236.3 265.5,238.6 275.3,229.7" fill="#23bdbf" opacity="0.9"/><polygon points="319.3,250.1 322.4,251.8 333.9,243.3" fill="#48d3ae" opacity="0.9"/><polygon points="329.9,351.7 331.8,352.9 304.7,363.0" fill="#11adc5" opacity="0.9"/><polygon points="354.3,319.2 357.7,321.4 372.6,311.3" fill="#35c9b7" opacity="0.9"/><polygon points="363.7,361.7 367.6,364.3 400.7,350.2" fill="#2cc4bb" opacity="0.9"/><polygon points="401.5,297.7 403.6,298.9 425.9,285.6" fill="#41d0b2" opacity="0.9"/><polygon points="338.1,240.1 340.2,241.3 324.2,246.4" fill="#d5a158" opacity="0.9"/><polygon points="263.6,201.6 265.6,202.7 289.7,192.2" fill="#39ccb5" opacity="0.9"/><polygon points="340.9,362.4 344.0,364.5 324.0,374.6" fill="#2cc3bb" opacity="0.9"/><polygon points="242.7,281.8 244.5,282.9 263.4,275.1" fill="#1681d1" opacity="0.9"/><polygon points="164.7,292.4 166.2,293.5 186.5,278.3" fill="#0fabc6" opacity="0.9"/><polygon points="341.6,267.0 342.7,267.7 365.7,253.7" fill="#3bcdb5" opacity="0.9"/><polygon points="422.4,281.0 424.4,282.1 438.0,274.7" fill="#5ad9a6" opacity="0.9"/><polygon points="377.3,351.0 381.1,353.3 421.4,330.6" fill="#13afc4" opacity="0.9"/><polygon points="295.2,392.3 297.4,393.9 340.3,365.4" fill="#1e76d3" opacity="0.9"/><polygon points="280.2,340.1 281.8,341.2 297.2,335.0" fill="#6e00db" opacity="0.9"/><polygon points="212.9,299.6 214.8,300.9 225.2,292.5" fill="#0aa6c7" opacity="0.9"/><polygon points="275.3,240.1 277.2,241.3 237.7,259.1" fill="#4ad4ae" opacity="0.9"/><polygon points="261.6,261.4 263.6,262.6 297.6,248.3" fill="#0991cd" opacity="0.9"/><polygon points="433.2,295.4 437.5,297.8 454.4,285.9" fill="#67db9e" opacity="0.9"/><polygon points="223.0,229.4 227.0,231.9 241.2,220.5" fill="#1e77d2" opacity="0.9"/><polygon points="245.9,248.0 249.9,250.5 279.6,232.5" fill="#0da9c6" opacity="0.9"/><polygon points="234.7,297.0 237.7,299.0 272.9,279.7" fill="#2d62d5" opacity="0.9"/><polygon points="310.5,255.7 312.9,257.1 295.2,262.7" fill="#4fd6ab" opacity="0.9"/><polygon points="412.7,301.0 415.3,302.4 439.6,288.6" fill="#4ad4ae" opacity="0.9"/><polygon points="269.7,277.7 273.4,280.0 296.6,266.5" fill="#1a7bd2" opacity="0.9"/><polygon points="280.4,193.9 284.4,196.1 261.2,207.8" fill="#85d88d" opacity="0.9"/><polygon points="432.0,287.6 433.9,288.6 409.0,298.1" fill="#7eda92" opacity="0.9"/><polygon points="298.1,270.6 301.0,272.4 258.5,298.0" fill="#2ac2bc" opacity="0.9"/><polygon points="199.5,200.4 203.7,203.0 219.1,195.1" fill="#41d0b2" opacity="0.9"/><polygon points="374.7,287.0 376.0,287.8 398.4,277.9" fill="#16b2c3" opacity="0.9"/><polygon points="396.5,294.2 400.5,296.5 420.4,285.7" fill="#49d4ae" opacity="0.9"/><polygon points="178.9,285.3 182.4,287.8 160.8,294.9" fill="#6311db" opacity="0.9"/><polygon points="357.0,295.0 358.8,296.1 326.9,307.1" fill="#30c7b9" opacity="0.9"/><polygon points="403.7,330.7 407.6,333.1 344.6,357.9" fill="#5bd9a5" opacity="0.9"/><polygon points="436.5,319.6 439.2,321.1 454.2,311.9" fill="#50d6ab" opacity="0.9"/><polygon points="280.8,286.5 282.5,287.6 323.0,262.7" fill="#256dd4" opacity="0.9"/><polygon points="177.2,280.0 179.2,281.4 164.5,288.1" fill="#670adb" opacity="0.9"/><polygon points="238.4,272.2 240.9,273.8 264.6,263.8" fill="#1a7cd1" opacity="0.9"/><polygon points="371.9,284.6 376.0,286.9 398.3,276.7" fill="#22bcbf" opacity="0.9"/><polygon points="395.9,347.9 399.3,350.0 417.9,335.6" fill="#33c8b8" opacity="0.9"/><polygon points="267.3,215.9 270.8,217.8 255.8,224.8" fill="#4bd5ad" opacity="0.9"/><polygon points="191.5,300.0 195.6,302.9 229.2,288.0" fill="#27c0bd" opacity="0.9"/><polygon points="260.6,219.3 262.9,220.6 250.7,226.2" fill="#47d3af" opacity="0.9"/><polygon points="347.8,286.5 351.0,288.4 360.3,281.0" fill="#0ba7c7" opacity="0.9"/><polygon points="123.9,226.9 126.3,228.5 95.4,237.9" fill="#31c7b9" opacity="0.9"/><polygon points="287.0,267.9 291.2,270.5 312.1,254.5" fill="#049fc9" opacity="0.9"/><polygon points="364.9,332.5 367.1,333.9 402.9,319.2" fill="#20bac0" opacity="0.9"/><polygon points="318.7,315.7 321.0,317.2 350.3,302.2" fill="#315cd6" opacity="0.9"/><polygon points="264.1,258.1 266.5,259.6 221.3,281.1" fill="#1fb9c0" opacity="0.9"/><polygon points="330.7,212.6 332.9,213.8 311.9,225.0" fill="#db582d" opacity="0.9"/><polygon points="418.2,273.7 420.6,274.9 443.0,263.8" fill="#52d7aa" opacity="0.9"/><polygon points="394.2,232.3 395.1,232.7 372.4,243.1" fill="#db3a1e" opacity="0.9"/><polygon points="284.3,305.2 288.5,308.0 252.4,319.0" fill="#266cd4" opacity="0.9"/><polygon points="372.9,255.4 375.8,257.0 358.2,265.2" fill="#c0b667" opacity="0.9"/><polygon points="295.7,291.3 298.4,293.0 253.2,313.1" fill="#019acb" opacity="0.9"/><polygon points="310.4,336.4 314.5,339.1 357.7,314.0" fill="#6e00db" opacity="0.9"/><polygon points="216.2,305.0 220.0,307.7 259.3,288.6" fill="#0da8c7" opacity="0.9"/><polygon points="233.0,276.6 235.5,278.2 197.6,296.4" fill="#0eaac6" opacity="0.9"/><polygon points="403.8,334.8 404.9,335.5 351.8,357.8" fill="#5ad9a5" opacity="0.9"/><polygon points="332.2,339.0 334.3,340.3 360.5,327.3" fill="#256dd4" opacity="0.9"/><polygon points="249.6,332.3 253.4,335.0 282.8,323.6" fill="#6212db" opacity="0.9"/><polygon points="120.5,253.5 123.8,255.8 160.5,231.3" fill="#0eaac6" opacity="0.9"/><polygon points="215.8,184.6 219.1,186.5 230.6,180.0" fill="#3fcfb3" opacity="0.9"/><polygon points="203.0,236.7 205.3,238.2 230.0,226.5" fill="#2e60d6" opacity="0.9"/><polygon points="359.8,363.5 362.7,365.4 334.3,374.8" fill="#20bbc0" opacity="0.9"/><polygon points="248.2,273.8 252.1,276.4 299.3,252.9" fill="#0793cd" opacity="0.9"/><polygon points="273.3,334.4 277.1,337.1 326.0,308.8" fill="#640fdb" opacity="0.9"/><polygon points="245.2,351.0 246.3,351.8 296.4,334.4" fill="#6410db" opacity="0.9"/><polygon points="133.7,240.6 137.8,243.5 111.7,255.1" fill="#6e00db" opacity="0.9"/><polygon points="145.9,237.7 147.3,238.7 105.8,255.3" fill="#3a4fd8" opacity="0.9"/><polygon points="225.7,252.4 228.4,254.2 249.0,240.3" fill="#0f8acf" opacity="0.9"/><polygon points="186.1,265.6 188.0,266.9 199.7,260.0" fill="#532ada" opacity="0.9"/><polygon points="391.4,315.4 393.3,316.6 358.1,336.7" fill="#58d9a6" opacity="0.9"/><polygon points="352.9,287.3 355.1,288.6 372.1,279.5" fill="#09a4c8" opacity="0.9"/><polygon points="336.6,259.1 337.6,259.6 350.5,251.9" fill="#36cab7" opacity="0.9"/><polygon points="288.8,305.3 292.6,307.8 270.7,318.0" fill="#0990cd" opacity="0.9"/><polygon points="360.7,305.7 363.4,307.3 332.8,323.5" fill="#30c6b9" opacity="0.9"/><polygon points="273.8,365.6 277.9,368.5 301.8,355.9" fill="#5625db" opacity="0.9"/><polygon points="366.2,331.6 367.3,332.3 435.7,307.1" fill="#39ccb5" opacity="0.9"/><polygon points="270.6,248.2 273.3,249.8 290.8,241.7" fill="#0ba7c7" opacity="0.9"/><polygon points="335.9,276.2 338.3,277.6 318.4,288.4" fill="#3cceb4" opacity="0.9"/><polygon points="269.6,265.7 272.4,267.4 298.4,253.7" fill="#049fc9" opacity="0.9"/><polygon points="279.0,319.5 282.5,321.8 262.9,327.6" fill="#502eda" opacity="0.9"/><polygon points="224.2,196.9 227.9,199.0 206.3,209.8" fill="#3acdb5" opacity="0.9"/><polygon points="215.0,187.6 216.0,188.2 226.3,181.2" fill="#37cbb6" opacity="0.9"/><polygon points="236.8,246.9 238.3,247.8 195.4,272.2" fill="#1bb6c2" opacity="0.9"/><polygon points="205.1,193.2 208.7,195.4 178.8,205.7" fill="#47d3af" opacity="0.9"/><polygon points="355.6,236.2 359.6,238.4 373.2,230.2" fill="#c6b163" opacity="0.9"/><polygon points="221.6,231.1 224.8,233.1 186.4,260.3" fill="#10acc5" opacity="0.9"/><polygon points="281.8,240.5 284.3,242.0 293.5,235.3" fill="#3bcdb4" opacity="0.9"/><polygon points="256.2,166.0 257.6,166.7 243.4,173.4" fill="#8fd588" opacity="0.9"/><polygon points="275.9,278.2 278.7,279.9 319.1,254.5" fill="#2f5fd6" opacity="0.9"/><polygon points="246.1,181.4 248.5,182.7 236.7,188.9" fill="#6ddb9c" opacity="0.9"/><polygon points="382.8,299.0 386.5,301.1 399.5,291.3" fill="#36cab7" opacity="0.9"/><polygon points="236.7,175.8 237.7,176.3 227.8,181.9" fill="#7fda91" opacity="0.9"/><polygon points="108.6,239.9 110.1,241.0 128.8,227.6" fill="#2ac2bc" opacity="0.9"/><polygon points="144.7,254.8 146.8,256.2 173.8,236.5" fill="#009bcb" opacity="0.9"/><polygon points="242.8,262.1 245.8,263.9 256.6,255.0" fill="#11adc5" opacity="0.9"/><polygon points="384.5,328.0 387.2,329.6 422.4,315.1" fill="#43d1b1" opacity="0.9"/><polygon points="303.3,321.7 307.3,324.3 346.1,298.3" fill="#5526da" opacity="0.9"/><polygon points="420.2,279.8 421.7,280.6 393.2,292.5" fill="#7fda91" opacity="0.9"/><polygon points="280.6,171.9 282.7,172.9 261.4,183.5" fill="#a1cd7c" opacity="0.9"/><polygon points="366.4,256.7 369.5,258.4 395.2,247.4" fill="#6adb9d" opacity="0.9"/><polygon points="227.0,319.9 228.0,320.7 276.7,299.5" fill="#1b7ad2" opacity="0.9"/><polygon points="246.2,320.9 250.0,323.5 286.2,310.1" fill="#6907db" opacity="0.9"/><polygon points="266.7,335.4 268.2,336.5 321.4,313.0" fill="#5c1bdb" opacity="0.9"/><polygon points="107.4,231.2 109.2,232.5 88.3,246.1" fill="#31c7b9" opacity="0.9"/><polygon points="315.2,318.8 318.5,320.9 284.1,338.3" fill="#0694cc" opacity="0.9"/><polygon points="237.0,244.7 240.3,246.8 214.4,258.4" fill="#07a2c9" opacity="0.9"/><polygon points="436.0,279.9 437.4,280.7 455.8,268.1" fill="#7cda93" opacity="0.9"/><polygon points="346.7,307.8 350.9,310.4 388.8,284.8" fill="#13afc4" opacity="0.9"/><polygon points="320.4,243.1 324.2,245.3 340.0,234.3" fill="#4ad4ae" opacity="0.9"/><polygon points="124.4,229.4 125.8,230.4 135.8,222.6" fill="#09a5c8" opacity="0.9"/><polygon points="374.9,260.4 378.1,262.1 364.3,268.1" fill="#91d486" opacity="0.9"/><polygon points="389.8,247.4 391.7,248.4 366.6,261.9" fill="#db773e" opacity="0.9"/><polygon points="159.0,208.3 161.9,210.1 181.9,198.9" fill="#42d1b1" opacity="0.9"/><polygon points="204.7,214.0 208.2,216.1 227.5,202.5" fill="#019cca" opacity="0.9"/><polygon points="329.6,334.2 332.1,335.8 386.7,307.4" fill="#3c4dd8" opacity="0.9"/><polygon points="304.6,394.1 305.7,394.9 339.6,379.9" fill="#029dca" opacity="0.9"/><polygon points="290.3,248.5 292.2,249.6 274.0,257.3" fill="#41d0b2" opacity="0.9"/><polygon points="234.9,172.7 236.3,173.5 225.8,179.3" fill="#70db9a" opacity="0.9"/><polygon points="300.6,315.0 303.5,316.9 263.5,328.2" fill="#1483d0" opacity="0.9"/><polygon points="244.6,196.7 247.7,198.4 236.0,202.7" fill="#54d8a9" opacity="0.9"/><polygon points="167.8,252.3 170.2,254.0 132.3,269.8" fill="#6e00db" opacity="0.9"/><polygon points="232.4,336.1 236.5,339.0 291.9,314.2" fill="#680adb" opacity="0.9"/><polygon points="444.7,302.6 446.0,303.4 429.5,311.2" fill="#95d384" opacity="0.9"/><polygon points="246.1,222.1 247.5,222.9 225.1,236.4" fill="#3accb5" opacity="0.9"/><polygon points="289.0,248.6 290.3,249.4 304.4,239.0" fill="#19b4c2" opacity="0.9"/><polygon points="328.7,251.2 330.8,252.4 298.8,264.3" fill="#8fd587" opacity="0.9"/><polygon points="236.7,197.0 240.2,199.0 221.4,207.4" fill="#54d8a8" opacity="0.9"/><polygon points="304.2,236.0 306.5,237.3 276.8,250.3" fill="#65dba0" opacity="0.9"/><polygon points="313.2,213.8 316.9,215.9 295.1,224.8" fill="#bbba6b" opacity="0.9"/><polygon points="164.7,282.1 168.7,284.9 206.8,258.9" fill="#22bcbf" opacity="0.9"/><polygon points="212.7,213.4 214.4,214.5 225.1,209.0" fill="#0595cc" opacity="0.9"/><polygon points="234.5,256.9 236.3,258.1 254.8,246.7" fill="#1780d1" opacity="0.9"/><polygon points="189.1,199.0 190.6,199.9 201.9,191.7" fill="#33c9b8" opacity="0.9"/><polygon points="213.5,334.9 216.3,337.0 246.9,319.8" fill="#335ad6" opacity="0.9"/><polygon points="314.7,213.5 318.5,215.5 339.9,202.6" fill="#68db9e" opacity="0.9"/><polygon points="189.3,213.2 190.5,213.9 204.5,205.7" fill="#1385d0" opacity="0.9"/><polygon points="390.8,245.0 393.9,246.6 369.3,257.0" fill="#db5e30" opacity="0.9"/><polygon points="225.9,209.9 228.5,211.4 202.0,225.9" fill="#43d1b1" opacity="0.9"/><polygon points="424.3,287.1 425.3,287.7 409.4,293.5" fill="#74db97" opacity="0.9"/><polygon points="254.8,271.4 256.6,272.6 294.4,255.6" fill="#0e8bce" opacity="0.9"/><polygon points="254.4,367.8 255.6,368.7 298.9,353.8" fill="#532ada" opacity="0.9"/><polygon points="359.9,312.2 362.2,313.5 406.7,291.7" fill="#1cb7c1" opacity="0.9"/><polygon points="243.9,225.5 245.2,226.3 258.6,216.6" fill="#08a4c8" opacity="0.9"/><polygon points="252.2,162.6 253.6,163.3 239.9,170.8" fill="#b2c271" opacity="0.9"/><polygon points="401.2,290.3 402.5,291.0 415.6,282.7" fill="#3fcfb3" opacity="0.9"/><polygon points="387.7,332.0 389.8,333.2 367.2,341.4" fill="#57d8a7" opacity="0.9"/><polygon points="331.8,326.6 334.3,328.2 367.4,310.3" fill="#2a66d5" opacity="0.9"/><polygon points="296.7,326.9 298.0,327.8 332.6,306.1" fill="#6908db" opacity="0.9"/><polygon points="101.1,240.8 105.2,243.7 133.9,230.9" fill="#3cceb4" opacity="0.9"/><polygon points="211.4,273.0 214.2,274.9 232.1,266.0" fill="#502eda" opacity="0.9"/><polygon points="148.2,237.3 149.9,238.4 111.5,260.5" fill="#463ed9" opacity="0.9"/><polygon points="171.4,245.4 174.7,247.6 211.1,223.4" fill="#5e19db" opacity="0.9"/><polygon points="340.9,236.4 344.9,238.5 321.2,249.3" fill="#db6333" opacity="0.9"/><polygon points="274.3,188.5 275.5,189.2 292.7,178.2" fill="#43d1b1" opacity="0.9"/><polygon points="265.3,331.5 269.1,334.1 322.5,308.4" fill="#660cdb" opacity="0.9"/><polygon points="210.8,252.0 213.6,253.8 265.4,230.0" fill="#1e77d2" opacity="0.9"/><polygon points="304.0,328.8 305.1,329.5 326.1,316.2" fill="#6e00db" opacity="0.9"/><polygon points="261.9,256.8 262.8,257.4 287.6,245.4" fill="#09a5c8" opacity="0.9"/><polygon points="207.3,278.2 209.1,279.5 221.4,270.9" fill="#5b1edb" opacity="0.9"/><polygon points="188.3,315.6 190.3,317.1 238.1,291.7" fill="#19b4c2" opacity="0.9"/><polygon points="226.9,196.5 228.9,197.7 245.3,189.7" fill="#37cbb6" opacity="0.9"/><polygon points="432.7,292.7 435.2,294.1 457.1,282.1" fill="#6edb9b" opacity="0.9"/><polygon points="438.6,285.9 441.6,287.5 424.0,295.1" fill="#99d181" opacity="0.9"/><polygon points="248.7,285.1 250.1,286.0 302.8,260.0" fill="#2f5fd6" opacity="0.9"/><polygon points="338.6,244.6 339.5,245.1 313.4,255.7" fill="#d6a158" opacity="0.9"/><polygon points="300.5,340.4 303.8,342.6 321.1,334.3" fill="#6e00db" opacity="0.9"/><polygon points="234.6,306.2 236.6,307.6 198.1,319.8" fill="#3f48d8" opacity="0.9"/><polygon points="178.1,225.9 181.2,228.0 198.6,214.1" fill="#2074d3" opacity="0.9"/><polygon points="294.7,260.0 298.7,262.5 264.0,283.2" fill="#45d2b0" opacity="0.9"/><polygon points="168.9,257.1 171.9,259.1 200.4,243.2" fill="#5c1bdb" opacity="0.9"/><polygon points="167.5,281.3 169.1,282.4 154.2,290.8" fill="#6e00db" opacity="0.9"/><polygon points="170.0,258.2 173.9,260.9 210.2,235.2" fill="#6310db" opacity="0.9"/><polygon points="426.9,326.1 430.4,328.2 452.8,314.8" fill="#51d7aa" opacity="0.9"/><polygon points="284.9,319.5 286.3,320.4 334.3,304.0" fill="#640fdb" opacity="0.9"/><polygon points="469.5,301.5 473.3,303.5 499.4,290.1" fill="#8cd689" opacity="0.9"/><polygon points="399.0,285.5 400.0,286.1 412.7,280.3" fill="#3cceb4" opacity="0.9"/><polygon points="379.0,354.8 382.1,356.8 429.0,334.1" fill="#1bb6c1" opacity="0.9"/><polygon points="237.4,183.4 239.8,184.8 256.8,173.0" fill="#45d2b0" opacity="0.9"/><polygon points="218.7,318.9 220.9,320.4 232.1,312.9" fill="#07a2c9" opacity="0.9"/><polygon points="307.6,237.8 308.5,238.3 290.5,249.7" fill="#73db98" opacity="0.9"/><polygon points="279.1,309.4 280.2,310.1 309.7,297.4" fill="#6e00db" opacity="0.9"/><polygon points="429.4,310.5 433.5,312.9 408.5,325.5" fill="#75db97" opacity="0.9"/><polygon points="181.3,198.4 184.2,200.2 202.7,188.6" fill="#36cab7" opacity="0.9"/><polygon points="397.5,255.6 400.9,257.5 427.5,246.1" fill="#59d9a6" opacity="0.9"/><polygon points="168.8,303.1 170.8,304.6 199.0,293.7" fill="#0ca8c7" opacity="0.9"/><polygon points="248.2,342.3 250.4,343.8 274.3,329.0" fill="#6b04db" opacity="0.9"/><polygon points="319.1,339.0 320.6,340.0 380.4,312.2" fill="#5d1bdb" opacity="0.9"/><polygon points="288.9,212.7 291.6,214.2 305.3,204.0" fill="#64dba0" opacity="0.9"/><polygon points="202.2,272.0 205.7,274.3 250.9,251.6" fill="#6e00db" opacity="0.9"/><polygon points="270.5,344.5 273.9,346.8 254.0,355.6" fill="#6311db" opacity="0.9"/><polygon points="239.5,202.6 242.5,204.3 201.5,219.0" fill="#41d0b2" opacity="0.9"/><polygon points="293.8,200.8 297.0,202.4 305.1,195.5" fill="#5fdaa3" opacity="0.9"/><polygon points="313.0,290.4 316.9,292.9 277.7,315.6" fill="#24bdbe" opacity="0.9"/><polygon points="281.3,204.5 282.4,205.1 264.9,211.7" fill="#69db9d" opacity="0.9"/><polygon points="349.2,303.6 352.8,305.8 335.3,310.0" fill="#1bb6c2" opacity="0.9"/><polygon points="265.4,281.9 268.6,284.0 279.0,274.9" fill="#3852d7" opacity="0.9"/><polygon points="295.5,317.9 298.7,320.0 247.9,337.9" fill="#1e76d2" opacity="0.9"/><polygon points="258.4,262.1 260.2,263.2 285.6,252.2" fill="#019acb" opacity="0.9"/><polygon points="202.6,276.3 206.7,279.1 193.6,284.6" fill="#246ed4" opacity="0.9"/><polygon points="134.4,232.7 137.3,234.7 123.1,240.7" fill="#325bd6" opacity="0.9"/><polygon points="167.3,260.4 168.3,261.1 184.9,251.6" fill="#5b1ddb" opacity="0.9"/><polygon points="345.1,362.0 347.8,363.8 393.9,333.5" fill="#2ac2bc" opacity="0.9"/><polygon points="325.7,353.1 327.3,354.2 281.8,376.7" fill="#0ca7c7" opacity="0.9"/><polygon points="158.1,266.6 162.0,269.3 215.4,246.3" fill="#315cd6" opacity="0.9"/><polygon points="310.2,222.0 311.2,222.5 326.6,215.7" fill="#6fdb9a" opacity="0.9"/><polygon points="190.9,280.1 193.9,282.1 222.9,266.8" fill="#6d00db" opacity="0.9"/><polygon points="163.7,217.4 165.5,218.5 211.3,199.9" fill="#06a2c9" opacity="0.9"/><polygon points="291.9,348.1 294.6,349.9 255.5,368.0" fill="#650ddb" opacity="0.9"/><polygon points="161.3,260.6 163.1,261.8 192.6,245.6" fill="#660cdb" opacity="0.9"/><polygon points="195.7,293.6 199.7,296.5 182.4,305.1" fill="#4c34da" opacity="0.9"/><polygon points="323.7,379.5 327.8,382.3 370.3,355.0" fill="#5edaa3" opacity="0.9"/><polygon points="226.3,193.1 227.5,193.8 243.5,186.0" fill="#55d8a8" opacity="0.9"/><polygon points="327.0,281.5 328.4,282.3 350.4,269.6" fill="#12aec5" opacity="0.9"/><polygon points="244.1,171.4 246.6,172.7 227.9,183.5" fill="#85d88e" opacity="0.9"/><polygon points="296.3,350.3 297.4,351.0 329.4,338.5" fill="#6e00db" opacity="0.9"/><polygon points="256.5,225.9 260.7,228.4 217.3,253.9" fill="#54d8a9" opacity="0.9"/><polygon points="237.1,232.0 240.2,233.9 254.7,226.7" fill="#029eca" opacity="0.9"/><polygon points="249.7,310.9 250.8,311.6 215.9,326.0" fill="#6015db" opacity="0.9"/><polygon points="353.0,335.9 354.0,336.5 391.1,321.3" fill="#18b4c3" opacity="0.9"/><polygon points="185.5,228.4 186.8,229.2 198.0,220.4" fill="#1681d1" opacity="0.9"/><polygon points="397.5,308.5 398.9,309.3 376.1,318.1" fill="#62dba1" opacity="0.9"/><polygon points="354.5,283.3 356.0,284.2 339.1,291.0" fill="#4dd5ac" opacity="0.9"/><polygon points="270.9,306.1 273.7,307.9 256.5,313.8" fill="#4046d8" opacity="0.9"/><polygon points="127.8,272.3 131.4,274.9 143.7,268.1" fill="#15b0c4" opacity="0.9"/><polygon points="249.1,311.4 253.0,314.1 294.3,295.9" fill="#6e00db" opacity="0.9"/><polygon points="264.0,222.5 267.2,224.3 289.8,213.4" fill="#23bdbe" opacity="0.9"/><polygon points="253.4,312.2 255.3,313.5 291.7,290.4" fill="#6e00db" opacity="0.9"/><polygon points="150.0,271.8 151.3,272.7 195.4,252.5" fill="#12adc5" opacity="0.9"/><polygon points="468.5,296.2 471.4,297.7 445.3,313.2" fill="#c5b264" opacity="0.9"/><polygon points="246.4,242.4 248.1,243.4 214.8,262.1" fill="#2cc3bb" opacity="0.9"/><polygon points="134.6,274.9 136.9,276.6 164.2,264.2" fill="#05a0c9" opacity="0.9"/><polygon points="312.9,290.8 315.6,292.5 358.7,271.2" fill="#0da9c6" opacity="0.9"/><polygon points="325.7,234.7 328.5,236.3 341.8,228.0" fill="#70db9a" opacity="0.9"/><polygon points="267.3,358.5 269.1,359.8 291.0,347.0" fill="#5625db" opacity="0.9"/><polygon points="224.0,309.5 226.9,311.5 267.6,292.2" fill="#05a0c9" opacity="0.9"/><polygon points="219.3,249.0 220.9,250.0 261.4,230.7" fill="#2c64d5" opacity="0.9"/><polygon points="315.3,293.1 317.1,294.2 362.5,270.0" fill="#0892cd" opacity="0.9"/><polygon points="328.5,313.2 332.7,315.8 272.1,340.2" fill="#0596cc" opacity="0.9"/><polygon points="191.0,288.0 193.8,290.0 180.6,296.2" fill="#5f17db" opacity="0.9"/><polygon points="300.4,246.8 303.1,248.4 322.2,238.1" fill="#42d0b2" opacity="0.9"/><polygon points="358.9,288.6 361.4,290.1 384.7,275.2" fill="#10acc5" opacity="0.9"/><polygon points="275.1,186.7 276.5,187.5 257.7,196.6" fill="#77db96" opacity="0.9"/><polygon points="325.7,348.1 329.6,350.8 266.8,375.8" fill="#039eca" opacity="0.9"/><polygon points="172.1,238.4 175.9,240.9 198.6,222.7" fill="#660cdb" opacity="0.9"/><polygon points="341.3,261.1 345.4,263.5 359.7,254.7" fill="#3fcfb3" opacity="0.9"/><polygon points="276.0,373.4 278.4,375.2 319.2,352.5" fill="#502fda" opacity="0.9"/><polygon points="247.1,274.9 248.9,276.0 286.5,257.4" fill="#1a7cd1" opacity="0.9"/><polygon points="299.3,347.7 302.0,349.6 358.0,319.7" fill="#6e00db" opacity="0.9"/><polygon points="313.0,239.9 316.8,242.0 290.3,251.8" fill="#7ada94" opacity="0.9"/><polygon points="296.7,238.0 299.4,239.6 265.3,256.6" fill="#65dba0" opacity="0.9"/><polygon points="255.7,179.1 259.4,181.1 267.0,174.6" fill="#5ddaa4" opacity="0.9"/><polygon points="335.5,248.1 336.4,248.6 347.3,240.8" fill="#5bd9a5" opacity="0.9"/><polygon points="412.8,332.3 416.8,334.7 437.3,323.1" fill="#4fd6ab" opacity="0.9"/><polygon points="203.4,307.8 205.9,309.5 251.6,280.4" fill="#16b1c3" opacity="0.9"/><polygon points="233.6,235.2 235.3,236.2 248.0,226.7" fill="#187fd1" opacity="0.9"/><polygon points="257.2,209.1 261.4,211.5 238.6,220.1" fill="#42d0b2" opacity="0.9"/><polygon points="221.8,306.7 224.8,308.9 237.8,298.6" fill="#1db7c1" opacity="0.9"/><polygon points="95.2,251.0 101.2,244.0 112.2,242.0 121.2,245.0 126.2,249.0 122.2,255.0 113.2,258.5 104.2,258.5" fill="#3fc9c0" filter="url(#b3)" opacity="0.85"/><polygon points="122.2,271.0 127.2,266.0 136.2,266.0 145.2,269.5 149.2,275.0 145.2,280.0 137.2,282.0 129.2,278.5" fill="#3fc9c0" filter="url(#b3)" opacity="0.85"/><polygon points="212.2,338.0 218.2,330.0 230.2,328.0 242.2,330.0 251.2,337.0 248.2,348.0 238.2,352.0 225.2,350.0" fill="#3fc9c0" filter="url(#b3)" opacity="0.85"/><polygon points="258.2,362.0 265.2,356.0 280.2,359.0 300.2,361.0 320.2,360.0 338.2,364.0 336.2,373.0 320.2,381.0 295.2,385.0 275.2,380.0 263.2,372.0" fill="#3fc9c0" filter="url(#b3)" opacity="0.85"/><polygon points="97.4,251.0 102.4,245.3 111.9,243.5 119.2,246.0 122.7,249.5 119.2,254.2 111.7,257.1 104.4,257.1" fill="#8fe08c" filter="url(#b2)" opacity="0.95"/><polygon points="124.4,271.5 128.4,267.6 135.9,267.6 142.9,270.6 145.7,275.3 142.2,279.3 135.4,280.2 129.1,277.1" fill="#8fe08c" filter="url(#b2)" opacity="0.95"/><polygon points="217.2,339.2 221.7,333.0 231.2,331.5 240.4,334.0 245.9,340.0 242.7,347.8 234.2,350.0 225.2,347.8" fill="#8fe08c" filter="url(#b2)" opacity="0.95"/><polygon points="262.2,365.0 268.2,360.0 281.2,362.2 298.2,364.0 314.2,364.0 329.2,366.5 330.7,373.0 318.2,379.8 297.7,383.2 281.2,380.5 269.2,374.5" fill="#8fe08c" filter="url(#b2)" opacity="0.95"/><polygon points="99.7,251.0 103.7,246.6 111.7,245.0 117.2,247.0 119.2,250.0 116.2,253.4 110.2,255.8 104.7,255.6" fill="#ee983c" filter="url(#b1)"/><polygon points="126.7,272.0 129.7,269.2 135.7,269.2 140.7,271.8 142.2,275.6 139.2,278.6 133.7,278.4 129.0,275.8" fill="#ee983c" filter="url(#b1)"/><polygon points="222.2,340.5 225.2,336.0 232.2,335.0 238.7,338.0 240.7,343.0 237.2,347.5 230.2,348.0 225.2,345.5" fill="#ee983c" filter="url(#b1)"/><polygon points="266.2,368.0 271.2,364.0 282.2,365.5 296.2,367.0 308.2,368.0 320.2,369.0 325.2,373.0 316.2,378.5 300.2,381.5 287.2,381.0 275.2,377.0" fill="#ee983c" filter="url(#b1)"/><line x1="97.2" y1="253.0" x2="276.0" y2="164.6" stroke="#081830" stroke-opacity="0.60" stroke-width="0.4"/><line x1="109.3" y1="261.8" x2="288.2" y2="170.7" stroke="#081830" stroke-opacity="0.60" stroke-width="0.4"/><line x1="122.7" y1="271.7" x2="301.8" y2="177.6" stroke="#081830" stroke-opacity="0.60" stroke-width="0.4"/><line x1="137.6" y1="282.6" x2="316.9" y2="185.2" stroke="#081830" stroke-opacity="0.60" stroke-width="0.4"/><line x1="149.7" y1="291.4" x2="329.2" y2="191.4" stroke="#081830" stroke-opacity="0.60" stroke-width="0.4"/><line x1="161.9" y1="300.3" x2="341.5" y2="197.6" stroke="#081830" stroke-opacity="0.55" stroke-width="0.4"/><line x1="176.9" y1="311.3" x2="356.7" y2="205.3" stroke="#081830" stroke-opacity="0.38" stroke-width="0.4"/><line x1="191.1" y1="321.8" x2="371.1" y2="212.6" stroke="#081830" stroke-opacity="0.22" stroke-width="0.4"/><line x1="203.1" y1="330.5" x2="383.2" y2="218.7" stroke="#081830" stroke-opacity="0.09" stroke-width="0.4"/></g><polygon points="263.2,393.5 280.2,400.0 289.2,401.5 296.2,397.0 482.7,261.0 483.6,263.0 482.5,272.8 296.2,408.2 290.2,411.0 284.2,410.5 263.2,396.0" fill="url(#side)" /><polygon points="264.2,393.6 272.2,389.0 290.2,385.5 312.2,380.5 335.2,364.0 342.2,363.5 296.2,397.4 289.2,401.8 280.2,400.3" fill="url(#brim)" /><polygon points="75.8,245.6 76.7,243.6 265.2,154.6 269.0,154.6 272.2,156.4 272.7,163.2 271.2,163.3 95.2,244.6 90.2,247.5 82.2,249.5 77.2,248.5" fill="url(#lrim)" /><polygon points="87.2,247.0 93.2,241.2 180.2,200.6 180.2,204.6 95.2,244.8" fill="url(#lrimb)" /><polygon points="84.2,246.5 91.2,239.6 160.2,207.2 160.2,210.0 93.2,241.2" fill="url(#lrimc)" /><polygon points="94.2,243.6 271.2,161.2 271.8,164.4 95.2,246.4" fill="url(#lwall)" /><line x1="95.2" y1="246.2" x2="271.6" y2="164.2" stroke="#06202c" stroke-opacity="0.55" stroke-width="0.5"/><polygon points="268.7,154.4 272.2,155.0 477.7,256.0 482.2,258.5 483.4,261.0 481.2,263.0 466.2,260.8 464.7,260.0 432.2,246.4 400.2,231.0 360.2,210.5 320.2,189.5 290.2,173.8 272.2,164.5 270.7,163.0" fill="#a51a0c" /><polygon points="268.7,154.4 272.2,155.0 477.7,256.0 482.2,258.5 483.4,261.0 480.2,262.0 468.2,258.6 400.2,226.0 320.2,185.2 273.2,161.0 269.2,159.5" fill="#e2391c" /><ellipse cx="309.0" cy="173.5" rx="6.4" ry="4.2" fill="#e2391c" /><ellipse cx="308.4" cy="174.1" rx="2.6" ry="1.7" fill="#8f1408" /><ellipse cx="348.0" cy="193.0" rx="6.4" ry="4.2" fill="#e2391c" /><ellipse cx="347.4" cy="193.6" rx="2.6" ry="1.7" fill="#8f1408" /><ellipse cx="393.5" cy="215.8" rx="6.4" ry="4.2" fill="#e2391c" /><ellipse cx="392.9" cy="216.4" rx="2.6" ry="1.7" fill="#8f1408" /><ellipse cx="439.7" cy="237.9" rx="6.4" ry="4.2" fill="#e2391c" /><ellipse cx="439.1" cy="238.5" rx="2.6" ry="1.7" fill="#8f1408" /><ellipse cx="268.2" cy="157.4" rx="2.4" ry="1.6" fill="#9a3010" /><ellipse cx="475.8" cy="260.2" rx="2.6" ry="1.7" fill="#8f1408" /><ellipse cx="82.2" cy="245.8" rx="2.6" ry="1.7" fill="#2a7a5a" /><ellipse cx="134.2" cy="221.0" rx="2.6" ry="1.7" fill="#5a6a2a" /><ellipse cx="182.6" cy="198.4" rx="2.6" ry="1.7" fill="#6a5a20" /><ellipse cx="228.0" cy="176.4" rx="2.6" ry="1.7" fill="#9a3a10" /><polygon points="184.2,197.2 191.2,194.0 184.2,199.6" fill="#e8953c" /><polygon points="229.2,175.0 238.2,171.2 230.2,177.8" fill="#e8451c" /><polygon points="339.9,352.6 362.9,337.4 364.9,337.4 343.9,356.0" fill="#e8923c" /><ellipse cx="340.9" cy="354.4" rx="2.8" ry="1.9" fill="#5a5a2a" /><polygon points="389.2,317.8 412.2,302.6 414.2,302.6 393.2,321.2" fill="#e8923c" /><ellipse cx="390.2" cy="319.6" rx="2.8" ry="1.9" fill="#5a5a2a" /><polygon points="435.2,286.0 458.2,270.8 460.2,270.8 439.2,289.4" fill="#e8923c" /><ellipse cx="436.2" cy="287.8" rx="2.8" ry="1.9" fill="#5a5a2a" /><ellipse cx="287.2" cy="392.4" rx="3.2" ry="2.2" fill="#1f7a78" /><polygon points="87.7,246.0 77.2,252.3 73.3,253.5 59.6,256.9 60.2,267.5 71.4,274.8 89.2,268.5 93.2,272.0 96.2,276.5 93.3,278.1 93.9,286.2 107.7,297.5 110.2,296.2 128.9,293.5 135.2,298.8 137.1,303.8 132.7,308.1 132.7,316.2 149.6,328.8 166.4,325.0 170.2,327.5 177.7,335.0 180.2,338.8 176.4,341.5 176.4,349.4 193.9,362.5 215.2,357.5 222.7,360.0 225.2,365.0 225.2,371.2 219.6,379.4 218.9,386.9 237.7,401.9 240.8,398.1 262.7,393.8 272.2,391.8 290.2,385.5 312.2,380.5 312.2,379.0 300.2,381.5 287.7,383.8 277.2,379.5 266.4,373.8 245.2,357.5 235.2,350.0 213.9,335.0 197.7,321.2 180.2,311.2 160.2,297.5 135.2,280.0 110.2,261.2 93.9,248.8" fill="#6b10d8" /><polygon points="287.7,383.8 312.2,378.5 360.2,343.5 362.2,346.5 323.2,375.4 308.2,383.6 286.2,388.2 272.7,392.2" fill="url(#strip)" /><polygon points="59.6,256.9 70.2,263.5 74.2,262.3 90.7,268.3 89.2,268.8 71.4,274.8 60.2,267.5" fill="#4a0a9e" /><polygon points="93.3,278.1 105.8,286.1 109.8,284.9 126.3,290.6 128.7,293.6 110.2,296.2 107.7,297.5 93.9,286.2" fill="#4a0a9e" /><polygon points="132.7,308.1 147.7,317.5 151.4,316.2 166.4,321.5 168.2,326.0 166.4,325.0 149.6,328.8 132.7,316.2" fill="#4a0a9e" /><polygon points="176.4,341.5 192.1,351.2 196.4,349.4 215.2,353.1 216.2,357.6 215.2,357.5 193.9,362.5 176.4,349.4" fill="#4a0a9e" /><polygon points="219.6,379.4 236.4,388.8 240.2,386.9 262.7,391.2 272.7,392.2 262.7,393.9 240.8,398.1 237.7,401.9 218.9,386.9" fill="#4a0a9e" /><polygon points="98.3,267.5 98.8,274.0 102.9,276.5 106.9,275.5 109.6,267.5" fill="#2c2f98" /><ellipse cx="103.9" cy="267.5" rx="5.6" ry="3.8" fill="#3f58c8" /><ellipse cx="104.6" cy="267.1" rx="3.1" ry="2.1" fill="#34128a" /><polygon points="137.1,293.8 137.5,300.2 141.7,302.8 145.7,301.8 148.3,293.8" fill="#2c2f98" /><ellipse cx="142.7" cy="293.8" rx="5.6" ry="3.8" fill="#3f58c8" /><ellipse cx="143.3" cy="293.4" rx="3.1" ry="2.1" fill="#34128a" /><polygon points="180.8,325.6 181.2,332.1 185.4,334.6 189.4,333.6 192.1,325.6" fill="#2c2f98" /><ellipse cx="186.4" cy="325.6" rx="5.6" ry="3.8" fill="#3f58c8" /><ellipse cx="187.1" cy="325.2" rx="3.1" ry="2.1" fill="#34128a" /><polygon points="225.8,358.1 226.2,364.6 230.4,367.1 234.4,366.1 237.1,358.1" fill="#2c2f98" /><ellipse cx="231.4" cy="358.1" rx="5.6" ry="3.8" fill="#3f58c8" /><ellipse cx="232.1" cy="357.7" rx="3.1" ry="2.1" fill="#34128a" /><ellipse cx="187.7" cy="310.2" rx="8.0" ry="5.2" fill="#11586a" /><ellipse cx="186.4" cy="311.4" rx="6.2" ry="3.8" fill="#0e4a5c" /></svg>
    <!-- legend -->
    <div class="abs" style="left:186.8px;top:453.8px;width:319.4px;height:13.2px;background:linear-gradient(90deg,#8000ff 0%,#5a3cfb 6.25%,#4062fa 12.5%,#2c8cf2 18.75%,#00b4ec 25%,#12c8e6 31.25%,#40ecd4 37.5%,#60f8c4 43.75%,#80ffb4 50%,#a0f8a2 56.25%,#c0ec90 62.5%,#e0cc78 68.75%,#ffb462 75%,#ff8c49 81.25%,#ff6232 87.5%,#ff3219 93.75%,#ff0000 100%)"></div>
    <div class="t lg" style="left:347.2px;top:434.9px;width:0;font-family:'DejaVu Sans','Liberation Sans',sans-serif;font-size:10.3px"><span class="d">data</span></div>
    <div class="t lg" style="left:184.6px;top:442.3px;width:0"><span class="c">1.00</span></div>
    <div class="t lg" style="left:222.3px;top:442.3px;width:0"><span class="c">2.36e+03</span></div>
    <div class="t lg" style="left:257.8px;top:442.3px;width:0"><span class="c">4.73e+03</span></div>
    <div class="t lg" style="left:293.3px;top:442.3px;width:0"><span class="c">7.09e+03</span></div>
    <div class="t lg" style="left:328.8px;top:442.3px;width:0"><span class="c">9.45e+03</span></div>
    <div class="t lg" style="left:364.3px;top:442.3px;width:0"><span class="c">1.18e+04</span></div>
    <div class="t lg" style="left:399.8px;top:442.3px;width:0"><span class="c">1.42e+04</span></div>
    <div class="t lg" style="left:435.3px;top:442.3px;width:0"><span class="c">1.65e+04</span></div>
    <div class="t lg" style="left:470.8px;top:442.3px;width:0"><span class="c">1.89e+04</span></div>
    <div class="t lg" style="left:506.2px;top:442.3px;width:0"><span class="c">2.13e+04</span></div>
    <!-- toolbar -->
    <div class="abs" id="toolbar" style="left:9.8px;top:10.6px;width:258.6px;height:19.3px;background:#fff;border-radius:3px;box-shadow:0 0.8px 1.4px rgba(0,0,0,.38),0 0 0.6px rgba(0,0,0,.12)">
      <svg class="abs" style="left:0;top:0;will-change:transform" width="258.6" height="19.3" viewBox="0 0 258.6 19.3">
        <path d="M21.6 0V19.3M47.6 0V19.3M137.6 0V19.3" stroke="#e4e4e4" stroke-width="0.5"/>
        <g fill="#222"><circle cx="11.3" cy="7.6" r="0.8"/><circle cx="11.3" cy="10.2" r="0.8"/><circle cx="11.3" cy="12.8" r="0.8"/></g>
        <g fill="none" stroke="#222" stroke-width="1.1"><path d="M31.2 9.2V7H33.6M35.6 7H38V9.2M38 11.4V13.6H35.6M33.6 13.6H31.2V11.4"/><path d="M31.4 7.2L33.6 9.4M37.8 7.2L35.6 9.4M31.4 13.4L33.6 11.2M37.8 13.4L35.6 11.2" stroke-width="0.9"/></g>
        <g fill="none" stroke="#333" stroke-width="0.8">
          <path d="M60.7 7V11L56.9 13.3M60.7 11L64.5 13.3"/>
          <path d="M81.9 7V11L78.1 13.3M81.9 11L85.7 13.3"/>
          <path d="M103 7V11L99.2 13.3M103 11L106.8 13.3"/>
          <path d="M124.3 7V11L120.5 13.3M124.3 11L128.1 13.3"/>
        </g>
        <g fill="#333"><circle cx="60.7" cy="7.2" r="0.95"/><circle cx="57.1" cy="13.2" r="0.95"/><circle cx="64.3" cy="13.2" r="0.95"/><circle cx="78.3" cy="13.2" r="1"/><circle cx="106.6" cy="13.2" r="1"/><circle cx="124.3" cy="7.2" r="1"/></g>
        <!-- grid off -->
        <rect x="144.6" y="5.2" width="9.6" height="9.6" rx="0.8" fill="#777"/>
        <g fill="#fff"><rect x="146" y="6.6" width="1.8" height="1.8"/><rect x="148.6" y="6.6" width="1.8" height="1.8"/><rect x="151.2" y="6.6" width="1.8" height="1.8"/><rect x="146" y="9.2" width="1.8" height="1.8"/><rect x="151.2" y="9.2" width="1.8" height="1.8"/><rect x="146" y="11.8" width="1.8" height="1.8"/><rect x="148.6" y="11.8" width="1.8" height="1.8"/></g>
        <path d="M144.3 3.9L155.9 15.3" stroke="#fff" stroke-width="1.1"/><path d="M143.4 4.2L155.4 16" stroke="#6e6e6e" stroke-width="1"/>
        <!-- cube off -->
        <path d="M168.4 4.8L173.2 7.4V12.8L168.4 15.4L163.6 12.8V7.4Z" fill="#777"/>
        <path d="M168.6 7.6 A2.2 2.2 0 0 1 170.8 9.8" stroke="#fff" stroke-width="0.9" fill="none"/>
        <path d="M163.5 4.1L174.9 15.1" stroke="#fff" stroke-width="1.1"/><path d="M162.6 4.4L174.4 15.8" stroke="#6e6e6e" stroke-width="1"/>
        <!-- square foot -->
        <path d="M182.8 5.2H192.6V8.2H185.8V15H182.8Z" fill="#3a3a3a"/>
        <path d="M186.6 6V8.2M188.4 6.6V8.2M190.2 6V8.2M191.8 6.6V8.2M183.6 9.4H185.8M184.2 11H185.8M183.6 12.6H185.8M184.2 14.2H185.8" stroke="#fff" stroke-width="0.7"/>
        <!-- axis arrows -->
        <g fill="none" stroke="#555" stroke-width="0.8"><path d="M206.9 5.6V11.4L202 14.6M206.9 11.4L211.8 14.6"/><path d="M205.6 7L206.9 5.4L208.2 7M202 13L201.8 14.8L203.6 14.8M211.8 13L212 14.8L210.2 14.8" stroke-width="0.7"/><path d="M210.8 5.4V9.6M210.2 9.6H211.6" stroke-width="0.6"/></g>
        <!-- png -->
        <rect x="223.4" y="6.3" width="7.2" height="7.2" rx="0.9" fill="#111"/>
        <text x="227" y="10.85" font-size="2.6" font-weight="bold" fill="#fff" text-anchor="middle" font-family="Liberation Sans, sans-serif" opacity="0.96">PNG</text>
        <!-- download -->
        <path d="M247.2 6.2H249.2V9H250.8L248.2 11.8L245.6 9H247.2Z" fill="#222"/><path d="M245.4 13.3H251" stroke="#222" stroke-width="0.9"/>
      </svg>
    </div>
    <!-- side icons -->
    <svg class="abs" style="left:516px;top:90px" width="16" height="162" viewBox="0 0 16 162">
      <g fill="#bdbdbd">
        <rect x="4" y="2.2" width="1.6" height="1.6"/><rect x="7" y="2.2" width="1.6" height="1.6"/><rect x="10" y="2.2" width="1.6" height="1.6"/>
        <rect x="5.5" y="3.8" width="1.6" height="1.6"/><rect x="8.5" y="3.8" width="1.6" height="1.6"/>
        <rect x="4" y="5.4" width="1.6" height="1.6"/><rect x="7" y="5.4" width="1.6" height="1.6"/><rect x="10" y="5.4" width="1.6" height="1.6"/>
        <rect x="5.5" y="7" width="1.6" height="1.6"/><rect x="8.5" y="7" width="1.6" height="1.6"/>
        <rect x="4" y="8.4" width="1.6" height="1.4"/><rect x="7" y="8.4" width="1.6" height="1.4"/><rect x="10" y="8.4" width="1.6" height="1.4"/>
      </g>
      <g fill="#b4b4b4"><circle cx="7.8" cy="26" r="2.3"/><circle cx="6.2" cy="28.6" r="2.3"/><circle cx="9.4" cy="28.6" r="2.3"/></g>
      <g fill="none" stroke="#c6c6c6" stroke-width="0.8"><circle cx="7.6" cy="47" r="2.1"/><circle cx="6.2" cy="49.6" r="2.1"/><circle cx="9.2" cy="49.6" r="2.1"/></g>
      <g fill="none" stroke="#c8c8c8" stroke-width="0.7"><path d="M5 67H11V73.4H5ZM5 70.2H11M8 67V73.4M4 68.4H5M4 72H5"/></g>
      <g fill="none" stroke="#c8c8c8" stroke-width="0.8"><path d="M7.8 87.6L10.8 89.4V92.8L7.8 94.6L4.8 92.8V89.4Z"/><circle cx="7.8" cy="91.1" r="1.1"/></g>
      <g fill="none" stroke="#cdcdcd" stroke-width="0.7"><path d="M4.4 110V115.4M11.2 110V115.4M4.4 112.6H11.2M4.4 115.4H11.2"/></g>
      <g fill="none" stroke="#c8c8c8" stroke-width="0.7"><circle cx="7.8" cy="131.6" r="1.7"/><path d="M5 137V135.2H10.6V137M4 137.2H11.6"/></g>
      <g fill="none" stroke="#c6c6c6" stroke-width="0.7"><path d="M7.8 151.4L11.6 156.6L7.8 158.6L4 156.6ZM7.8 151.4V158.6M4.4 156.6H11.2"/></g>
    </svg>
    <!-- scrollbar -->
    <div class="abs" style="left:534.9px;top:0;width:9.3px;height:491px;background:#f1f1f1"></div>
    <svg class="abs" style="left:534.9px;top:0" width="9.3" height="491" viewBox="0 0 9.3 491"><path d="M3 6.2L4.6 4.4L6.2 6.2Z" fill="#8a8a8a"/><path d="M3 484.4L4.6 486.2L6.2 484.4Z" fill="#8a8a8a"/></svg>
  </div>
</div>
</body>
</html>
